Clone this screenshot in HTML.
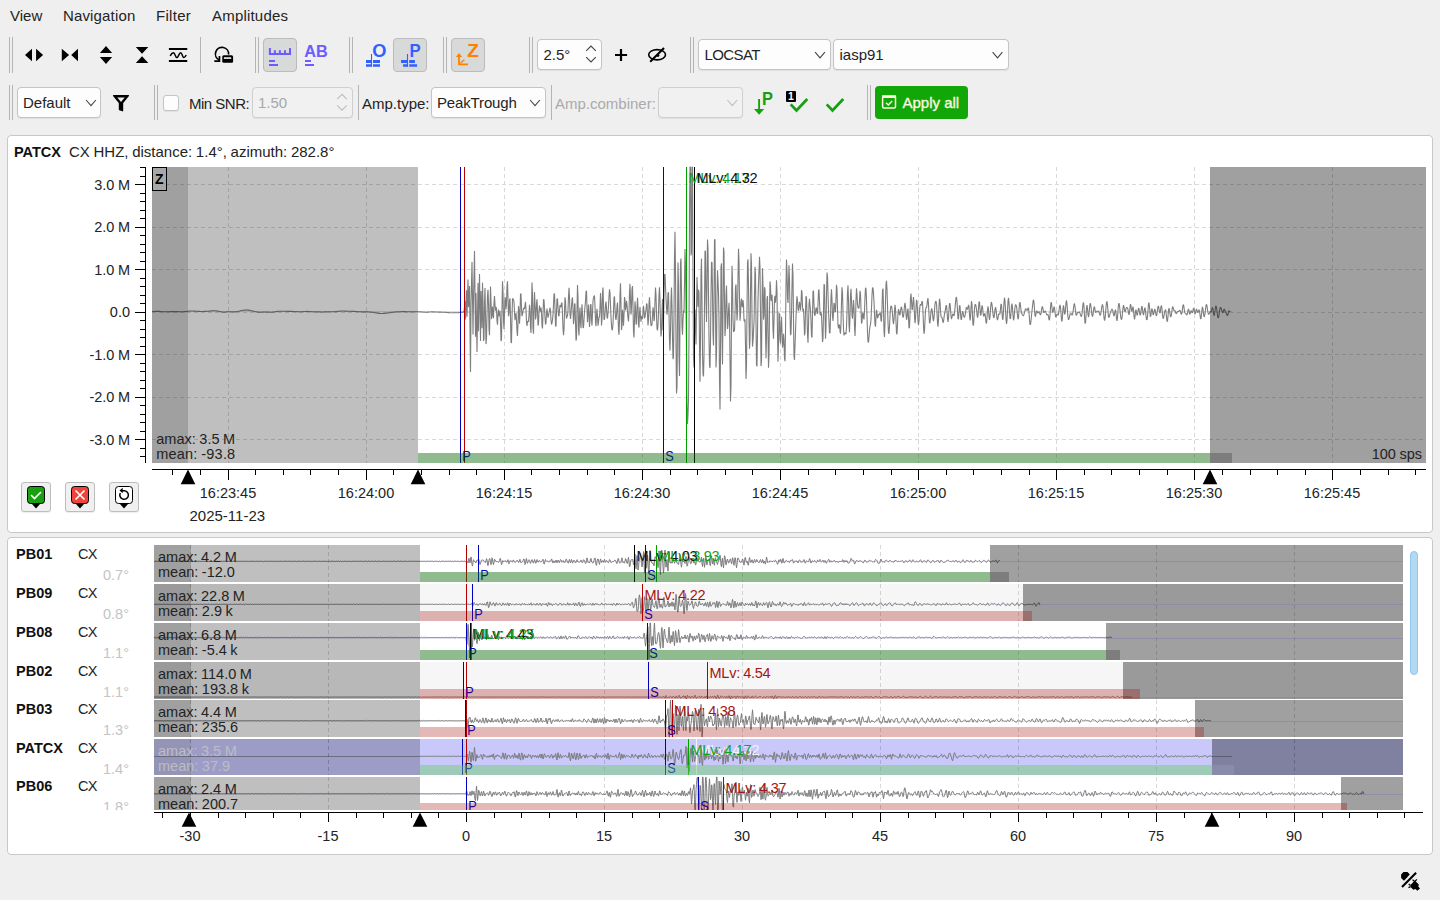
<!DOCTYPE html>
<html><head><meta charset="utf-8"><title>Amplitude picker</title>
<style>
html,body{margin:0;padding:0}
body{width:1440px;height:900px;overflow:hidden;background:#efefef;position:relative;font-family:"Liberation Sans",sans-serif;font-size:15px;color:#232323}
.a{position:absolute;white-space:nowrap}
.t{position:absolute;white-space:nowrap;line-height:18px;height:18px}
.box{position:absolute;box-sizing:border-box;border:1px solid #c4c4c4;border-radius:4px;background:#fdfdfd;box-shadow:0 1px 1px rgba(0,0,0,.07)}
.dis{background:#f1f1f1;border-color:#cfcfcf}
.chk{position:absolute;box-sizing:border-box;border:1px solid #bbb;border-radius:4px;background:#d8d9d9}
.panel{position:absolute;box-sizing:border-box;border:1px solid #c8c8c8;border-radius:4px;background:#fff}
.hd{position:absolute;width:1px;background:#b4b4b4}
svg{position:absolute;left:0;top:0}
svg text{font-family:"Liberation Sans",sans-serif;font-size:14.500px;word-spacing:-.5px}
</style></head><body>
<div class="t" style="left:10px;top:7px;">View</div>
<div class="t" style="left:63px;top:7px;letter-spacing:.15px">Navigation</div>
<div class="t" style="left:156px;top:7px;letter-spacing:.3px">Filter</div>
<div class="t" style="left:212px;top:7px;letter-spacing:.2px">Amplitudes</div>
<div class="hd" style="left:9px;top:37px;height:36px"></div><div class="hd" style="left:12px;top:37px;height:36px"></div>
<div class="hd" style="left:255px;top:37px;height:36px"></div><div class="hd" style="left:258px;top:37px;height:36px"></div>
<div class="hd" style="left:349px;top:37px;height:36px"></div><div class="hd" style="left:352px;top:37px;height:36px"></div>
<div class="hd" style="left:443px;top:37px;height:36px"></div><div class="hd" style="left:446px;top:37px;height:36px"></div>
<div class="hd" style="left:529px;top:37px;height:36px"></div><div class="hd" style="left:532px;top:37px;height:36px"></div>
<div class="hd" style="left:690px;top:37px;height:36px"></div><div class="hd" style="left:693px;top:37px;height:36px"></div>
<div class="hd" style="left:200px;top:37px;height:36px"></div>
<div class="hd" style="left:9px;top:85px;height:35px"></div><div class="hd" style="left:12px;top:85px;height:35px"></div>
<div class="hd" style="left:154px;top:85px;height:35px"></div><div class="hd" style="left:157px;top:85px;height:35px"></div>
<div class="hd" style="left:867px;top:85px;height:35px"></div><div class="hd" style="left:870px;top:85px;height:35px"></div>
<div class="hd" style="left:358px;top:85px;height:35px"></div>
<div class="hd" style="left:551px;top:85px;height:35px"></div>
<div class="chk" style="left:263px;top:38px;width:34px;height:34px"></div>
<div class="chk" style="left:393px;top:38px;width:34px;height:34px"></div>
<div class="chk" style="left:451px;top:38px;width:34px;height:34px"></div>
<div class="box" style="left:537px;top:39px;width:65px;height:31px"></div>
<div class="t" style="left:543.5px;top:45.5px;">2.5°</div>
<div class="box" style="left:698px;top:39px;width:133px;height:31px"></div>
<div class="t" style="left:704.5px;top:45.5px;letter-spacing:-.6px">LOCSAT</div>
<div class="box" style="left:833px;top:39px;width:176px;height:31px"></div>
<div class="t" style="left:839.5px;top:45.5px;">iasp91</div>
<div class="box" style="left:17px;top:87px;width:84px;height:31px"></div>
<div class="t" style="left:23px;top:94px;">Default</div>
<div class="box" style="left:163px;top:95px;width:16px;height:16px;border-radius:3px"></div>
<div class="t" style="left:189px;top:95px;letter-spacing:-.5px">Min SNR:</div>
<div class="box dis" style="left:252px;top:87px;width:101px;height:31px"></div>
<div class="t" style="left:258px;top:94px;color:#a8a8a8">1.50</div>
<div class="t" style="left:362px;top:95px;">Amp.type:</div>
<div class="box" style="left:431px;top:87px;width:115px;height:31px"></div>
<div class="t" style="left:437px;top:94px;letter-spacing:-.15px">PeakTrough</div>
<div class="t" style="left:555px;top:95px;color:#aaa">Amp.combiner:</div>
<div class="box dis" style="left:658px;top:87px;width:85px;height:31px"></div>
<div class="a" style="left:875px;top:86px;width:93px;height:33px;background:#11a706;border-radius:4px;box-sizing:border-box"></div>
<div class="t" style="left:902.5px;top:94px;color:#fdf6e0;-webkit-text-stroke:.35px #fdf6e0">Apply all</div>
<div class="panel" style="left:7px;top:135px;width:1426px;height:398px"></div>
<div class="panel" style="left:7px;top:537px;width:1426px;height:318px"></div>
<div class="box" style="left:21px;top:482px;width:30px;height:30px;background:#f0f0f0;border-color:#bdbdbd;border-radius:3px"></div>
<div class="box" style="left:65px;top:482px;width:30px;height:30px;background:#f0f0f0;border-color:#bdbdbd;border-radius:3px"></div>
<div class="box" style="left:109px;top:482px;width:30px;height:30px;background:#f0f0f0;border-color:#bdbdbd;border-radius:3px"></div>
<div class="a" style="left:1410px;top:551px;width:8px;height:124px;box-sizing:border-box;border:1px solid #8cc8f0;border-radius:4px;background:#b4d8f0"></div>
<svg width="1440" height="900" viewBox="0 0 1440 900">
<path d="M25 55.100l7-6.300v12.400zM43.100 55.100l-7-6.300v12.400z" fill="#000"/><path d="M61.800 48.800l7.300 6.300l-7.300 6.100zM78 48.800l-6.800 6.300l6.800 6.100z" fill="#000"/><path d="M106 45.900l6.100 7.100h-12.200zM106 64.100l6.100-7.100h-12.200z" fill="#000"/><path d="M135.800 47h12.500l-6.250 6.700zM135.800 63.100h12.500l-6.250-6.900z" fill="#000"/><path d="M168.900 49.050h18.350M168.900 61h18.350" stroke="#000" stroke-width="2" fill="none"/><path d="M170.200 55.800c1.100-2 2.200-3 3.300-3c1.700 0 1.700 4.700 3.400 4.700s2-4.700 3.700-4.700s1.700 4.700 3.400 4.700c1 0 1.600-1.200 2.200-2.500" stroke="#000" stroke-width="1.500" fill="none"/><path d="M219.300 60 a6.600 6.600 0 1 1 9.300-5.500" stroke="#000" stroke-width="1.700" fill="none"/><path d="M214.300 60.300h4.300v-4.300h1.700v6h-6z" fill="#000"/><rect x="222.250" y="55.200" width="10.850" height="7.600" rx="1.500" fill="#000"/><rect x="223.900" y="57.250" width="7.300" height="1.650" fill="#efefef"/><path d="M269.900 48v5.900h20.100v-5.900M274.900 50.200v4M279.900 50.200v4M285 50.200v4" stroke="#6a5cff" stroke-width="2" fill="none"/><path d="M269 60.900h6M269 65h9" stroke="#6a5cff" stroke-width="2"/><text x="304.300" y="57" style="font-weight:bold;font-size:16.300px" fill="#6a5cff">AB</text><path d="M305 60.900h6M305 65h9" stroke="#6a5cff" stroke-width="2"/><text transform="translate(372.200 57) scale(.96 1)" style="font-weight:bold;font-size:19px" fill="#3060ff">O</text><path d="M371.500 54v12.800" stroke="#3060ff" stroke-width="1.100"/><path d="M366 60h5.500v3h-5.500zM373 60h7v3h-7zM366 64.200h5.500v2.600h-5.500zM373 64.200h7v2.600h-7z" fill="#3060ff"/><text transform="translate(409.500 57) scale(.88 1)" style="font-weight:bold;font-size:19px" fill="#3060ff">P</text><path d="M407.500 54v12.800" stroke="#3060ff" stroke-width="1.100"/><path d="M401 60h6.500v3h-6.500zM409.200 60h5.700v3h-5.700zM403.100 64.200h4.400v2.600h-4.400zM409.200 64.200h7.900v2.600h-7.900z" fill="#3060ff"/><text x="467.300" y="57" style="font-weight:bold;font-size:19px" fill="#ff8000">Z</text><path d="M459 56.500v7.900h9" stroke="#ff8000" stroke-width="1.800" fill="none"/><path d="M460.500 63l3.900-3.200" stroke="#ff8000" stroke-width="1.300"/><path d="M459 53l3.100 4h-6.200z" fill="#ff8000"/><path d="M586.2 50.9L591 46.1L595.8 50.9" stroke="#444" stroke-width="1.1" fill="none"/><path d="M586.2 57.2L591 62.0L595.8 57.2" stroke="#444" stroke-width="1.1" fill="none"/><path d="M815.1 52.2L820 57.8L824.9 52.2" stroke="#444" stroke-width="1.1" fill="none"/><path d="M992.6 52.2L997.5 57.8L1002.4 52.2" stroke="#444" stroke-width="1.1" fill="none"/><path d="M86.1 100.0L91 105.6L95.9 100.0" stroke="#444" stroke-width="1.1" fill="none"/><path d="M530.1 100.0L535 105.6L539.9 100.0" stroke="#444" stroke-width="1.1" fill="none"/><path d="M337.2 99.10000000000001L342 94.3L346.8 99.10000000000001" stroke="#bdbdbd" stroke-width="1.1" fill="none"/><path d="M337.2 105.39999999999999L342 110.2L346.8 105.39999999999999" stroke="#bdbdbd" stroke-width="1.1" fill="none"/><path d="M727.4 100.0L732.3 105.6L737.1999999999999 100.0" stroke="#bdbdbd" stroke-width="1.1" fill="none"/><path d="M615 55h12.100M621 48.900v12.100" stroke="#000" stroke-width="2.200"/><ellipse cx="657.100" cy="54.750" rx="8.400" ry="5.100" stroke="#000" stroke-width="1.600" fill="none"/><circle cx="658" cy="55.600" r="1.400" fill="#000"/><path d="M650.200 61.800l13.800-13.900" stroke="#000" stroke-width="2.100"/><path d="M113.500 95.600h15l-5.900 7.200v8l-3.200-1.200v-6.800z" fill="#000" stroke="#000" stroke-width="1.200" stroke-linejoin="round"/><path d="M117.300 97.600h7.400l-3.700 4.400z" fill="#efefef"/><path d="M759.100 99v10.500" stroke="#14a010" stroke-width="1.900"/><path d="M754 109h10.200l-5.100 5.800z" fill="#14a010"/><text transform="translate(762 104.800) scale(.9 1)" style="font-weight:bold;font-size:18.200px" fill="#14a010">P</text><path d="M790.700 104.400l5.800 6.100l10.800-11.500" stroke="#14a010" stroke-width="2.700" fill="none"/><rect x="786" y="91.100" width="10" height="10.800" rx="1" fill="#000"/><text x="788.100" y="100.300" style="font-weight:bold;font-size:10.500px" fill="#fff">1</text><path d="M826.700 104.400l5.800 6.100l10.800-11.500" stroke="#14a010" stroke-width="2.700" fill="none"/><rect x="882.600" y="96.600" width="12.900" height="11.400" rx="1.200" fill="none" stroke="#fdf6e0" stroke-width="1.500"/><path d="M882 96.600h14.100" stroke="#fdf6e0" stroke-width="2.700"/><path d="M886 102.700l2.300 2.200l3.900-3.900" stroke="#fdf6e0" stroke-width="1.400" fill="none"/><path d="M1402 887l14.100-14.200" stroke="#000" stroke-width="2.100"/><path d="M1401.100 874.400l2.400-2.400h4l2.300 2.500l-5.800 6.200l-2.900-2.700z" fill="#000"/><path d="M1410.500 885l4.300-4.500l4 4l-.5 2.100l1.700 1.800l-2.700 2.300l-1.800-1.700l-2.200.8l-2.800-2.800z" fill="#000"/><path d="M1412.500 879.600l1.700 1.700M1416.800 879.400l-1.700 1.800M1408.700 884l1.800 1.400M1408.500 887.700l2-1" stroke="#000" stroke-width="1.300"/>
<g shape-rendering="crispEdges"><path d="M228.5 167V463" stroke="#d9d9d9" stroke-dasharray="4 3"/><path d="M366.5 167V463" stroke="#d9d9d9" stroke-dasharray="4 3"/><path d="M504.5 167V463" stroke="#d9d9d9" stroke-dasharray="4 3"/><path d="M642.5 167V463" stroke="#d9d9d9" stroke-dasharray="4 3"/><path d="M780.5 167V463" stroke="#d9d9d9" stroke-dasharray="4 3"/><path d="M918.5 167V463" stroke="#d9d9d9" stroke-dasharray="4 3"/><path d="M1056.5 167V463" stroke="#d9d9d9" stroke-dasharray="4 3"/><path d="M1194.5 167V463" stroke="#d9d9d9" stroke-dasharray="4 3"/><path d="M1332.5 167V463" stroke="#d9d9d9" stroke-dasharray="4 3"/><path d="M152 439.5H1426" stroke="#d9d9d9" stroke-dasharray="4 3"/><path d="M152 397.5H1426" stroke="#d9d9d9" stroke-dasharray="4 3"/><path d="M152 354.5H1426" stroke="#d9d9d9" stroke-dasharray="4 3"/><path d="M152 312.5H1426" stroke="#d9d9d9" stroke-dasharray="4 3"/><path d="M152 269.5H1426" stroke="#d9d9d9" stroke-dasharray="4 3"/><path d="M152 227.5H1426" stroke="#d9d9d9" stroke-dasharray="4 3"/><path d="M152 184.5H1426" stroke="#d9d9d9" stroke-dasharray="4 3"/><path d="M152 311.500H1232" stroke="#dedeea" /></g>
<path d="M152.0 311.5L152.5 311.5L153.0 311.5L153.5 311.5L154.0 311.5L154.5 311.4L155.0 311.4L155.5 311.4L156.0 311.4L156.5 311.4L157.0 311.4L157.5 311.4L158.0 311.4L158.5 311.4L159.0 311.4L159.5 311.4L160.0 311.5L160.5 311.5L161.0 311.6L161.5 311.6L162.0 311.6L162.5 311.7L163.0 311.7L163.5 311.7L164.0 311.7L164.5 311.8L165.0 311.8L165.5 311.8L166.0 311.8L166.5 311.8L167.0 311.7L167.5 311.7L168.0 311.7L168.5 311.7L169.0 311.7L169.5 311.6L170.0 311.6L170.5 311.6L171.0 311.6L171.5 311.6L172.0 311.6L172.5 311.6L173.0 311.6L173.5 311.6L174.0 311.6L174.5 311.6L175.0 311.6L175.5 311.6L176.0 311.6L176.5 311.6L177.0 311.6L177.5 311.6L178.0 311.6L178.5 311.7L179.0 311.7L179.5 311.7L180.0 311.7L180.5 311.7L181.0 311.7L181.5 311.7L182.0 311.7L182.5 311.7L183.0 311.7L183.5 311.7L184.0 311.7L184.5 311.6L185.0 311.6L185.5 311.6L186.0 311.5L186.5 311.4L187.0 311.4L187.5 311.3L188.0 311.2L188.5 311.2L189.0 311.1L189.5 311.1L190.0 311.0L190.5 311.0L191.0 311.0L191.5 311.0L192.0 311.0L192.5 311.0L193.0 311.0L193.5 311.0L194.0 311.1L194.5 311.1L195.0 311.1L195.5 311.2L196.0 311.2L196.5 311.3L197.0 311.3L197.5 311.3L198.0 311.4L198.5 311.4L199.0 311.4L199.5 311.4L200.0 311.5L200.5 311.5L201.0 311.5L201.5 311.5L202.0 311.5L202.5 311.5L203.0 311.5L203.5 311.5L204.0 311.4L204.5 311.4L205.0 311.4L205.5 311.4L206.0 311.4L206.5 311.3L207.0 311.3L207.5 311.3L208.0 311.2L208.5 311.2L209.0 311.1L209.5 311.1L210.0 311.0L210.5 311.0L211.0 310.9L211.5 310.9L212.0 310.8L212.5 310.8L213.0 310.7L213.5 310.7L214.0 310.7L214.5 310.7L215.0 310.7L215.5 310.8L216.0 310.8L216.5 310.9L217.0 311.0L217.5 311.1L218.0 311.2L218.5 311.3L219.0 311.4L219.5 311.5L220.0 311.6L220.5 311.7L221.0 311.8L221.5 311.9L222.0 312.0L222.5 312.0L223.0 312.1L223.5 312.1L224.0 312.1L224.5 312.1L225.0 312.1L225.5 312.0L226.0 312.0L226.5 311.9L227.0 311.9L227.5 311.9L228.0 311.8L228.5 311.8L229.0 311.8L229.5 311.8L230.0 311.8L230.5 311.8L231.0 311.8L231.5 311.8L232.0 311.9L232.5 311.9L233.0 311.9L233.5 311.9L234.0 311.9L234.5 311.9L235.0 311.9L235.5 311.8L236.0 311.8L236.5 311.7L237.0 311.6L237.5 311.5L238.0 311.4L238.5 311.3L239.0 311.2L239.5 311.1L240.0 310.9L240.5 310.8L241.0 310.7L241.5 310.6L242.0 310.5L242.5 310.4L243.0 310.3L243.5 310.3L244.0 310.2L244.5 310.1L245.0 310.1L245.5 310.1L246.0 310.0L246.5 310.0L247.0 310.0L247.5 310.1L248.0 310.1L248.5 310.1L249.0 310.2L249.5 310.3L250.0 310.4L250.5 310.5L251.0 310.6L251.5 310.7L252.0 310.8L252.5 311.0L253.0 311.1L253.5 311.2L254.0 311.4L254.5 311.5L255.0 311.6L255.5 311.7L256.0 311.8L256.5 311.9L257.0 312.0L257.5 312.1L258.0 312.1L258.5 312.1L259.0 312.2L259.5 312.2L260.0 312.2L260.5 312.2L261.0 312.2L261.5 312.1L262.0 312.1L262.5 312.1L263.0 312.1L263.5 312.1L264.0 312.0L264.5 312.0L265.0 312.0L265.5 312.0L266.0 312.0L266.5 312.1L267.0 312.1L267.5 312.1L268.0 312.1L268.5 312.1L269.0 312.2L269.5 312.2L270.0 312.2L270.5 312.2L271.0 312.2L271.5 312.2L272.0 312.2L272.5 312.1L273.0 312.1L273.5 312.0L274.0 312.0L274.5 311.9L275.0 311.8L275.5 311.7L276.0 311.6L276.5 311.6L277.0 311.5L277.5 311.4L278.0 311.4L278.5 311.3L279.0 311.2L279.5 311.2L280.0 311.2L280.5 311.2L281.0 311.2L281.5 311.2L282.0 311.2L282.5 311.2L283.0 311.2L283.5 311.2L284.0 311.2L284.5 311.3L285.0 311.3L285.5 311.3L286.0 311.3L286.5 311.3L287.0 311.4L287.5 311.4L288.0 311.4L288.5 311.4L289.0 311.4L289.5 311.4L290.0 311.4L290.5 311.4L291.0 311.4L291.5 311.4L292.0 311.4L292.5 311.4L293.0 311.5L293.5 311.5L294.0 311.5L294.5 311.5L295.0 311.5L295.5 311.6L296.0 311.6L296.5 311.6L297.0 311.6L297.5 311.7L298.0 311.7L298.5 311.7L299.0 311.7L299.5 311.7L300.0 311.7L300.5 311.7L301.0 311.7L301.5 311.7L302.0 311.7L302.5 311.7L303.0 311.6L303.5 311.6L304.0 311.6L304.5 311.5L305.0 311.5L305.5 311.5L306.0 311.5L306.5 311.4L307.0 311.4L307.5 311.4L308.0 311.4L308.5 311.5L309.0 311.5L309.5 311.5L310.0 311.6L310.5 311.6L311.0 311.6L311.5 311.7L312.0 311.7L312.5 311.7L313.0 311.8L313.5 311.8L314.0 311.8L314.5 311.8L315.0 311.8L315.5 311.8L316.0 311.9L316.5 311.9L317.0 311.9L317.5 311.9L318.0 311.9L318.5 311.9L319.0 311.9L319.5 311.9L320.0 311.9L320.5 311.9L321.0 312.0L321.5 312.0L322.0 312.0L322.5 312.0L323.0 312.0L323.5 312.0L324.0 311.9L324.5 311.9L325.0 311.9L325.5 311.9L326.0 311.9L326.5 311.9L327.0 311.9L327.5 311.8L328.0 311.8L328.5 311.8L329.0 311.8L329.5 311.8L330.0 311.8L330.5 311.8L331.0 311.8L331.5 311.8L332.0 311.8L332.5 311.8L333.0 311.8L333.5 311.8L334.0 311.8L334.5 311.7L335.0 311.7L335.5 311.6L336.0 311.6L336.5 311.5L337.0 311.5L337.5 311.4L338.0 311.4L338.5 311.3L339.0 311.2L339.5 311.2L340.0 311.1L340.5 311.1L341.0 311.0L341.5 311.0L342.0 311.0L342.5 311.0L343.0 311.0L343.5 311.0L344.0 311.0L344.5 311.0L345.0 311.1L345.5 311.1L346.0 311.1L346.5 311.2L347.0 311.2L347.5 311.2L348.0 311.2L348.5 311.3L349.0 311.3L349.5 311.3L350.0 311.3L350.5 311.3L351.0 311.3L351.5 311.4L352.0 311.4L352.5 311.4L353.0 311.4L353.5 311.4L354.0 311.4L354.5 311.4L355.0 311.4L355.5 311.5L356.0 311.5L356.5 311.5L357.0 311.6L357.5 311.6L358.0 311.6L358.5 311.7L359.0 311.7L359.5 311.8L360.0 311.8L360.5 311.8L361.0 311.9L361.5 311.9L362.0 311.9L362.5 311.9L363.0 311.9L363.5 311.9L364.0 311.9L364.5 311.9L365.0 311.9L365.5 311.9L366.0 311.9L366.5 311.9L367.0 311.9L367.5 311.9L368.0 311.9L368.5 312.0L369.0 312.0L369.5 312.0L370.0 312.0L370.5 312.1L371.0 312.1L371.5 312.2L372.0 312.2L372.5 312.3L373.0 312.3L373.5 312.4L374.0 312.5L374.5 312.6L375.0 312.7L375.5 312.8L376.0 312.9L376.5 313.0L377.0 313.0L377.5 313.1L378.0 313.2L378.5 313.3L379.0 313.4L379.5 313.4L380.0 313.5L380.5 313.5L381.0 313.5L381.5 313.5L382.0 313.5L382.5 313.5L383.0 313.5L383.5 313.5L384.0 313.4L384.5 313.4L385.0 313.3L385.5 313.3L386.0 313.2L386.5 313.2L387.0 313.1L387.5 313.0L388.0 312.9L388.5 312.9L389.0 312.8L389.5 312.7L390.0 312.6L390.5 312.6L391.0 312.5L391.5 312.4L392.0 312.4L392.5 312.3L393.0 312.2L393.5 312.2L394.0 312.1L394.5 312.1L395.0 312.0L395.5 312.0L396.0 311.9L396.5 311.9L397.0 311.9L397.5 311.8L398.0 311.8L398.5 311.8L399.0 311.7L399.5 311.7L400.0 311.7L400.5 311.7L401.0 311.7L401.5 311.6L402.0 311.6L402.5 311.6L403.0 311.6L403.5 311.6L404.0 311.6L404.5 311.6L405.0 311.6L405.5 311.6L406.0 311.7L406.5 311.7L407.0 311.7L407.5 311.7L408.0 311.8L408.5 311.8L409.0 311.8L409.5 311.8L410.0 311.8L410.5 311.9L411.0 311.9L411.5 311.9L412.0 311.8L412.5 311.8L413.0 311.8L413.5 311.8L414.0 311.8L414.5 311.8L415.0 311.7L415.5 311.7L416.0 311.7L416.5 311.7L417.0 311.7L417.5 311.7L418.0 311.7L418.5 311.7L419.0 311.8L419.5 311.8L420.0 311.8L420.5 311.8L421.0 311.9L421.5 311.9L422.0 312.0L422.5 312.0L423.0 312.1L423.5 312.1L424.0 312.1L424.5 312.1L425.0 312.2L425.5 312.2L426.0 312.2L426.5 312.2L427.0 312.2L427.5 312.1L428.0 312.1L428.5 312.1L429.0 312.0L429.5 312.0L430.0 312.0L430.5 312.0L431.0 311.9L431.5 311.9L432.0 311.9L432.5 311.9L433.0 311.9L433.5 311.9L434.0 311.9L434.5 312.0L435.0 312.0L435.5 312.0L436.0 312.0L436.5 312.0L437.0 312.0L437.5 312.1L438.0 312.1L438.5 312.1L439.0 312.1L439.5 312.1L440.0 312.1L440.5 312.1L441.0 312.1L441.5 312.2L442.0 312.2L442.5 312.2L443.0 312.2L443.5 312.3L444.0 312.3L444.5 312.3L445.0 312.4L445.5 312.4L446.0 312.4L446.5 312.5L447.0 312.5L447.5 312.5L448.0 312.6L448.5 312.6L449.0 312.6L449.5 312.7L450.0 312.7L450.5 312.7L451.0 312.8L451.5 312.8L452.0 312.8L452.5 312.8L453.0 312.8L453.5 312.8L454.0 312.8L454.5 312.8L455.0 312.8L455.5 312.8L456.0 312.8L456.5 312.8L457.0 312.8L457.5 312.7L458.0 312.7L458.5 312.6L459.0 312.6L459.5 312.5L460.0 312.5L460.5 312.4L461.0 312.4L461.5 312.3L462.0 312.3L462.5 312.3L463.0 312.3L463.5 311.7L464.0 311.8L464.5 306.7L465.0 301.1L465.5 319.4L466.0 304.2L466.5 290.3L467.0 316.7L467.5 298.1L468.0 279.4L468.5 307.1L469.0 296.8L469.5 286.1L470.0 328.9L470.5 372.0L471.0 303.9L471.5 283.4L472.0 262.0L472.5 297.8L473.0 334.5L473.5 299.5L474.0 276.2L474.5 251.0L475.0 293.2L475.5 336.7L476.0 292.9L476.5 322.7L477.0 352.0L477.5 317.3L478.0 282.9L478.5 331.2L479.0 302.1L479.5 273.9L480.0 307.4L480.5 341.1L481.0 290.9L481.5 310.3L482.0 328.3L482.5 282.7L483.0 302.5L483.5 340.8L484.0 339.4L484.5 301.9L485.0 288.1L485.5 316.7L486.0 344.1L486.5 338.0L487.0 314.8L487.5 296.3L488.0 289.8L488.5 302.9L489.0 329.2L489.5 335.2L490.0 307.6L490.5 286.5L491.0 300.9L491.5 319.1L492.0 313.0L492.5 306.5L493.0 316.3L493.5 318.2L494.0 303.1L494.5 296.1L495.0 305.0L495.5 310.7L496.0 306.8L496.5 308.8L497.0 320.9L497.5 324.6L498.0 314.2L498.5 309.6L499.0 316.0L499.5 315.6L500.0 310.8L500.5 321.2L501.0 341.1L501.5 339.3L502.0 307.5L502.5 281.3L503.0 292.0L503.5 320.5L504.0 329.1L504.5 313.1L505.0 297.1L505.5 299.4L506.0 309.5L506.5 304.3L507.0 286.0L507.5 281.2L508.0 299.0L508.5 316.2L509.0 313.3L509.5 300.2L510.0 298.5L510.5 317.8L511.0 342.6L511.5 342.9L512.0 317.5L512.5 298.7L513.0 298.6L513.5 300.2L514.0 301.8L514.5 312.3L515.0 320.3L515.5 316.3L516.0 312.8L516.5 319.7L517.0 331.6L517.5 336.0L518.0 322.7L518.5 306.1L519.0 310.6L519.5 323.8L520.0 314.9L520.5 294.3L521.0 293.4L521.5 308.5L522.0 316.2L522.5 314.3L523.0 311.1L523.5 308.4L524.0 308.0L524.5 309.0L525.0 305.4L525.5 301.8L526.0 309.5L526.5 322.6L527.0 326.0L527.5 321.6L528.0 321.0L528.5 321.9L529.0 314.7L529.5 304.7L530.0 308.9L530.5 327.4L531.0 333.0L531.5 308.4L532.0 282.6L532.5 294.7L533.0 328.5L533.5 333.7L534.0 307.3L534.5 292.0L535.0 304.2L535.5 319.4L536.0 316.7L536.5 303.5L537.0 299.3L537.5 311.5L538.0 325.5L538.5 323.9L539.0 311.2L539.5 305.6L540.0 310.2L540.5 311.5L541.0 307.5L541.5 312.3L542.0 325.6L542.5 328.4L543.0 313.9L543.5 299.6L544.0 299.7L544.5 308.4L545.0 317.6L545.5 324.5L546.0 322.9L546.5 313.1L547.0 308.5L547.5 313.8L548.0 317.6L548.5 315.4L549.0 312.9L549.5 310.3L550.0 307.6L550.5 310.8L551.0 319.6L551.5 324.5L552.0 323.0L552.5 319.8L553.0 314.6L553.5 304.7L554.0 294.1L554.5 293.6L555.0 308.3L555.5 325.7L556.0 326.4L556.5 311.4L557.0 298.8L557.5 299.0L558.0 307.6L558.5 315.5L559.0 316.3L559.5 310.2L560.0 305.0L560.5 306.3L561.0 307.2L561.5 302.7L562.0 303.0L562.5 314.5L563.0 328.3L563.5 335.3L564.0 329.9L564.5 311.8L565.0 297.2L565.5 301.1L566.0 313.8L566.5 318.6L567.0 316.7L567.5 315.6L568.0 310.5L568.5 296.7L569.0 287.9L569.5 297.2L570.0 313.5L570.5 318.9L571.0 313.7L571.5 306.7L572.0 299.6L572.5 297.4L573.0 309.5L573.5 324.1L574.0 319.6L574.5 304.2L575.0 303.6L575.5 321.7L576.0 340.6L576.5 338.3L577.0 309.5L577.5 284.9L578.0 298.0L578.5 330.0L579.0 335.5L579.5 314.8L580.0 307.5L580.5 322.5L581.0 328.3L581.5 313.5L582.0 304.4L582.5 314.9L583.0 327.6L583.5 327.6L584.0 319.5L584.5 311.6L585.0 306.8L585.5 301.4L586.0 291.7L586.5 290.7L587.0 308.2L587.5 322.3L588.0 313.9L588.5 304.5L589.0 314.6L589.5 326.9L590.0 320.1L590.5 304.5L591.0 304.5L591.5 319.9L592.0 325.6L592.5 313.4L593.0 301.0L593.5 297.9L594.0 296.1L594.5 295.5L595.0 305.7L595.5 322.0L596.0 326.1L596.5 315.6L597.0 308.7L597.5 316.4L598.0 325.6L598.5 322.5L599.0 317.1L599.5 317.2L600.0 307.7L600.5 293.1L601.0 302.7L601.5 325.5L602.0 319.6L602.5 292.9L603.0 287.5L603.5 305.5L604.0 319.2L604.5 319.6L605.0 313.3L605.5 305.2L606.0 301.6L606.5 308.1L607.0 317.2L607.5 318.5L608.0 313.3L608.5 306.1L609.0 296.4L609.5 289.3L610.0 292.8L610.5 304.5L611.0 316.8L611.5 325.9L612.0 330.2L612.5 329.5L613.0 323.9L613.5 311.4L614.0 297.7L614.5 296.5L615.0 307.6L615.5 317.6L616.0 319.9L616.5 315.4L617.0 306.1L617.5 302.6L618.0 313.8L618.5 330.2L619.0 334.8L619.5 320.1L620.0 294.1L620.5 283.3L621.0 304.6L621.5 330.1L622.0 325.6L622.5 309.8L623.0 315.2L623.5 325.8L624.0 314.2L624.5 297.1L625.0 300.2L625.5 310.3L626.0 307.3L626.5 300.9L627.0 304.5L627.5 312.0L628.0 318.0L628.5 321.5L629.0 312.7L629.5 292.0L630.0 283.9L630.5 299.6L631.0 314.6L631.5 306.9L632.0 288.8L632.5 286.1L633.0 306.5L633.5 332.0L634.0 337.5L634.5 318.9L635.0 301.4L635.5 307.5L636.0 324.0L636.5 324.3L637.0 308.2L637.5 297.9L638.0 306.9L638.5 324.5L639.0 327.6L639.5 313.4L640.0 307.0L640.5 317.0L641.0 321.6L641.5 316.2L642.0 316.4L642.5 319.2L643.0 312.4L643.5 305.9L644.0 311.1L644.5 318.2L645.0 317.1L645.5 313.4L646.0 310.2L646.5 304.4L647.0 303.6L647.5 314.9L648.0 325.5L648.5 319.6L649.0 303.6L649.5 297.3L650.0 307.0L650.5 319.9L651.0 325.2L651.5 325.8L652.0 324.0L652.5 315.5L653.0 307.3L653.5 311.6L654.0 321.2L654.5 317.5L655.0 299.8L655.5 287.5L656.0 295.0L656.5 314.6L657.0 328.7L657.5 330.4L658.0 324.6L658.5 312.3L659.0 294.8L659.5 287.2L660.0 301.1L660.5 324.0L661.0 336.5L661.5 330.4L662.0 311.0L662.5 299.1L663.0 330.3L663.5 321.3L664.0 295.8L664.5 274.6L665.0 274.0L665.5 286.4L666.0 297.6L666.5 307.4L667.0 314.7L667.5 308.4L668.0 293.2L668.5 292.2L669.0 313.7L669.5 340.9L670.0 350.6L670.5 331.7L671.0 299.8L671.5 287.4L672.0 306.2L672.5 337.0L673.0 359.2L673.5 356.9L674.0 315.8L674.5 255.3L675.0 231.7L675.5 271.8L676.0 342.5L676.5 393.4L677.0 387.3L677.5 321.7L678.0 262.5L678.5 284.6L679.0 356.5L679.5 376.0L680.0 320.5L680.5 263.4L681.0 258.6L681.5 293.0L682.0 326.8L682.5 334.7L683.0 320.2L683.5 310.4L684.0 312.7L684.5 284.8L685.0 249.1L685.5 265.1L686.0 306.6L686.5 352.5L687.0 406.4L687.5 423.9L688.0 414.8L688.5 400.2L689.0 332.0L689.5 211.5L690.0 167.0L690.5 167.0L691.0 255.4L691.5 252.1L692.0 167.0L692.5 167.0L693.0 276.5L693.5 357.0L694.0 367.4L694.5 335.3L695.0 309.5L695.5 328.3L696.0 344.5L696.5 310.8L697.0 276.9L697.5 291.5L698.0 306.7L698.5 289.7L699.0 293.0L699.5 346.6L700.0 381.8L700.5 340.9L701.0 273.0L701.5 258.5L702.0 302.1L702.5 350.9L703.0 374.0L703.5 376.4L704.0 356.3L704.5 304.4L705.0 250.7L705.5 251.6L706.0 300.5L706.5 322.1L707.0 282.4L707.5 239.5L708.0 249.3L708.5 294.9L709.0 337.6L709.5 364.8L710.0 368.1L710.5 339.8L711.0 294.7L711.5 262.3L712.0 262.2L712.5 293.1L713.0 334.1L713.5 345.6L714.0 300.0L714.5 239.8L715.0 239.6L715.5 307.0L716.0 367.4L716.5 354.3L717.0 297.3L717.5 270.2L718.0 280.7L718.5 293.5L719.0 320.4L719.5 378.8L720.0 409.4L720.5 352.3L721.0 267.1L721.5 263.4L722.0 333.8L722.5 364.5L723.0 309.5L723.5 247.5L724.0 251.9L724.5 301.7L725.0 336.1L725.5 326.9L726.0 295.6L726.5 285.6L727.0 308.0L727.5 328.9L728.0 325.3L728.5 310.6L729.0 302.8L729.5 315.9L730.0 359.0L730.5 401.5L731.0 386.2L731.5 315.2L732.0 265.8L732.5 282.3L733.0 320.1L733.5 331.9L734.0 330.7L734.5 331.0L735.0 314.6L735.5 287.5L736.0 284.4L736.5 305.0L737.0 320.4L737.5 312.4L738.0 277.8L738.5 248.7L739.0 261.1L739.5 299.0L740.0 320.7L740.5 315.1L741.0 301.5L741.5 298.5L742.0 305.7L742.5 307.0L743.0 300.1L743.5 305.0L744.0 320.3L744.5 321.5L745.0 319.3L745.5 345.7L746.0 379.1L746.5 365.6L747.0 308.5L747.5 263.1L748.0 259.2L748.5 285.1L749.0 321.8L749.5 348.7L750.0 339.9L750.5 293.8L751.0 253.2L751.5 264.8L752.0 315.4L752.5 346.6L753.0 341.1L753.5 331.4L754.0 322.7L754.5 296.0L755.0 266.8L755.5 274.3L756.0 321.4L756.5 364.9L757.0 366.2L757.5 332.5L758.0 299.5L758.5 283.8L759.0 271.1L759.5 256.7L760.0 267.0L760.5 316.5L761.0 366.1L761.5 360.9L762.0 306.0L762.5 268.2L763.0 286.2L763.5 319.6L764.0 315.4L764.5 287.2L765.0 289.7L765.5 330.9L766.0 358.3L766.5 336.7L767.0 298.5L767.5 296.1L768.0 334.3L768.5 367.7L769.0 355.7L769.5 311.0L770.0 281.4L770.5 286.4L771.0 300.6L771.5 300.2L772.0 294.8L772.5 305.6L773.0 329.5L773.5 338.8L774.0 320.9L774.5 298.7L775.0 295.9L775.5 302.7L776.0 295.5L776.5 280.2L777.0 291.0L777.5 333.5L778.0 361.7L778.5 343.4L779.0 312.6L779.5 315.2L780.0 339.2L780.5 343.4L781.0 325.2L781.5 316.8L782.0 331.9L782.5 347.8L783.0 344.1L783.5 333.7L784.0 339.9L784.5 358.4L785.0 361.2L785.5 331.4L786.0 285.4L786.5 259.4L787.0 271.0L787.5 297.7L788.0 302.9L788.5 281.5L789.0 265.2L789.5 280.2L790.0 313.7L790.5 335.2L791.0 333.6L791.5 315.2L792.0 285.9L792.5 263.4L793.0 275.7L793.5 320.1L794.0 356.4L794.5 359.9L795.0 345.5L795.5 331.5L796.0 317.8L796.5 303.1L797.0 296.2L797.5 300.9L798.0 309.0L798.5 310.9L799.0 306.0L799.5 301.9L800.0 305.5L800.5 310.4L801.0 303.5L801.5 290.3L802.0 291.7L802.5 306.3L803.0 311.5L803.5 308.8L804.0 319.1L804.5 335.4L805.0 332.4L805.5 311.9L806.0 296.3L806.5 297.2L807.0 313.2L807.5 334.8L808.0 342.7L808.5 326.5L809.0 304.4L809.5 298.9L810.0 305.4L810.5 311.0L811.0 320.7L811.5 336.4L812.0 337.6L812.5 314.6L813.0 291.3L813.5 290.7L814.0 304.9L814.5 314.9L815.0 315.8L815.5 312.0L816.0 307.9L816.5 308.0L817.0 312.9L817.5 314.0L818.0 304.1L818.5 290.8L819.0 289.5L819.5 301.7L820.0 313.7L820.5 315.4L821.0 312.0L821.5 314.8L822.0 328.1L822.5 342.1L823.0 338.7L823.5 311.9L824.0 284.2L824.5 285.3L825.0 314.9L825.5 338.7L826.0 328.6L826.5 295.4L827.0 272.6L827.5 276.3L828.0 294.1L828.5 310.1L829.0 322.6L829.5 332.9L830.0 333.0L830.5 317.6L831.0 297.0L831.5 289.4L832.0 300.0L832.5 315.9L833.0 321.0L833.5 312.8L834.0 303.1L834.5 304.0L835.0 312.0L835.5 311.8L836.0 297.8L836.5 284.8L837.0 289.3L837.5 308.5L838.0 325.0L838.5 328.4L839.0 324.7L839.5 324.9L840.0 330.8L840.5 333.6L841.0 323.0L841.5 301.8L842.0 287.3L842.5 292.7L843.0 312.2L843.5 329.3L844.0 335.4L844.5 333.9L845.0 332.7L845.5 334.1L846.0 333.8L846.5 327.0L847.0 311.5L847.5 292.5L848.0 285.4L848.5 300.6L849.0 324.6L849.5 332.2L850.0 316.5L850.5 295.4L851.0 288.8L851.5 299.9L852.0 315.2L852.5 318.7L853.0 308.6L853.5 300.0L854.0 307.7L854.5 326.6L855.0 336.0L855.5 322.9L856.0 299.4L856.5 288.2L857.0 294.5L857.5 304.1L858.0 307.4L858.5 308.3L859.0 307.9L859.5 300.6L860.0 290.9L860.5 293.6L861.0 310.1L861.5 323.5L862.0 322.0L862.5 314.0L863.0 312.5L863.5 317.7L864.0 319.4L864.5 311.0L865.0 297.1L865.5 287.7L866.0 288.8L866.5 299.9L867.0 316.5L867.5 332.4L868.0 341.7L868.5 342.5L869.0 337.0L869.5 330.1L870.0 326.3L870.5 324.6L871.0 319.2L871.5 308.0L872.0 295.4L872.5 287.8L873.0 287.8L873.5 293.4L874.0 302.0L874.5 313.7L875.0 324.9L875.5 326.6L876.0 317.3L876.5 309.8L877.0 312.7L877.5 318.2L878.0 317.3L878.5 314.3L879.0 314.5L879.5 314.6L880.0 312.3L880.5 313.9L881.0 320.6L881.5 321.6L882.0 308.1L882.5 290.2L883.0 288.6L883.5 308.5L884.0 331.6L884.5 337.1L885.0 322.4L885.5 300.5L886.0 284.4L886.5 280.7L887.0 289.4L887.5 305.7L888.0 322.3L888.5 332.8L889.0 333.8L889.5 326.4L890.0 316.1L890.5 308.5L891.0 305.8L891.5 306.3L892.0 308.8L892.5 313.9L893.0 320.7L893.5 324.1L894.0 319.9L894.5 310.8L895.0 304.8L895.5 308.8L896.0 321.4L896.5 333.1L897.0 334.2L897.5 324.7L898.0 313.6L898.5 309.1L899.0 311.4L899.5 314.8L900.0 314.9L900.5 311.4L901.0 307.7L901.5 306.9L902.0 309.8L902.5 314.5L903.0 317.6L903.5 316.6L904.0 311.7L904.5 305.8L905.0 302.9L905.5 306.0L906.0 313.9L906.5 319.8L907.0 317.6L907.5 310.2L908.0 308.6L908.5 317.6L909.0 328.2L909.5 327.4L910.0 313.4L910.5 298.0L911.0 293.6L911.5 301.0L912.0 309.6L912.5 309.5L913.0 301.7L913.5 297.1L914.0 303.3L914.5 316.0L915.0 323.3L915.5 318.9L916.0 307.7L916.5 299.8L917.0 301.4L917.5 310.9L918.0 321.3L918.5 325.3L919.0 320.7L919.5 311.7L920.0 305.2L920.5 304.2L921.0 305.5L921.5 304.1L922.0 301.0L922.5 302.4L923.0 312.3L923.5 326.0L924.0 333.8L924.5 330.6L925.0 319.9L925.5 310.6L926.0 307.5L926.5 307.6L927.0 305.2L927.5 300.1L928.0 298.2L928.5 304.3L929.0 315.2L929.5 323.0L930.0 323.0L930.5 317.5L931.0 311.7L931.5 308.7L932.0 309.2L932.5 313.1L933.0 318.6L933.5 321.2L934.0 317.7L934.5 310.4L935.0 304.4L935.5 301.6L936.0 301.2L936.5 304.1L937.0 312.4L937.5 322.7L938.0 326.6L938.5 319.1L939.0 306.2L939.5 298.7L940.0 301.7L940.5 310.2L941.0 316.2L941.5 317.2L942.0 317.4L942.5 319.8L943.0 322.6L943.5 321.8L944.0 317.7L944.5 313.9L945.0 311.8L945.5 309.1L946.0 305.8L946.5 305.4L947.0 310.7L947.5 318.5L948.0 322.0L948.5 318.1L949.0 310.0L949.5 303.6L950.0 303.4L950.5 309.0L951.0 315.9L951.5 319.1L952.0 317.4L952.5 314.5L953.0 313.9L953.5 315.4L954.0 315.8L954.5 313.2L955.0 308.3L955.5 302.6L956.0 298.1L956.5 297.1L957.0 301.9L957.5 310.9L958.0 318.7L958.5 319.1L959.0 312.3L959.5 305.5L960.0 306.0L960.5 313.1L961.0 319.5L961.5 319.4L962.0 314.7L962.5 311.4L963.0 312.2L963.5 315.2L964.0 317.2L964.5 317.3L965.0 315.8L965.5 312.8L966.0 309.1L966.5 307.1L967.0 308.3L967.5 309.6L968.0 307.7L968.5 304.9L969.0 306.9L969.5 314.6L970.0 320.5L970.5 317.6L971.0 307.8L971.5 301.0L972.0 304.3L972.5 315.6L973.0 325.1L973.5 325.2L974.0 317.4L974.5 308.8L975.0 304.6L975.5 304.4L976.0 306.0L976.5 309.4L977.0 314.3L977.5 317.7L978.0 315.7L978.5 308.4L979.0 301.8L979.5 302.0L980.0 308.7L980.5 315.1L981.0 315.0L981.5 309.6L982.0 305.4L982.5 306.7L983.0 311.8L983.5 316.0L984.0 316.2L984.5 314.0L985.0 313.5L985.5 317.3L986.0 322.6L986.5 323.5L987.0 318.0L987.5 310.1L988.0 306.3L988.5 309.5L989.0 316.2L989.5 319.8L990.0 317.0L990.5 309.9L991.0 303.6L991.5 302.0L992.0 304.6L992.5 309.1L993.0 313.9L993.5 317.3L994.0 317.7L994.5 314.4L995.0 309.6L995.5 307.2L996.0 309.1L996.5 313.9L997.0 318.5L997.5 320.1L998.0 318.1L998.5 314.8L999.0 313.7L999.5 314.6L1000.0 313.7L1000.5 308.8L1001.0 303.9L1001.5 304.9L1002.0 312.3L1002.5 319.4L1003.0 319.2L1003.5 311.5L1004.0 302.1L1004.5 297.7L1005.0 301.0L1005.5 310.0L1006.0 319.5L1006.5 323.9L1007.0 320.4L1007.5 310.8L1008.0 301.2L1008.5 297.8L1009.0 302.6L1009.5 311.7L1010.0 318.6L1010.5 318.8L1011.0 312.9L1011.5 305.9L1012.0 303.6L1012.5 308.2L1013.0 315.8L1013.5 320.3L1014.0 318.4L1014.5 312.4L1015.0 307.0L1015.5 304.7L1016.0 304.9L1016.5 306.5L1017.0 310.1L1017.5 315.5L1018.0 319.3L1018.5 317.5L1019.0 310.4L1019.5 303.6L1020.0 302.2L1020.5 305.8L1021.0 310.2L1021.5 312.9L1022.0 314.1L1022.5 315.0L1023.0 315.7L1023.5 315.6L1024.0 314.4L1024.5 312.4L1025.0 310.3L1025.5 308.9L1026.0 308.7L1026.5 309.7L1027.0 310.6L1027.5 309.9L1028.0 308.1L1028.5 308.1L1029.0 312.3L1029.5 319.2L1030.0 324.4L1030.5 324.6L1031.0 320.7L1031.5 315.5L1032.0 310.9L1032.5 306.2L1033.0 301.7L1033.5 299.5L1034.0 302.5L1034.5 309.5L1035.0 315.7L1035.5 316.6L1036.0 313.5L1036.5 310.9L1037.0 311.1L1037.5 312.7L1038.0 313.1L1038.5 312.1L1039.0 311.5L1039.5 312.4L1040.0 314.2L1040.5 315.1L1041.0 313.6L1041.5 310.0L1042.0 306.9L1042.5 306.6L1043.0 309.1L1043.5 311.9L1044.0 312.7L1044.5 311.9L1045.0 311.0L1045.5 311.3L1046.0 312.6L1046.5 314.2L1047.0 315.0L1047.5 314.6L1048.0 314.4L1048.5 316.3L1049.0 319.6L1049.5 320.1L1050.0 315.2L1050.5 307.4L1051.0 302.2L1051.5 303.0L1052.0 308.0L1052.5 312.2L1053.0 312.4L1053.5 309.3L1054.0 306.7L1054.5 307.8L1055.0 312.2L1055.5 316.4L1056.0 317.2L1056.5 315.4L1057.0 313.9L1057.5 314.3L1058.0 315.2L1058.5 314.3L1059.0 310.9L1059.5 306.8L1060.0 304.8L1060.5 307.0L1061.0 313.4L1061.5 320.0L1062.0 321.5L1062.5 316.1L1063.0 308.4L1063.5 305.3L1064.0 308.7L1064.5 313.7L1065.0 314.3L1065.5 309.1L1066.0 302.7L1066.5 300.4L1067.0 304.3L1067.5 311.4L1068.0 317.4L1068.5 319.8L1069.0 319.0L1069.5 316.6L1070.0 314.4L1070.5 313.4L1071.0 313.6L1071.5 314.5L1072.0 315.2L1072.5 314.6L1073.0 312.1L1073.5 308.2L1074.0 304.6L1074.5 303.6L1075.0 306.5L1075.5 311.3L1076.0 314.8L1076.5 315.2L1077.0 313.8L1077.5 312.7L1078.0 312.5L1078.5 312.5L1079.0 312.2L1079.5 312.1L1080.0 313.1L1080.5 314.9L1081.0 316.4L1081.5 316.3L1082.0 313.8L1082.5 309.0L1083.0 304.0L1083.5 302.4L1084.0 306.9L1084.5 315.9L1085.0 323.2L1085.5 323.3L1086.0 316.3L1086.5 308.2L1087.0 305.1L1087.5 308.5L1088.0 314.4L1088.5 317.1L1089.0 314.3L1089.5 308.4L1090.0 303.8L1090.5 303.5L1091.0 306.9L1091.5 311.5L1092.0 315.2L1092.5 316.6L1093.0 314.8L1093.5 310.6L1094.0 307.0L1094.5 306.8L1095.0 309.7L1095.5 312.3L1096.0 312.6L1096.5 311.7L1097.0 311.2L1097.5 311.2L1098.0 311.1L1098.5 310.9L1099.0 311.9L1099.5 313.9L1100.0 315.4L1100.5 314.8L1101.0 312.3L1101.5 308.9L1102.0 305.8L1102.5 304.4L1103.0 306.5L1103.5 311.8L1104.0 317.6L1104.5 320.6L1105.0 319.1L1105.5 313.9L1106.0 307.3L1106.5 302.3L1107.0 301.4L1107.5 305.1L1108.0 311.4L1108.5 316.4L1109.0 317.7L1109.5 316.1L1110.0 313.9L1110.5 312.2L1111.0 310.9L1111.5 309.6L1112.0 309.0L1112.5 309.7L1113.0 311.9L1113.5 314.7L1114.0 316.1L1114.5 314.5L1115.0 311.1L1115.5 309.6L1116.0 312.8L1116.5 318.5L1117.0 321.0L1117.5 317.5L1118.0 310.3L1118.5 304.5L1119.0 303.1L1119.5 305.8L1120.0 310.5L1120.5 315.2L1121.0 318.6L1121.5 319.7L1122.0 317.8L1122.5 313.1L1123.0 307.8L1123.5 305.1L1124.0 306.8L1124.5 310.3L1125.0 312.0L1125.5 310.6L1126.0 308.5L1126.5 307.6L1127.0 307.6L1127.5 308.0L1128.0 309.6L1128.5 312.8L1129.0 314.8L1129.5 312.6L1130.0 307.4L1130.5 304.1L1131.0 305.9L1131.5 310.3L1132.0 311.6L1132.5 308.9L1133.0 306.7L1133.5 309.7L1134.0 316.1L1134.5 319.5L1135.0 316.7L1135.5 311.5L1136.0 309.7L1136.5 312.5L1137.0 315.5L1137.5 314.8L1138.0 311.0L1138.5 308.1L1139.0 308.8L1139.5 312.2L1140.0 315.1L1140.5 314.9L1141.0 311.4L1141.5 307.3L1142.0 306.2L1142.5 309.2L1143.0 313.7L1143.5 315.2L1144.0 312.6L1144.5 308.8L1145.0 307.7L1145.5 310.8L1146.0 315.9L1146.5 319.6L1147.0 319.8L1147.5 316.4L1148.0 310.2L1148.5 304.2L1149.0 302.5L1149.5 306.7L1150.0 313.6L1150.5 317.0L1151.0 314.6L1151.5 309.9L1152.0 308.5L1152.5 311.2L1153.0 314.5L1153.5 314.8L1154.0 312.1L1154.5 309.4L1155.0 309.3L1155.5 311.8L1156.0 314.8L1156.5 315.9L1157.0 313.8L1157.5 309.7L1158.0 306.4L1158.5 306.1L1159.0 308.8L1159.5 312.3L1160.0 313.1L1160.5 310.3L1161.0 306.3L1161.5 305.5L1162.0 309.3L1162.5 314.9L1163.0 318.4L1163.5 318.2L1164.0 315.7L1164.5 312.9L1165.0 310.5L1165.5 309.5L1166.0 311.7L1166.5 316.8L1167.0 321.4L1167.5 321.3L1168.0 316.2L1168.5 310.3L1169.0 308.2L1169.5 310.4L1170.0 314.1L1170.5 316.6L1171.0 316.7L1171.5 314.1L1172.0 309.9L1172.5 306.9L1173.0 307.0L1173.5 309.2L1174.0 310.6L1174.5 310.5L1175.0 310.7L1175.5 312.2L1176.0 313.6L1176.5 313.5L1177.0 312.3L1177.5 311.6L1178.0 311.7L1178.5 311.6L1179.0 310.9L1179.5 310.2L1180.0 310.4L1180.5 311.7L1181.0 313.6L1181.5 314.4L1182.0 312.7L1182.5 308.7L1183.0 305.1L1183.5 304.7L1184.0 307.7L1184.5 311.3L1185.0 313.1L1185.5 313.4L1186.0 313.8L1186.5 314.8L1187.0 314.9L1187.5 313.1L1188.0 310.3L1188.5 309.0L1189.0 310.5L1189.5 313.3L1190.0 314.4L1190.5 312.7L1191.0 310.7L1191.5 310.9L1192.0 312.6L1192.5 312.8L1193.0 310.4L1193.5 308.1L1194.0 308.7L1194.5 311.9L1195.0 314.0L1195.5 313.0L1196.0 310.3L1196.5 309.0L1197.0 310.2L1197.5 312.2L1198.0 312.7L1198.5 311.2L1199.0 309.8L1199.5 311.0L1200.0 314.8L1200.5 318.6L1201.0 318.7L1201.5 314.5L1202.0 309.1L1202.5 306.9L1203.0 309.4L1203.5 313.8L1204.0 316.7L1204.5 316.5L1205.0 313.6L1205.5 309.4L1206.0 305.6L1206.5 304.3L1207.0 306.0L1207.5 309.6L1208.0 312.8L1208.5 314.3L1209.0 314.0L1209.5 312.7L1210.0 311.6L1210.5 311.6L1211.0 311.9L1211.5 310.9L1212.0 308.6L1212.5 307.3L1213.0 309.0L1213.5 313.0L1214.0 315.7L1214.5 314.8L1215.0 311.0L1215.5 307.2L1216.0 305.8L1216.5 307.4L1217.0 311.2L1217.5 315.3L1218.0 317.8L1218.5 317.6L1219.0 314.8L1219.5 311.0L1220.0 308.2L1220.5 307.3L1221.0 307.9L1221.5 309.5L1222.0 311.3L1222.5 312.7L1223.0 312.7L1223.5 311.0L1224.0 309.3L1224.5 309.2L1225.0 310.8L1225.5 312.3L1226.0 312.9L1226.5 313.5L1227.0 314.9L1227.5 315.8L1228.0 314.5L1228.5 311.9L1229.0 310.6L1229.5 311.4L1230.0 312.3" stroke="#7e7e7e" stroke-width="1.1" fill="none" stroke-linejoin="bevel"/>
<g shape-rendering="crispEdges"><rect x="152" y="167" width="36" height="296" fill="#000" fill-opacity=".373"/><rect x="188" y="167" width="230" height="296" fill="#000" fill-opacity=".25"/><rect x="1210" y="167" width="216" height="296" fill="#000" fill-opacity=".373"/><path d="M460.5 167V463" stroke="#0000c0" stroke-width="1"/><path d="M464.5 167V463" stroke="#b40000" stroke-width="1"/><path d="M663.5 167V463" stroke="#0000c0" stroke-width="1"/><path d="M686.5 167V463" stroke="#00a000" stroke-width="1"/><path d="M694.5 167V463" stroke="#000" stroke-width="1"/></g><text transform="translate(462.2 460.8) scale(.84 1)" style="font-size:15.200px" fill="#0000c0">P</text><text transform="translate(665.2 460.8) scale(.84 1)" style="font-size:15.200px" fill="#0000c0">S</text><g shape-rendering="crispEdges"><rect x="418" y="453" width="792" height="10" fill="rgb(0,100,0)" fill-opacity=".44"/><rect x="1210" y="453" width="22" height="10" fill="#000" fill-opacity=".22"/><rect x="152.500" y="167.500" width="14" height="23" fill="#a8a8a8" stroke="#000"/><path d="M145.500 167V463" stroke="#000" stroke-width="1"/><path d="M140 456.5H145" stroke="#000"/><path d="M140 448.5H145" stroke="#000"/><path d="M135 439.5H145" stroke="#000"/><path d="M140 431.5H145" stroke="#000"/><path d="M140 422.5H145" stroke="#000"/><path d="M140 414.5H145" stroke="#000"/><path d="M140 405.5H145" stroke="#000"/><path d="M135 397.5H145" stroke="#000"/><path d="M140 388.5H145" stroke="#000"/><path d="M140 380.5H145" stroke="#000"/><path d="M140 371.5H145" stroke="#000"/><path d="M140 363.5H145" stroke="#000"/><path d="M135 354.5H145" stroke="#000"/><path d="M140 346.5H145" stroke="#000"/><path d="M140 337.5H145" stroke="#000"/><path d="M140 329.5H145" stroke="#000"/><path d="M140 320.5H145" stroke="#000"/><path d="M135 312.5H145" stroke="#000"/><path d="M140 303.5H145" stroke="#000"/><path d="M140 295.5H145" stroke="#000"/><path d="M140 286.5H145" stroke="#000"/><path d="M140 278.5H145" stroke="#000"/><path d="M135 269.5H145" stroke="#000"/><path d="M140 261.5H145" stroke="#000"/><path d="M140 252.5H145" stroke="#000"/><path d="M140 244.5H145" stroke="#000"/><path d="M140 235.5H145" stroke="#000"/><path d="M135 227.5H145" stroke="#000"/><path d="M140 218.5H145" stroke="#000"/><path d="M140 210.5H145" stroke="#000"/><path d="M140 201.5H145" stroke="#000"/><path d="M140 193.5H145" stroke="#000"/><path d="M135 184.5H145" stroke="#000"/><path d="M140 176.5H145" stroke="#000"/><path d="M140 167.5H145" stroke="#000"/><path d="M152 469.500H1426" stroke="#000" stroke-width="1"/><path d="M172.5 470V475" stroke="#000"/><path d="M200.5 470V475" stroke="#000"/><path d="M228.5 470V480" stroke="#000"/><path d="M255.5 470V475" stroke="#000"/><path d="M283.5 470V475" stroke="#000"/><path d="M310.5 470V475" stroke="#000"/><path d="M338.5 470V475" stroke="#000"/><path d="M366.5 470V480" stroke="#000"/><path d="M393.5 470V475" stroke="#000"/><path d="M421.5 470V475" stroke="#000"/><path d="M449.5 470V475" stroke="#000"/><path d="M476.5 470V475" stroke="#000"/><path d="M504.5 470V480" stroke="#000"/><path d="M531.5 470V475" stroke="#000"/><path d="M559.5 470V475" stroke="#000"/><path d="M587.5 470V475" stroke="#000"/><path d="M614.5 470V475" stroke="#000"/><path d="M642.5 470V480" stroke="#000"/><path d="M670.5 470V475" stroke="#000"/><path d="M697.5 470V475" stroke="#000"/><path d="M725.5 470V475" stroke="#000"/><path d="M752.5 470V475" stroke="#000"/><path d="M780.5 470V480" stroke="#000"/><path d="M808.5 470V475" stroke="#000"/><path d="M835.5 470V475" stroke="#000"/><path d="M863.5 470V475" stroke="#000"/><path d="M891.5 470V475" stroke="#000"/><path d="M918.5 470V480" stroke="#000"/><path d="M946.5 470V475" stroke="#000"/><path d="M973.5 470V475" stroke="#000"/><path d="M1001.5 470V475" stroke="#000"/><path d="M1029.5 470V475" stroke="#000"/><path d="M1056.5 470V480" stroke="#000"/><path d="M1084.5 470V475" stroke="#000"/><path d="M1111.5 470V475" stroke="#000"/><path d="M1139.5 470V475" stroke="#000"/><path d="M1167.5 470V475" stroke="#000"/><path d="M1194.5 470V480" stroke="#000"/><path d="M1222.5 470V475" stroke="#000"/><path d="M1250.5 470V475" stroke="#000"/><path d="M1277.5 470V475" stroke="#000"/><path d="M1305.5 470V475" stroke="#000"/><path d="M1332.5 470V480" stroke="#000"/><path d="M1360.5 470V475" stroke="#000"/><path d="M1388.5 470V475" stroke="#000"/><path d="M1415.5 470V475" stroke="#000"/></g>
<text x="155" y="183.500" style="font-weight:bold;font-size:14px" fill="#000">Z</text><path d="M188 469.600l7.300 14.600h-14.600z" fill="#000"/><path d="M418 469.600l7.300 14.600h-14.600z" fill="#000"/><path d="M1210 469.600l7.300 14.600h-14.600z" fill="#000"/><text x="130" y="444.8" text-anchor="end" fill="#232323" >-3.0 M</text><text x="130" y="402.3" text-anchor="end" fill="#232323" >-2.0 M</text><text x="130" y="359.8" text-anchor="end" fill="#232323" >-1.0 M</text><text x="130" y="317.3" text-anchor="end" fill="#232323" >0.0</text><text x="130" y="274.8" text-anchor="end" fill="#232323" >1.0 M</text><text x="130" y="232.3" text-anchor="end" fill="#232323" >2.0 M</text><text x="130" y="189.8" text-anchor="end" fill="#232323" >3.0 M</text><text x="228" y="497.6" text-anchor="middle" fill="#232323" >16:23:45</text><text x="366" y="497.6" text-anchor="middle" fill="#232323" >16:24:00</text><text x="504" y="497.6" text-anchor="middle" fill="#232323" >16:24:15</text><text x="642" y="497.6" text-anchor="middle" fill="#232323" >16:24:30</text><text x="780" y="497.6" text-anchor="middle" fill="#232323" >16:24:45</text><text x="918" y="497.6" text-anchor="middle" fill="#232323" >16:25:00</text><text x="1056" y="497.6" text-anchor="middle" fill="#232323" >16:25:15</text><text x="1194" y="497.6" text-anchor="middle" fill="#232323" >16:25:30</text><text x="1332" y="497.6" text-anchor="middle" fill="#232323" >16:25:45</text><text x="227.3" y="520.6" text-anchor="middle" fill="#232323" style="font-size:15px">2025-11-23</text><text x="14" y="156.8" text-anchor="start" fill="#111" style="font-weight:bold;font-size:14.500px">PATCX</text><text x="69" y="156.8" text-anchor="start" fill="#232323" style="font-size:15px">CX</text><text x="93.5" y="156.8" text-anchor="start" fill="#232323" style="font-size:15px;word-spacing:-.5px">HHZ, distance: 1.4°, azimuth: 282.8°</text><text x="156.3" y="443.8" text-anchor="start" fill="#232323" >amax: 3.5 M</text><text x="156.3" y="458.9" text-anchor="start" fill="#232323" style="letter-spacing:.2px">mean: -93.8</text><text x="1422" y="459.1" text-anchor="end" fill="#232323" >100 sps</text><text x="688.5" y="182.8" text-anchor="start" fill="#14a014" style="letter-spacing:-.25px">MLv: 4.17</text><text x="696.5" y="182.8" text-anchor="start" fill="#111" style="letter-spacing:-.25px">MLv: 4.32</text><rect x="27.500" y="486.500" width="17" height="17" rx="3" fill="#18a010" stroke="#000"/><path d="M32 508.500l4-4.500h-8z" transform="translate(4 0)" fill="#000"/><path d="M31 495l3.500 3.500l6.500-6.500" stroke="#fff" stroke-width="1.700" fill="none"/><rect x="71.500" y="486.500" width="17" height="17" rx="3" fill="#f04438" stroke="#000"/><path d="M80 508.500l4-4.500h-8z" fill="#000"/><path d="M75.500 490.500l9 9M84.500 490.500l-9 9" stroke="#fff" stroke-width="1.700" fill="none"/><rect x="115.500" y="486.500" width="17" height="17" rx="3" fill="#fff" stroke="#000"/><path d="M124 508.500l4-4.500h-8z" fill="#000"/><path d="M120.300 493a4.300 4.300 0 1 0 3.700-2.300h-3" stroke="#000" stroke-width="1.500" fill="none"/><path d="M119.500 490.500l3.200-2.700v5.400z" fill="#000"/>
<defs><clipPath id="rc"><rect x="154" y="545" width="1249" height="265"/></clipPath></defs>
<g clip-path="url(#rc)"><g shape-rendering="crispEdges"><rect x="154" y="545" width="1249" height="37" fill="#fff"/><path d="M190.5 545V582" stroke="#000" stroke-opacity=".15" stroke-dasharray="4 3"/><path d="M328.5 545V582" stroke="#000" stroke-opacity=".15" stroke-dasharray="4 3"/><path d="M466.5 545V582" stroke="#000" stroke-opacity=".15" stroke-dasharray="4 3"/><path d="M604.5 545V582" stroke="#000" stroke-opacity=".15" stroke-dasharray="4 3"/><path d="M742.5 545V582" stroke="#000" stroke-opacity=".15" stroke-dasharray="4 3"/><path d="M880.5 545V582" stroke="#000" stroke-opacity=".15" stroke-dasharray="4 3"/><path d="M1018.5 545V582" stroke="#000" stroke-opacity=".15" stroke-dasharray="4 3"/><path d="M1156.5 545V582" stroke="#000" stroke-opacity=".15" stroke-dasharray="4 3"/><path d="M1294.5 545V582" stroke="#000" stroke-opacity=".15" stroke-dasharray="4 3"/><path d="M154 561.5H1403" stroke="#aaaacc" stroke-opacity=".3"/></g><path d="M154.0 561.3L154.5 561.5L155.0 561.5L155.5 561.2L156.0 561.0L156.5 561.2L157.0 561.4L157.5 561.5L158.0 561.4L158.5 561.2L159.0 561.1L159.5 561.2L160.0 561.3L160.5 561.4L161.0 561.4L161.5 561.2L162.0 561.0L162.5 561.2L163.0 561.5L163.5 561.5L164.0 561.4L164.5 561.2L165.0 561.2L165.5 561.3L166.0 561.4L166.5 561.4L167.0 561.2L167.5 561.0L168.0 561.1L168.5 561.4L169.0 561.6L169.5 561.5L170.0 561.4L170.5 561.2L171.0 561.1L171.5 561.1L172.0 561.3L172.5 561.5L173.0 561.4L173.5 561.2L174.0 561.2L174.5 561.4L175.0 561.4L175.5 561.3L176.0 561.2L176.5 561.3L177.0 561.4L177.5 561.3L178.0 561.2L178.5 561.2L179.0 561.3L179.5 561.3L180.0 561.4L180.5 561.4L181.0 561.4L181.5 561.3L182.0 561.2L182.5 561.2L183.0 561.4L183.5 561.6L184.0 561.3L184.5 561.1L185.0 561.2L185.5 561.4L186.0 561.3L186.5 561.2L187.0 561.3L187.5 561.4L188.0 561.2L188.5 561.2L189.0 561.4L189.5 561.4L190.0 561.3L190.5 561.1L191.0 561.2L191.5 561.4L192.0 561.4L192.5 561.3L193.0 561.3L193.5 561.5L194.0 561.5L194.5 561.1L195.0 560.9L195.5 561.2L196.0 561.6L196.5 561.4L197.0 561.2L197.5 561.2L198.0 561.4L198.5 561.3L199.0 561.1L199.5 561.2L200.0 561.3L200.5 561.4L201.0 561.4L201.5 561.4L202.0 561.3L202.5 561.2L203.0 561.2L203.5 561.3L204.0 561.3L204.5 561.4L205.0 561.4L205.5 561.2L206.0 561.1L206.5 561.3L207.0 561.5L207.5 561.4L208.0 561.3L208.5 561.3L209.0 561.3L209.5 561.4L210.0 561.4L210.5 561.3L211.0 561.1L211.5 561.2L212.0 561.4L212.5 561.5L213.0 561.4L213.5 561.2L214.0 561.1L214.5 561.2L215.0 561.4L215.5 561.4L216.0 561.5L216.5 561.3L217.0 561.1L217.5 561.2L218.0 561.4L218.5 561.5L219.0 561.4L219.5 561.3L220.0 561.2L220.5 561.3L221.0 561.2L221.5 561.1L222.0 561.3L222.5 561.6L223.0 561.5L223.5 561.2L224.0 561.1L224.5 561.2L225.0 561.3L225.5 561.3L226.0 561.3L226.5 561.3L227.0 561.4L227.5 561.4L228.0 561.3L228.5 561.3L229.0 561.3L229.5 561.4L230.0 561.3L230.5 561.2L231.0 561.1L231.5 561.2L232.0 561.4L232.5 561.5L233.0 561.3L233.5 561.1L234.0 561.1L234.5 561.4L235.0 561.6L235.5 561.4L236.0 561.2L236.5 561.2L237.0 561.3L237.5 561.4L238.0 561.3L238.5 561.2L239.0 561.3L239.5 561.3L240.0 561.3L240.5 561.3L241.0 561.3L241.5 561.3L242.0 561.4L242.5 561.5L243.0 561.3L243.5 561.0L244.0 561.1L244.5 561.5L245.0 561.6L245.5 561.4L246.0 561.2L246.5 561.1L247.0 561.2L247.5 561.3L248.0 561.4L248.5 561.5L249.0 561.4L249.5 561.2L250.0 561.1L250.5 561.3L251.0 561.3L251.5 561.3L252.0 561.4L252.5 561.4L253.0 561.1L253.5 561.0L254.0 561.3L254.5 561.5L255.0 561.5L255.5 561.3L256.0 561.2L256.5 561.2L257.0 561.3L257.5 561.4L258.0 561.4L258.5 561.3L259.0 561.2L259.5 561.3L260.0 561.3L260.5 561.2L261.0 561.2L261.5 561.2L262.0 561.3L262.5 561.5L263.0 561.5L263.5 561.4L264.0 561.2L264.5 561.2L265.0 561.3L265.5 561.4L266.0 561.3L266.5 561.1L267.0 561.1L267.5 561.4L268.0 561.6L268.5 561.4L269.0 561.1L269.5 561.2L270.0 561.4L270.5 561.4L271.0 561.2L271.5 561.2L272.0 561.3L272.5 561.4L273.0 561.3L273.5 561.1L274.0 561.2L274.5 561.4L275.0 561.4L275.5 561.4L276.0 561.4L276.5 561.2L277.0 561.1L277.5 561.3L278.0 561.5L278.5 561.4L279.0 561.2L279.5 561.3L280.0 561.4L280.5 561.2L281.0 561.1L281.5 561.2L282.0 561.4L282.5 561.5L283.0 561.5L283.5 561.2L284.0 561.1L284.5 561.3L285.0 561.4L285.5 561.2L286.0 561.1L286.5 561.3L287.0 561.4L287.5 561.4L288.0 561.3L288.5 561.2L289.0 561.2L289.5 561.3L290.0 561.4L290.5 561.3L291.0 561.3L291.5 561.3L292.0 561.3L292.5 561.2L293.0 561.2L293.5 561.4L294.0 561.5L294.5 561.3L295.0 561.1L295.5 561.1L296.0 561.3L296.5 561.4L297.0 561.4L297.5 561.4L298.0 561.3L298.5 561.3L299.0 561.2L299.5 561.1L300.0 561.2L300.5 561.4L301.0 561.3L301.5 561.3L302.0 561.5L302.5 561.5L303.0 561.2L303.5 561.0L304.0 561.1L304.5 561.4L305.0 561.4L305.5 561.3L306.0 561.2L306.5 561.4L307.0 561.6L307.5 561.3L308.0 560.9L308.5 561.0L309.0 561.4L309.5 561.5L310.0 561.4L310.5 561.2L311.0 561.2L311.5 561.4L312.0 561.4L312.5 561.3L313.0 561.3L313.5 561.3L314.0 561.3L314.5 561.2L315.0 561.2L315.5 561.2L316.0 561.2L316.5 561.4L317.0 561.4L317.5 561.3L318.0 561.3L318.5 561.4L319.0 561.2L319.5 561.1L320.0 561.3L320.5 561.5L321.0 561.4L321.5 561.3L322.0 561.3L322.5 561.2L323.0 561.2L323.5 561.3L324.0 561.4L324.5 561.3L325.0 561.3L325.5 561.4L326.0 561.4L326.5 561.2L327.0 561.1L327.5 561.4L328.0 561.6L328.5 561.4L329.0 561.1L329.5 561.1L330.0 561.4L330.5 561.6L331.0 561.4L331.5 561.1L332.0 561.1L332.5 561.2L333.0 561.2L333.5 561.4L334.0 561.5L334.5 561.3L335.0 561.2L335.5 561.4L336.0 561.4L336.5 561.2L337.0 561.2L337.5 561.3L338.0 561.2L338.5 561.1L339.0 561.3L339.5 561.5L340.0 561.5L340.5 561.2L341.0 561.1L341.5 561.5L342.0 561.5L342.5 561.1L343.0 561.2L343.5 561.6L344.0 561.5L344.5 561.1L345.0 561.2L345.5 561.5L346.0 561.4L346.5 561.1L347.0 561.1L347.5 561.4L348.0 561.5L348.5 561.5L349.0 561.3L349.5 561.1L350.0 561.1L350.5 561.3L351.0 561.5L351.5 561.5L352.0 561.3L352.5 561.2L353.0 561.1L353.5 561.2L354.0 561.2L354.5 561.4L355.0 561.5L355.5 561.4L356.0 561.2L356.5 561.2L357.0 561.3L357.5 561.4L358.0 561.4L358.5 561.2L359.0 561.2L359.5 561.4L360.0 561.4L360.5 561.2L361.0 561.2L361.5 561.3L362.0 561.4L362.5 561.3L363.0 561.3L363.5 561.4L364.0 561.5L364.5 561.4L365.0 561.2L365.5 561.1L366.0 561.1L366.5 561.2L367.0 561.4L367.5 561.6L368.0 561.4L368.5 561.1L369.0 561.1L369.5 561.2L370.0 561.2L370.5 561.4L371.0 561.6L371.5 561.4L372.0 561.1L372.5 561.0L373.0 561.3L373.5 561.6L374.0 561.5L374.5 561.3L375.0 561.2L375.5 561.1L376.0 561.1L376.5 561.4L377.0 561.6L377.5 561.5L378.0 561.1L378.5 561.1L379.0 561.3L379.5 561.2L380.0 561.2L380.5 561.4L381.0 561.5L381.5 561.4L382.0 561.3L382.5 561.3L383.0 561.3L383.5 561.2L384.0 561.1L384.5 561.3L385.0 561.4L385.5 561.4L386.0 561.3L386.5 561.3L387.0 561.3L387.5 561.3L388.0 561.2L388.5 561.2L389.0 561.4L389.5 561.4L390.0 561.3L390.5 561.2L391.0 561.3L391.5 561.4L392.0 561.4L392.5 561.4L393.0 561.2L393.5 561.1L394.0 561.1L394.5 561.3L395.0 561.4L395.5 561.4L396.0 561.5L396.5 561.5L397.0 561.2L397.5 561.0L398.0 561.1L398.5 561.3L399.0 561.4L399.5 561.4L400.0 561.3L400.5 561.2L401.0 561.2L401.5 561.2L402.0 561.3L402.5 561.6L403.0 561.6L403.5 561.3L404.0 561.1L404.5 561.1L405.0 561.3L405.5 561.4L406.0 561.2L406.5 561.2L407.0 561.4L407.5 561.5L408.0 561.3L408.5 561.2L409.0 561.3L409.5 561.4L410.0 561.3L410.5 561.2L411.0 561.3L411.5 561.2L412.0 561.2L412.5 561.3L413.0 561.4L413.5 561.3L414.0 561.2L414.5 561.4L415.0 561.4L415.5 561.2L416.0 561.2L416.5 561.4L417.0 561.4L417.5 561.2L418.0 561.2L418.5 561.4L419.0 561.5L419.5 561.3L420.0 561.2L420.5 561.2L421.0 561.3L421.5 561.3L422.0 561.2L422.5 561.3L423.0 561.4L423.5 561.3L424.0 561.2L424.5 561.1L425.0 561.3L425.5 561.6L426.0 561.6L426.5 561.3L427.0 561.1L427.5 561.2L428.0 561.3L428.5 561.3L429.0 561.3L429.5 561.3L430.0 561.3L430.5 561.2L431.0 561.2L431.5 561.3L432.0 561.3L432.5 561.2L433.0 561.4L433.5 561.5L434.0 561.3L434.5 561.2L435.0 561.3L435.5 561.3L436.0 561.2L436.5 561.3L437.0 561.3L437.5 561.3L438.0 561.5L438.5 561.5L439.0 561.2L439.5 561.0L440.0 561.3L440.5 561.6L441.0 561.5L441.5 561.3L442.0 561.2L442.5 561.2L443.0 561.2L443.5 561.1L444.0 561.3L444.5 561.5L445.0 561.4L445.5 561.2L446.0 561.1L446.5 561.3L447.0 561.5L447.5 561.4L448.0 561.3L448.5 561.2L449.0 561.3L449.5 561.3L450.0 561.2L450.5 561.2L451.0 561.3L451.5 561.3L452.0 561.2L452.5 561.2L453.0 561.5L453.5 561.6L454.0 561.3L454.5 561.1L455.0 561.1L455.5 561.2L456.0 561.4L456.5 561.5L457.0 561.4L457.5 561.1L458.0 561.1L458.5 561.4L459.0 561.5L459.5 561.5L460.0 561.4L460.5 561.2L461.0 561.1L461.5 561.2L462.0 561.3L462.5 561.3L463.0 561.4L463.5 561.4L464.0 561.2L464.5 561.1L465.0 561.3L465.5 561.6L466.0 561.4L466.5 561.1L467.0 561.2L467.5 562.4L468.0 563.0L468.5 560.1L469.0 558.2L469.5 561.3L470.0 562.9L470.5 560.0L471.0 556.9L471.5 559.1L472.0 564.6L472.5 566.1L473.0 562.2L473.5 559.7L474.0 560.9L474.5 561.6L475.0 561.4L475.5 562.6L476.0 562.9L476.5 561.0L477.0 560.1L477.5 560.4L478.0 559.6L478.5 558.9L479.0 560.4L479.5 563.2L480.0 564.5L480.5 563.5L481.0 561.5L481.5 560.2L482.0 559.9L482.5 560.0L483.0 560.0L483.5 560.2L484.0 561.0L484.5 561.8L485.0 562.4L485.5 562.5L486.0 560.9L486.5 558.7L487.0 559.8L487.5 564.0L488.0 565.6L488.5 563.1L489.0 560.2L489.5 558.5L490.0 559.1L490.5 562.7L491.0 564.7L491.5 561.6L492.0 557.7L492.5 558.6L493.0 562.9L493.5 564.6L494.0 562.0L494.5 559.3L495.0 559.6L495.5 561.0L496.0 561.6L496.5 561.6L497.0 561.6L497.5 561.6L498.0 562.0L498.5 562.3L499.0 561.9L499.5 560.4L500.0 558.4L500.5 558.6L501.0 561.9L501.5 564.7L502.0 563.5L502.5 560.8L503.0 560.6L503.5 561.8L504.0 561.6L504.5 560.9L505.0 560.9L505.5 560.9L506.0 561.3L506.5 562.3L507.0 562.0L507.5 560.0L508.0 559.6L508.5 562.3L509.0 563.9L509.5 562.2L510.0 560.7L510.5 560.7L511.0 560.8L511.5 561.0L512.0 562.0L512.5 561.9L513.0 560.4L513.5 559.9L514.0 561.2L514.5 562.2L515.0 562.3L515.5 562.3L516.0 561.7L516.5 560.7L517.0 560.4L517.5 560.5L518.0 561.3L518.5 562.6L519.0 562.2L519.5 559.8L520.0 559.3L520.5 561.6L521.0 562.9L521.5 562.4L522.0 562.0L522.5 561.8L523.0 560.7L523.5 559.2L524.0 558.9L524.5 561.3L525.0 564.5L525.5 563.7L526.0 559.6L526.5 558.5L527.0 561.6L527.5 563.3L528.0 561.8L528.5 560.2L529.0 559.7L529.5 560.4L530.0 562.4L530.5 563.4L531.0 562.0L531.5 560.1L532.0 559.6L532.5 560.8L533.0 562.6L533.5 563.0L534.0 561.0L534.5 559.4L535.0 560.8L535.5 563.1L536.0 563.1L536.5 561.0L537.0 559.6L537.5 560.7L538.0 562.3L538.5 561.9L539.0 560.6L539.5 560.6L540.0 561.5L540.5 561.9L541.0 561.6L541.5 561.5L542.0 561.2L542.5 559.8L543.0 559.2L543.5 561.4L544.0 564.2L544.5 563.8L545.0 560.7L545.5 559.5L546.0 560.9L546.5 561.4L547.0 560.9L547.5 561.0L548.0 561.4L548.5 561.9L549.0 562.3L549.5 561.5L550.0 560.7L550.5 561.3L551.0 560.7L551.5 558.9L552.0 559.8L552.5 562.6L553.0 563.0L553.5 561.0L554.0 560.8L554.5 562.5L555.0 562.9L555.5 561.2L556.0 560.0L556.5 561.2L557.0 562.8L557.5 561.9L558.0 560.0L558.5 560.6L559.0 562.6L559.5 562.5L560.0 560.8L560.5 559.6L561.0 559.9L561.5 561.1L562.0 562.3L562.5 561.8L563.0 560.5L563.5 560.8L564.0 562.3L564.5 563.0L565.0 562.4L565.5 560.9L566.0 559.3L566.5 559.3L567.0 560.9L567.5 562.3L568.0 563.2L568.5 563.0L569.0 560.7L569.5 559.3L570.0 561.2L570.5 562.8L571.0 561.1L571.5 559.5L572.0 560.8L572.5 562.9L573.0 562.5L573.5 560.6L574.0 560.1L574.5 560.7L575.0 561.8L575.5 563.0L576.0 562.4L576.5 560.3L577.0 559.7L577.5 561.2L578.0 562.1L578.5 561.9L579.0 562.0L579.5 562.2L580.0 561.9L580.5 561.1L581.0 560.0L581.5 560.3L582.0 562.3L582.5 562.9L583.0 561.2L583.5 559.8L584.0 559.9L584.5 560.8L585.0 562.3L585.5 563.6L586.0 563.0L586.5 560.1L587.0 557.9L587.5 559.3L588.0 562.4L588.5 562.9L589.0 562.3L589.5 562.9L590.0 561.9L590.5 558.9L591.0 558.4L591.5 561.0L592.0 562.5L592.5 562.8L593.0 563.2L593.5 562.7L594.0 560.6L594.5 558.4L595.0 557.9L595.5 560.3L596.0 564.7L596.5 565.4L597.0 561.8L597.5 559.1L598.0 558.9L598.5 560.0L599.0 562.8L599.5 564.4L600.0 561.7L600.5 558.9L601.0 560.4L601.5 562.4L602.0 561.4L602.5 560.7L603.0 562.2L603.5 562.3L604.0 560.2L604.5 559.4L605.0 561.1L605.5 562.4L606.0 561.5L606.5 560.4L607.0 560.9L607.5 561.8L608.0 562.6L608.5 562.7L609.0 561.4L609.5 559.6L610.0 559.9L610.5 561.8L611.0 562.6L611.5 562.2L612.0 561.9L612.5 561.6L613.0 561.4L613.5 561.5L614.0 561.0L614.5 560.3L615.0 560.1L615.5 560.3L616.0 561.4L616.5 563.3L617.0 563.7L617.5 561.4L618.0 558.6L618.5 558.6L619.0 561.3L619.5 562.9L620.0 562.6L620.5 562.9L621.0 562.4L621.5 559.2L622.0 557.8L622.5 560.5L623.0 562.7L623.5 562.3L624.0 562.5L624.5 563.2L625.0 561.2L625.5 558.6L626.0 559.0L626.5 561.4L627.0 563.4L627.5 563.3L628.0 560.1L628.5 557.4L629.0 561.4L629.5 566.8L630.0 565.9L630.5 562.2L631.0 559.9L631.5 559.6L632.0 559.8L632.5 559.3L633.0 561.0L633.5 564.8L634.0 563.3L634.5 555.9L635.0 554.1L635.5 562.8L636.0 568.8L636.5 562.7L637.0 555.5L637.5 560.8L638.0 570.0L638.5 567.7L639.0 561.0L639.5 559.8L640.0 556.7L640.5 552.9L641.0 556.7L641.5 563.7L642.0 567.0L642.5 565.3L643.0 557.6L643.5 551.6L644.0 560.8L644.5 573.1L645.0 564.0L645.5 547.5L646.0 553.4L646.5 568.2L647.0 564.6L647.5 555.0L648.0 561.0L648.5 572.6L649.0 572.3L649.5 560.6L650.0 550.5L650.5 553.2L651.0 561.0L651.5 562.6L652.0 562.5L652.5 563.4L653.0 562.7L653.5 563.9L654.0 565.9L654.5 562.1L655.0 556.9L655.5 556.8L656.0 558.8L656.5 559.0L657.0 558.8L657.5 562.7L658.0 567.7L658.5 562.6L659.0 550.8L659.5 553.4L660.0 570.2L660.5 574.7L661.0 561.0L661.5 550.0L662.0 550.8L662.5 557.3L663.0 566.4L663.5 573.0L664.0 567.3L664.5 553.8L665.0 550.1L665.5 559.9L666.0 567.2L666.5 563.0L667.0 559.5L667.5 566.9L668.0 571.1L668.5 560.6L669.0 551.9L669.5 556.8L670.0 563.0L670.5 563.1L671.0 561.7L671.5 561.9L672.0 563.3L672.5 562.6L673.0 559.5L673.5 558.9L674.0 561.7L674.5 563.3L675.0 562.1L675.5 559.7L676.0 558.6L676.5 560.9L677.0 563.3L677.5 563.3L678.0 564.1L678.5 564.7L679.0 561.7L679.5 556.7L680.0 554.6L680.5 558.1L681.0 564.7L681.5 567.2L682.0 563.1L682.5 559.3L683.0 560.4L683.5 561.9L684.0 561.0L684.5 562.0L685.0 563.5L685.5 559.7L686.0 556.4L686.5 561.0L687.0 566.2L687.5 565.7L688.0 562.1L688.5 558.4L689.0 556.9L689.5 558.7L690.0 561.8L690.5 563.7L691.0 563.7L691.5 562.2L692.0 559.7L692.5 558.0L693.0 559.6L693.5 562.7L694.0 563.2L694.5 561.5L695.0 561.7L695.5 564.9L696.0 564.5L696.5 559.2L697.0 557.8L697.5 560.9L698.0 561.1L698.5 560.5L699.0 562.0L699.5 561.9L700.0 561.5L700.5 561.9L701.0 558.8L701.5 557.2L702.0 563.1L702.5 566.6L703.0 561.6L703.5 558.1L704.0 562.6L704.5 567.3L705.0 563.8L705.5 556.2L706.0 556.4L706.5 563.2L707.0 565.0L707.5 561.7L708.0 560.1L708.5 559.7L709.0 558.9L709.5 561.0L710.0 565.4L710.5 565.4L711.0 559.4L711.5 555.8L712.0 560.1L712.5 563.9L713.0 560.6L713.5 559.1L714.0 564.3L714.5 565.3L715.0 559.6L715.5 557.7L716.0 560.3L716.5 561.4L717.0 563.0L717.5 564.5L718.0 562.3L718.5 560.5L719.0 560.6L719.5 558.2L720.0 555.2L720.5 558.2L721.0 565.1L721.5 566.7L722.0 560.8L722.5 558.2L723.0 564.2L723.5 567.8L724.0 562.1L724.5 555.7L725.0 556.8L725.5 562.1L726.0 564.9L726.5 563.1L727.0 559.9L727.5 559.0L728.0 561.0L728.5 563.0L729.0 562.7L729.5 560.8L730.0 559.3L730.5 559.0L731.0 561.5L731.5 563.9L732.0 561.6L732.5 557.7L733.0 559.0L733.5 564.2L734.0 565.3L734.5 561.2L735.0 557.6L735.5 558.8L736.0 564.3L736.5 567.8L737.0 564.5L737.5 559.0L738.0 557.9L738.5 559.1L739.0 559.8L739.5 560.9L740.0 562.4L740.5 562.4L741.0 562.0L741.5 562.1L742.0 560.9L742.5 558.9L743.0 559.8L743.5 563.7L744.0 565.2L744.5 561.8L745.0 557.5L745.5 557.7L746.0 561.1L746.5 562.5L747.0 561.2L747.5 561.7L748.0 565.1L748.5 565.0L749.0 560.1L749.5 557.5L750.0 559.6L750.5 562.2L751.0 562.6L751.5 561.0L752.0 559.8L752.5 561.2L753.0 563.2L753.5 562.9L754.0 560.7L754.5 559.4L755.0 560.7L755.5 562.5L756.0 561.8L756.5 559.7L757.0 559.6L757.5 561.3L758.0 562.2L758.5 562.6L759.0 562.9L759.5 562.2L760.0 560.3L760.5 559.5L761.0 561.0L761.5 562.9L762.0 562.0L762.5 559.5L763.0 560.0L763.5 563.1L764.0 563.2L764.5 561.1L765.0 562.5L765.5 564.1L766.0 560.6L766.5 557.1L767.0 559.0L767.5 562.4L768.0 562.5L768.5 561.8L769.0 562.3L769.5 561.8L770.0 560.7L770.5 561.2L771.0 561.8L771.5 561.2L772.0 561.0L772.5 561.6L773.0 561.3L773.5 560.7L774.0 561.4L774.5 561.6L775.0 560.5L775.5 560.2L776.0 561.1L776.5 561.8L777.0 562.9L777.5 564.3L778.0 563.5L778.5 560.7L779.0 559.8L779.5 561.6L780.0 561.5L780.5 559.2L781.0 559.8L781.5 563.0L782.0 563.1L782.5 559.8L783.0 558.4L783.5 560.7L784.0 562.9L784.5 562.9L785.0 562.1L785.5 561.1L786.0 560.4L786.5 560.3L787.0 561.1L787.5 561.6L788.0 561.2L788.5 561.3L789.0 562.3L789.5 562.4L790.0 561.0L790.5 560.3L791.0 560.7L791.5 560.5L792.0 559.7L792.5 559.7L793.0 561.2L793.5 563.0L794.0 562.9L794.5 561.5L795.0 560.7L795.5 561.0L796.0 561.5L796.5 561.1L797.0 560.9L797.5 562.2L798.0 563.0L798.5 561.9L799.0 560.6L799.5 559.9L800.0 560.2L800.5 561.5L801.0 562.5L801.5 562.1L802.0 561.6L802.5 562.1L803.0 561.7L803.5 560.1L804.0 559.6L804.5 561.0L805.0 562.9L805.5 563.1L806.0 561.6L806.5 560.7L807.0 561.0L807.5 561.5L808.0 561.7L808.5 561.8L809.0 560.5L809.5 558.6L810.0 559.3L810.5 561.9L811.0 563.1L811.5 562.2L812.0 560.9L812.5 560.7L813.0 561.5L813.5 562.1L814.0 561.4L814.5 560.5L815.0 560.7L815.5 561.5L816.0 562.4L816.5 562.6L817.0 561.6L817.5 560.2L818.0 560.3L818.5 561.5L819.0 561.7L819.5 560.3L820.0 559.4L820.5 560.4L821.0 561.8L821.5 562.1L822.0 561.6L822.5 560.6L823.0 560.1L823.5 561.2L824.0 562.4L824.5 561.5L825.0 560.4L825.5 561.3L826.0 563.1L826.5 563.2L827.0 562.0L827.5 561.2L828.0 560.4L828.5 559.4L829.0 559.5L829.5 561.0L830.0 562.3L830.5 561.7L831.0 560.7L831.5 561.3L832.0 562.1L832.5 561.5L833.0 560.9L833.5 561.0L834.0 560.7L834.5 560.4L835.0 561.2L835.5 562.1L836.0 562.2L836.5 561.7L837.0 561.1L837.5 561.6L838.0 562.5L838.5 562.3L839.0 561.3L839.5 561.4L840.0 561.9L840.5 561.4L841.0 561.2L841.5 562.0L842.0 561.5L842.5 559.8L843.0 559.8L843.5 561.7L844.0 562.4L844.5 561.1L845.0 560.4L845.5 561.5L846.0 562.0L846.5 560.9L847.0 560.6L847.5 562.0L848.0 563.1L848.5 563.1L849.0 563.0L849.5 562.7L850.0 561.6L850.5 559.7L851.0 558.4L851.5 558.7L852.0 560.3L852.5 561.0L853.0 560.3L853.5 560.3L854.0 562.1L854.5 563.9L855.0 563.7L855.5 562.2L856.0 560.8L856.5 560.4L857.0 560.9L857.5 561.0L858.0 560.8L858.5 561.5L859.0 561.8L859.5 560.9L860.0 560.4L860.5 561.0L861.0 561.4L861.5 561.3L862.0 561.5L862.5 562.3L863.0 563.0L863.5 562.8L864.0 561.6L864.5 560.3L865.0 560.0L865.5 560.7L866.0 561.8L866.5 562.1L867.0 561.7L867.5 561.9L868.0 562.0L868.5 561.3L869.0 560.4L869.5 560.3L870.0 560.8L870.5 561.0L871.0 560.8L871.5 560.9L872.0 561.5L872.5 561.8L873.0 561.6L873.5 561.8L874.0 562.3L874.5 561.9L875.0 560.4L875.5 559.5L876.0 559.7L876.5 560.0L877.0 560.6L877.5 561.8L878.0 563.0L878.5 563.7L879.0 563.7L879.5 563.1L880.0 561.8L880.5 559.9L881.0 559.1L881.5 560.2L882.0 561.6L882.5 561.9L883.0 561.6L883.5 561.8L884.0 562.3L884.5 562.2L885.0 561.2L885.5 560.4L886.0 560.1L886.5 560.3L887.0 560.7L887.5 561.4L888.0 561.9L888.5 561.9L889.0 561.3L889.5 560.6L890.0 560.2L890.5 560.6L891.0 561.2L891.5 561.7L892.0 561.8L892.5 561.7L893.0 561.8L893.5 562.1L894.0 562.1L894.5 561.1L895.0 560.3L895.5 560.5L896.0 560.6L896.5 560.7L897.0 561.2L897.5 561.6L898.0 561.4L898.5 561.2L899.0 561.4L899.5 561.5L900.0 561.3L900.5 561.3L901.0 561.4L901.5 561.1L902.0 560.6L902.5 560.6L903.0 561.4L903.5 562.5L904.0 562.8L904.5 562.4L905.0 561.6L905.5 560.8L906.0 560.4L906.5 561.0L907.0 561.9L907.5 562.1L908.0 561.9L908.5 561.6L909.0 560.8L909.5 560.0L910.0 560.2L910.5 561.0L911.0 561.9L911.5 562.3L912.0 561.5L912.5 560.2L913.0 559.7L913.5 560.4L914.0 561.3L914.5 561.9L915.0 562.3L915.5 562.1L916.0 561.4L916.5 561.0L917.0 561.1L917.5 561.6L918.0 561.9L918.5 562.0L919.0 561.8L919.5 561.2L920.0 560.2L920.5 559.7L921.0 560.5L921.5 561.9L922.0 562.5L922.5 562.2L923.0 561.4L923.5 560.8L924.0 560.8L924.5 560.9L925.0 560.8L925.5 561.3L926.0 562.3L926.5 562.3L927.0 561.3L927.5 560.1L928.0 559.8L928.5 560.2L929.0 560.8L929.5 561.4L930.0 562.1L930.5 562.7L931.0 562.8L931.5 562.2L932.0 561.2L932.5 560.5L933.0 560.4L933.5 560.7L934.0 561.4L934.5 562.2L935.0 562.3L935.5 561.6L936.0 561.1L936.5 561.0L937.0 560.9L937.5 560.4L938.0 560.1L938.5 560.7L939.0 562.0L939.5 562.8L940.0 562.1L940.5 560.7L941.0 560.1L941.5 560.4L942.0 561.0L942.5 561.6L943.0 562.3L943.5 562.5L944.0 562.3L944.5 562.4L945.0 562.3L945.5 561.7L946.0 561.1L946.5 560.8L947.0 560.6L947.5 560.3L948.0 560.2L948.5 560.4L949.0 560.8L949.5 561.3L950.0 561.5L950.5 561.4L951.0 561.5L951.5 561.8L952.0 561.7L952.5 561.0L953.0 560.5L953.5 561.0L954.0 561.9L954.5 561.9L955.0 561.2L955.5 560.4L956.0 560.1L956.5 560.7L957.0 561.8L957.5 562.2L958.0 561.8L958.5 561.2L959.0 560.9L959.5 561.3L960.0 562.2L960.5 562.8L961.0 562.6L961.5 562.0L962.0 561.3L962.5 560.2L963.0 559.7L963.5 560.4L964.0 561.6L964.5 562.4L965.0 562.5L965.5 562.2L966.0 561.3L966.5 560.3L967.0 560.2L967.5 560.8L968.0 560.9L968.5 560.9L969.0 561.6L969.5 562.2L970.0 561.7L970.5 560.6L971.0 560.4L971.5 561.3L972.0 562.1L972.5 562.3L973.0 562.1L973.5 562.1L974.0 562.2L974.5 561.8L975.0 560.8L975.5 560.2L976.0 560.4L976.5 561.1L977.0 561.6L977.5 561.7L978.0 561.5L978.5 561.0L979.0 560.5L979.5 560.4L980.0 561.2L980.5 562.1L981.0 562.6L981.5 562.4L982.0 562.0L982.5 561.4L983.0 560.7L983.5 560.4L984.0 560.5L984.5 560.7L985.0 560.9L985.5 561.3L986.0 562.0L986.5 562.3L987.0 561.9L987.5 561.0L988.0 560.3L988.5 560.1L989.0 560.3L989.5 560.8L990.0 561.7L990.5 562.4L991.0 562.2L991.5 561.4L992.0 560.9L992.5 561.0L993.0 561.1L993.5 561.1L994.0 561.3L994.5 561.4L995.0 560.9L995.5 560.1L996.0 560.1L996.5 561.2L997.0 562.6L997.5 562.8L998.0 561.7L998.5 560.8L999.0 560.6L999.5 560.6L1000.0 560.6" stroke="#7a7a7a" stroke-width="1" fill="none" stroke-linejoin="round"/><g shape-rendering="crispEdges"><rect x="154" y="545" width="37" height="37" fill="#000" fill-opacity=".373"/><rect x="191" y="545" width="229" height="37" fill="#000" fill-opacity=".25"/><rect x="990" y="545" width="413" height="37" fill="#000" fill-opacity=".373"/><path d="M1000 561.5H1403" stroke="#8c8cb4" stroke-opacity=".55"/><path d="M466.5 545V582" stroke="#b40000" stroke-width="1"/><path d="M478.5 545V582" stroke="#0000c0" stroke-width="1"/><path d="M634.5 545V582" stroke="#000" stroke-width="1"/><path d="M645.5 545V582" stroke="#0000c0" stroke-width="1"/><path d="M656.5 545V582" stroke="#00a000" stroke-width="1"/></g><text transform="translate(480.2 579.8) scale(.84 1)" style="font-size:15.200px" fill="#0000c0">P</text><text transform="translate(647.2 579.8) scale(.84 1)" style="font-size:15.200px" fill="#0000c0">S</text><g shape-rendering="crispEdges"><rect x="420" y="572" width="570" height="10" fill="rgb(0,100,0)" fill-opacity="0.44"/><rect x="990" y="572" width="19" height="10" fill="#000" fill-opacity=".22"/></g><text x="158" y="562.1" text-anchor="start" fill="#232323" >amax: 4.2 M</text><text x="158" y="577.4" text-anchor="start" fill="#232323" >mean: -12.0</text><text x="636.5" y="560.8" text-anchor="start" fill="#111" style="letter-spacing:-.25px">MLv: 4.03</text><text x="658.5" y="560.8" text-anchor="start" fill="#14a014" style="letter-spacing:-.25px">MLv: 3.93</text><g shape-rendering="crispEdges"><rect x="154" y="584" width="1249" height="37" fill="#f6f6f6"/><path d="M190.5 584V621" stroke="#000" stroke-opacity=".15" stroke-dasharray="4 3"/><path d="M328.5 584V621" stroke="#000" stroke-opacity=".15" stroke-dasharray="4 3"/><path d="M466.5 584V621" stroke="#000" stroke-opacity=".15" stroke-dasharray="4 3"/><path d="M604.5 584V621" stroke="#000" stroke-opacity=".15" stroke-dasharray="4 3"/><path d="M742.5 584V621" stroke="#000" stroke-opacity=".15" stroke-dasharray="4 3"/><path d="M880.5 584V621" stroke="#000" stroke-opacity=".15" stroke-dasharray="4 3"/><path d="M1018.5 584V621" stroke="#000" stroke-opacity=".15" stroke-dasharray="4 3"/><path d="M1156.5 584V621" stroke="#000" stroke-opacity=".15" stroke-dasharray="4 3"/><path d="M1294.5 584V621" stroke="#000" stroke-opacity=".15" stroke-dasharray="4 3"/><path d="M154 604.5H1403" stroke="#aaaacc" stroke-opacity=".3"/></g><path d="M154.0 604.1L154.5 604.3L155.0 604.5L155.5 604.4L156.0 604.2L156.5 604.1L157.0 604.1L157.5 604.2L158.0 604.4L158.5 604.5L159.0 604.4L159.5 604.1L160.0 604.0L160.5 604.3L161.0 604.5L161.5 604.4L162.0 604.3L162.5 604.4L163.0 604.4L163.5 604.2L164.0 604.0L164.5 604.1L165.0 604.4L165.5 604.4L166.0 604.3L166.5 604.3L167.0 604.2L167.5 604.2L168.0 604.4L168.5 604.5L169.0 604.3L169.5 604.2L170.0 604.3L170.5 604.4L171.0 604.4L171.5 604.4L172.0 604.3L172.5 604.1L173.0 604.1L173.5 604.4L174.0 604.5L174.5 604.3L175.0 604.2L175.5 604.3L176.0 604.4L176.5 604.2L177.0 604.1L177.5 604.2L178.0 604.4L178.5 604.4L179.0 604.3L179.5 604.2L180.0 604.3L180.5 604.4L181.0 604.3L181.5 604.2L182.0 604.2L182.5 604.4L183.0 604.4L183.5 604.4L184.0 604.3L184.5 604.3L185.0 604.2L185.5 604.3L186.0 604.5L186.5 604.5L187.0 604.3L187.5 604.2L188.0 604.3L188.5 604.2L189.0 604.2L189.5 604.2L190.0 604.3L190.5 604.3L191.0 604.3L191.5 604.4L192.0 604.5L192.5 604.3L193.0 604.1L193.5 604.2L194.0 604.4L194.5 604.4L195.0 604.4L195.5 604.4L196.0 604.2L196.5 604.1L197.0 604.1L197.5 604.2L198.0 604.3L198.5 604.4L199.0 604.4L199.5 604.3L200.0 604.2L200.5 604.2L201.0 604.2L201.5 604.2L202.0 604.4L202.5 604.6L203.0 604.6L203.5 604.2L204.0 604.0L204.5 604.1L205.0 604.4L205.5 604.5L206.0 604.3L206.5 604.2L207.0 604.3L207.5 604.4L208.0 604.2L208.5 604.0L209.0 604.3L209.5 604.7L210.0 604.7L210.5 604.1L211.0 603.9L211.5 604.3L212.0 604.5L212.5 604.4L213.0 604.2L213.5 604.2L214.0 604.3L214.5 604.4L215.0 604.4L215.5 604.3L216.0 604.2L216.5 604.2L217.0 604.2L217.5 604.2L218.0 604.5L218.5 604.5L219.0 604.3L219.5 604.2L220.0 604.2L220.5 604.3L221.0 604.4L221.5 604.4L222.0 604.3L222.5 604.3L223.0 604.3L223.5 604.1L224.0 604.1L224.5 604.3L225.0 604.4L225.5 604.3L226.0 604.3L226.5 604.3L227.0 604.4L227.5 604.4L228.0 604.2L228.5 604.3L229.0 604.5L229.5 604.5L230.0 604.2L230.5 604.0L231.0 604.1L231.5 604.4L232.0 604.4L232.5 604.3L233.0 604.3L233.5 604.4L234.0 604.4L234.5 604.3L235.0 604.3L235.5 604.4L236.0 604.3L236.5 604.0L237.0 604.1L237.5 604.4L238.0 604.6L238.5 604.5L239.0 604.3L239.5 604.2L240.0 604.1L240.5 604.1L241.0 604.2L241.5 604.4L242.0 604.5L242.5 604.5L243.0 604.2L243.5 604.1L244.0 604.4L244.5 604.7L245.0 604.4L245.5 604.0L246.0 604.0L246.5 604.3L247.0 604.4L247.5 604.3L248.0 604.2L248.5 604.4L249.0 604.4L249.5 604.3L250.0 604.1L250.5 604.1L251.0 604.4L251.5 604.5L252.0 604.4L252.5 604.1L253.0 604.2L253.5 604.5L254.0 604.5L254.5 604.3L255.0 604.1L255.5 604.2L256.0 604.3L256.5 604.3L257.0 604.4L257.5 604.4L258.0 604.2L258.5 604.1L259.0 604.3L259.5 604.5L260.0 604.3L260.5 604.1L261.0 604.2L261.5 604.4L262.0 604.4L262.5 604.4L263.0 604.4L263.5 604.3L264.0 604.3L264.5 604.4L265.0 604.2L265.5 604.0L266.0 604.1L266.5 604.4L267.0 604.6L267.5 604.4L268.0 604.2L268.5 604.1L269.0 604.2L269.5 604.4L270.0 604.5L270.5 604.4L271.0 604.2L271.5 604.2L272.0 604.4L272.5 604.4L273.0 604.2L273.5 604.1L274.0 604.2L274.5 604.4L275.0 604.5L275.5 604.5L276.0 604.4L276.5 604.3L277.0 604.2L277.5 604.2L278.0 604.3L278.5 604.3L279.0 604.3L279.5 604.3L280.0 604.3L280.5 604.3L281.0 604.3L281.5 604.4L282.0 604.5L282.5 604.3L283.0 604.1L283.5 604.2L284.0 604.4L284.5 604.4L285.0 604.3L285.5 604.2L286.0 604.2L286.5 604.3L287.0 604.4L287.5 604.4L288.0 604.4L288.5 604.3L289.0 604.3L289.5 604.2L290.0 604.3L290.5 604.3L291.0 604.1L291.5 604.1L292.0 604.4L292.5 604.5L293.0 604.3L293.5 604.2L294.0 604.3L294.5 604.3L295.0 604.2L295.5 604.3L296.0 604.3L296.5 604.3L297.0 604.2L297.5 604.2L298.0 604.2L298.5 604.3L299.0 604.4L299.5 604.4L300.0 604.2L300.5 604.1L301.0 604.3L301.5 604.5L302.0 604.3L302.5 604.1L303.0 604.2L303.5 604.4L304.0 604.4L304.5 604.3L305.0 604.2L305.5 604.2L306.0 604.3L306.5 604.4L307.0 604.4L307.5 604.3L308.0 604.3L308.5 604.3L309.0 604.3L309.5 604.3L310.0 604.2L310.5 604.3L311.0 604.4L311.5 604.3L312.0 604.1L312.5 604.3L313.0 604.6L313.5 604.5L314.0 604.2L314.5 604.2L315.0 604.3L315.5 604.2L316.0 604.3L316.5 604.4L317.0 604.4L317.5 604.2L318.0 604.2L318.5 604.4L319.0 604.4L319.5 604.2L320.0 604.2L320.5 604.3L321.0 604.3L321.5 604.4L322.0 604.3L322.5 604.2L323.0 604.2L323.5 604.3L324.0 604.3L324.5 604.4L325.0 604.3L325.5 604.3L326.0 604.3L326.5 604.2L327.0 604.3L327.5 604.3L328.0 604.4L328.5 604.4L329.0 604.4L329.5 604.3L330.0 604.1L330.5 604.2L331.0 604.4L331.5 604.4L332.0 604.3L332.5 604.3L333.0 604.3L333.5 604.4L334.0 604.3L334.5 604.2L335.0 604.2L335.5 604.4L336.0 604.4L336.5 604.2L337.0 604.2L337.5 604.3L338.0 604.3L338.5 604.3L339.0 604.3L339.5 604.2L340.0 604.2L340.5 604.4L341.0 604.6L341.5 604.6L342.0 604.2L342.5 604.0L343.0 604.2L343.5 604.3L344.0 604.4L344.5 604.4L345.0 604.3L345.5 604.2L346.0 604.2L346.5 604.3L347.0 604.3L347.5 604.4L348.0 604.5L348.5 604.4L349.0 604.2L349.5 604.1L350.0 604.3L350.5 604.4L351.0 604.3L351.5 604.2L352.0 604.3L352.5 604.4L353.0 604.3L353.5 604.1L354.0 604.1L354.5 604.3L355.0 604.6L355.5 604.6L356.0 604.2L356.5 604.0L357.0 604.1L357.5 604.4L358.0 604.5L358.5 604.6L359.0 604.3L359.5 604.1L360.0 604.1L360.5 604.2L361.0 604.4L361.5 604.3L362.0 604.3L362.5 604.3L363.0 604.4L363.5 604.4L364.0 604.2L364.5 604.1L365.0 604.2L365.5 604.5L366.0 604.6L366.5 604.3L367.0 604.1L367.5 604.2L368.0 604.3L368.5 604.3L369.0 604.2L369.5 604.3L370.0 604.4L370.5 604.4L371.0 604.3L371.5 604.3L372.0 604.4L372.5 604.4L373.0 604.2L373.5 604.2L374.0 604.4L374.5 604.3L375.0 604.2L375.5 604.3L376.0 604.4L376.5 604.4L377.0 604.3L377.5 604.2L378.0 604.2L378.5 604.3L379.0 604.3L379.5 604.4L380.0 604.4L380.5 604.4L381.0 604.3L381.5 604.3L382.0 604.3L382.5 604.2L383.0 604.2L383.5 604.2L384.0 604.3L384.5 604.3L385.0 604.2L385.5 604.3L386.0 604.5L386.5 604.4L387.0 604.2L387.5 604.3L388.0 604.5L388.5 604.4L389.0 604.4L389.5 604.4L390.0 604.3L390.5 604.0L391.0 604.1L391.5 604.4L392.0 604.6L392.5 604.4L393.0 604.1L393.5 604.1L394.0 604.3L394.5 604.3L395.0 604.3L395.5 604.3L396.0 604.3L396.5 604.4L397.0 604.4L397.5 604.3L398.0 604.2L398.5 604.3L399.0 604.5L399.5 604.3L400.0 604.1L400.5 604.1L401.0 604.4L401.5 604.5L402.0 604.3L402.5 604.2L403.0 604.3L403.5 604.3L404.0 604.2L404.5 604.2L405.0 604.4L405.5 604.4L406.0 604.3L406.5 604.3L407.0 604.3L407.5 604.2L408.0 604.0L408.5 604.2L409.0 604.4L409.5 604.4L410.0 604.3L410.5 604.3L411.0 604.3L411.5 604.2L412.0 604.3L412.5 604.5L413.0 604.5L413.5 604.2L414.0 604.0L414.5 604.2L415.0 604.5L415.5 604.4L416.0 604.2L416.5 604.3L417.0 604.4L417.5 604.2L418.0 604.0L418.5 604.2L419.0 604.5L419.5 604.5L420.0 604.4L420.5 604.3L421.0 604.1L421.5 604.1L422.0 604.2L422.5 604.4L423.0 604.4L423.5 604.3L424.0 604.3L424.5 604.3L425.0 604.3L425.5 604.3L426.0 604.3L426.5 604.3L427.0 604.2L427.5 604.3L428.0 604.3L428.5 604.3L429.0 604.2L429.5 604.1L430.0 604.3L430.5 604.5L431.0 604.5L431.5 604.2L432.0 604.1L432.5 604.1L433.0 604.3L433.5 604.5L434.0 604.4L434.5 604.3L435.0 604.4L435.5 604.5L436.0 604.3L436.5 604.1L437.0 604.1L437.5 604.3L438.0 604.5L438.5 604.5L439.0 604.3L439.5 604.1L440.0 604.2L440.5 604.3L441.0 604.4L441.5 604.4L442.0 604.3L442.5 604.3L443.0 604.4L443.5 604.4L444.0 604.1L444.5 604.0L445.0 604.2L445.5 604.4L446.0 604.4L446.5 604.5L447.0 604.5L447.5 604.4L448.0 604.1L448.5 604.0L449.0 604.1L449.5 604.6L450.0 604.8L450.5 604.4L451.0 604.0L451.5 604.0L452.0 604.3L452.5 604.4L453.0 604.3L453.5 604.4L454.0 604.4L454.5 604.2L455.0 604.1L455.5 604.2L456.0 604.3L456.5 604.4L457.0 604.4L457.5 604.3L458.0 604.2L458.5 604.2L459.0 604.3L459.5 604.4L460.0 604.4L460.5 604.4L461.0 604.4L461.5 604.4L462.0 604.2L462.5 604.0L463.0 604.1L463.5 604.4L464.0 604.6L464.5 604.5L465.0 604.2L465.5 604.1L466.0 604.3L466.5 604.5L467.0 604.4L467.5 604.2L468.0 604.2L468.5 604.1L469.0 604.3L469.5 604.5L470.0 604.4L470.5 604.3L471.0 604.0L471.5 603.4L472.0 603.7L472.5 606.1L473.0 605.9L473.5 603.2L474.0 602.4L474.5 603.5L475.0 604.3L475.5 604.8L476.0 604.8L476.5 604.0L477.0 603.7L477.5 604.7L478.0 605.5L478.5 604.8L479.0 603.9L479.5 604.0L480.0 604.1L480.5 603.8L481.0 603.9L481.5 604.7L482.0 604.7L482.5 603.7L483.0 603.8L483.5 604.9L484.0 604.9L484.5 603.8L485.0 603.8L485.5 604.9L486.0 605.5L486.5 604.2L487.0 602.0L487.5 601.9L488.0 604.7L488.5 607.7L489.0 607.1L489.5 603.7L490.0 601.8L490.5 603.1L491.0 604.7L491.5 605.2L492.0 605.3L492.5 604.4L493.0 603.0L493.5 602.7L494.0 603.9L494.5 605.5L495.0 606.1L495.5 604.8L496.0 602.9L496.5 602.8L497.0 604.2L497.5 605.0L498.0 605.0L498.5 604.8L499.0 604.1L499.5 603.2L500.0 603.2L500.5 604.4L501.0 605.4L501.5 605.5L502.0 605.4L502.5 604.2L503.0 602.8L503.5 603.3L504.0 604.9L504.5 605.1L505.0 604.0L505.5 603.7L506.0 604.8L506.5 605.3L507.0 604.3L507.5 602.9L508.0 603.2L508.5 605.1L509.0 605.9L509.5 604.4L510.0 603.1L510.5 603.5L511.0 604.5L511.5 604.8L512.0 604.7L512.5 604.1L513.0 603.7L513.5 604.1L514.0 604.6L514.5 604.9L515.0 605.0L515.5 604.4L516.0 603.5L516.5 603.8L517.0 604.7L517.5 604.6L518.0 604.1L518.5 604.4L519.0 604.4L519.5 603.8L520.0 604.1L520.5 605.2L521.0 605.1L521.5 604.1L522.0 603.5L522.5 603.6L523.0 604.3L523.5 604.9L524.0 604.2L524.5 603.4L525.0 604.0L525.5 604.9L526.0 604.8L526.5 604.3L527.0 604.3L527.5 604.7L528.0 604.6L528.5 603.9L529.0 603.9L529.5 604.9L530.0 604.9L530.5 603.3L531.0 602.8L531.5 604.4L532.0 605.4L532.5 604.8L533.0 604.0L533.5 603.9L534.0 604.2L534.5 604.2L535.0 604.2L535.5 605.0L536.0 605.4L536.5 604.2L537.0 603.1L537.5 603.7L538.0 604.9L538.5 605.2L539.0 604.5L539.5 603.5L540.0 603.0L540.5 603.8L541.0 605.3L541.5 605.8L542.0 604.5L542.5 603.5L543.0 603.9L543.5 604.2L544.0 603.8L544.5 604.2L545.0 605.0L545.5 604.5L546.0 603.3L546.5 603.6L547.0 605.5L547.5 606.3L548.0 604.7L548.5 602.7L549.0 602.6L549.5 604.3L550.0 605.1L550.5 604.3L551.0 603.5L551.5 604.2L552.0 605.4L552.5 605.5L553.0 604.6L553.5 604.0L554.0 604.2L554.5 604.5L555.0 604.1L555.5 603.5L556.0 603.4L556.5 603.8L557.0 604.5L557.5 605.2L558.0 605.6L558.5 604.9L559.0 603.9L559.5 603.7L560.0 603.9L560.5 603.4L561.0 603.4L561.5 604.7L562.0 605.4L562.5 604.7L563.0 604.0L563.5 603.9L564.0 603.6L564.5 604.1L565.0 605.0L565.5 604.8L566.0 604.6L566.5 605.2L567.0 604.5L567.5 602.8L568.0 603.1L568.5 604.8L569.0 605.3L569.5 604.3L570.0 603.5L570.5 604.2L571.0 605.1L571.5 604.7L572.0 604.2L572.5 604.7L573.0 604.1L573.5 602.9L574.0 604.0L574.5 605.8L575.0 605.0L575.5 603.3L576.0 603.2L576.5 604.7L577.0 605.8L577.5 605.5L578.0 604.2L578.5 602.8L579.0 602.1L579.5 603.8L580.0 606.2L580.5 606.5L581.0 604.8L581.5 603.2L582.0 602.7L582.5 603.8L583.0 605.5L583.5 605.1L584.0 603.6L584.5 603.9L585.0 605.2L585.5 604.9L586.0 604.2L586.5 604.5L587.0 604.4L587.5 604.0L588.0 604.2L588.5 604.6L589.0 604.5L589.5 604.1L590.0 603.8L590.5 603.7L591.0 603.9L591.5 604.9L592.0 605.4L592.5 604.2L593.0 603.1L593.5 603.9L594.0 605.3L594.5 605.0L595.0 603.7L595.5 603.6L596.0 604.4L596.5 604.1L597.0 603.5L597.5 604.2L598.0 604.9L598.5 604.6L599.0 604.5L599.5 605.0L600.0 604.9L600.5 604.7L601.0 604.3L601.5 603.1L602.0 603.0L602.5 604.4L603.0 605.0L603.5 604.7L604.0 604.9L604.5 604.8L605.0 603.7L605.5 603.1L606.0 603.8L606.5 604.7L607.0 604.8L607.5 604.3L608.0 604.1L608.5 604.2L609.0 604.3L609.5 604.4L610.0 604.8L610.5 604.5L611.0 603.7L611.5 604.1L612.0 605.2L612.5 605.2L613.0 604.0L613.5 603.4L614.0 603.7L614.5 604.1L615.0 604.5L615.5 605.4L616.0 605.5L616.5 604.0L617.0 603.0L617.5 604.1L618.0 605.0L618.5 604.5L619.0 603.7L619.5 603.6L620.0 604.2L620.5 604.9L621.0 605.0L621.5 604.6L622.0 604.0L622.5 603.8L623.0 604.3L623.5 604.8L624.0 604.5L624.5 604.2L625.0 604.2L625.5 604.1L626.0 604.1L626.5 604.3L627.0 604.5L627.5 604.4L628.0 604.0L628.5 603.5L629.0 603.6L629.5 604.7L630.0 605.5L630.5 605.3L631.0 604.2L631.5 603.3L632.0 602.2L632.5 602.5L633.0 605.7L633.5 607.8L634.0 606.7L634.5 605.7L635.0 603.7L635.5 598.8L636.0 598.3L636.5 605.0L637.0 611.4L637.5 611.2L638.0 610.4L638.5 605.4L639.0 596.7L639.5 594.8L640.0 598.2L640.5 606.0L641.0 613.6L641.5 608.2L642.0 597.7L642.5 600.6L643.0 610.7L643.5 610.7L644.0 601.7L644.5 596.7L645.0 601.1L645.5 609.6L646.0 610.9L646.5 602.5L647.0 598.4L647.5 605.2L648.0 610.6L648.5 606.8L649.0 599.7L649.5 597.6L650.0 603.0L650.5 609.3L651.0 608.6L651.5 602.4L652.0 598.8L652.5 601.5L653.0 605.4L653.5 606.6L654.0 606.9L654.5 607.5L655.0 605.6L655.5 601.7L656.0 600.7L656.5 604.8L657.0 608.9L657.5 608.6L658.0 604.0L658.5 598.9L659.0 598.2L659.5 603.2L660.0 607.4L660.5 606.2L661.0 604.2L661.5 605.5L662.0 607.7L662.5 608.1L663.0 605.2L663.5 599.4L664.0 597.2L664.5 602.1L665.0 607.0L665.5 606.9L666.0 605.5L666.5 605.6L667.0 605.4L667.5 602.9L668.0 600.9L668.5 603.5L669.0 607.0L669.5 605.5L670.0 603.0L670.5 604.6L671.0 606.2L671.5 603.8L672.0 601.8L672.5 604.4L673.0 606.4L673.5 603.5L674.0 602.6L674.5 607.8L675.0 609.9L675.5 602.1L676.0 594.3L676.5 597.1L677.0 605.6L677.5 611.9L678.0 612.2L678.5 604.6L679.0 597.3L679.5 599.6L680.0 605.3L680.5 606.5L681.0 606.2L681.5 605.5L682.0 602.5L682.5 600.1L683.0 602.0L683.5 608.0L684.0 613.8L684.5 611.2L685.0 600.3L685.5 593.6L686.0 598.9L686.5 608.5L687.0 610.5L687.5 605.2L688.0 601.2L688.5 602.2L689.0 604.5L689.5 605.4L690.0 605.1L690.5 604.7L691.0 603.8L691.5 601.9L692.0 600.8L692.5 602.9L693.0 607.0L693.5 608.5L694.0 606.4L694.5 604.5L695.0 603.3L695.5 601.9L696.0 603.2L696.5 605.7L697.0 606.2L697.5 606.2L698.0 606.3L698.5 604.3L699.0 601.4L699.5 601.3L700.0 603.9L700.5 605.1L701.0 604.3L701.5 604.1L702.0 603.9L702.5 603.3L703.0 604.2L703.5 605.6L704.0 606.0L704.5 605.0L705.0 603.0L705.5 602.5L706.0 605.1L706.5 606.4L707.0 604.2L707.5 602.2L708.0 603.8L708.5 607.1L709.0 606.7L709.5 602.6L710.0 601.6L710.5 604.7L711.0 606.4L711.5 605.6L712.0 604.8L712.5 603.7L713.0 602.5L713.5 603.3L714.0 603.9L714.5 602.6L715.0 603.7L715.5 607.5L716.0 606.7L716.5 601.2L717.0 601.2L717.5 606.7L718.0 607.6L718.5 604.0L719.0 601.8L719.5 601.9L720.0 604.1L720.5 606.4L721.0 606.0L721.5 604.7L722.0 604.3L722.5 603.8L723.0 603.6L723.5 603.9L724.0 604.0L724.5 604.3L725.0 605.0L725.5 605.0L726.0 605.0L726.5 605.4L727.0 603.8L727.5 601.5L728.0 602.6L728.5 605.5L729.0 605.5L729.5 603.0L730.0 602.8L730.5 605.8L731.0 607.9L731.5 606.3L732.0 602.3L732.5 599.4L733.0 601.8L733.5 607.1L734.0 607.8L734.5 603.3L735.0 601.1L735.5 603.9L736.0 607.2L736.5 606.2L737.0 603.1L737.5 602.5L738.0 604.2L738.5 605.9L739.0 605.8L739.5 603.5L740.0 602.6L740.5 604.7L741.0 605.9L741.5 604.0L742.0 602.0L742.5 602.6L743.0 604.2L743.5 604.6L744.0 605.1L744.5 605.9L745.0 604.8L745.5 603.2L746.0 604.0L746.5 604.9L747.0 604.2L747.5 603.5L748.0 604.1L748.5 605.2L749.0 605.0L749.5 603.7L750.0 603.8L750.5 605.5L751.0 605.2L751.5 602.7L752.0 602.5L752.5 604.9L753.0 605.9L753.5 604.7L754.0 604.8L754.5 606.0L755.0 604.5L755.5 601.1L756.0 601.2L756.5 605.4L757.0 607.8L757.5 605.7L758.0 602.7L758.5 602.6L759.0 604.8L759.5 605.2L760.0 603.4L760.5 603.1L761.0 604.5L761.5 605.1L762.0 605.4L762.5 605.7L763.0 604.4L763.5 602.6L764.0 603.4L764.5 605.2L765.0 604.9L765.5 603.6L766.0 602.9L766.5 602.3L767.0 603.2L767.5 606.3L768.0 607.8L768.5 605.8L769.0 602.7L769.5 601.8L770.0 603.7L770.5 606.1L771.0 607.0L771.5 605.9L772.0 603.1L772.5 601.5L773.0 602.5L773.5 604.3L774.0 605.2L774.5 604.8L775.0 603.8L775.5 604.4L776.0 605.9L776.5 605.7L777.0 604.5L777.5 603.7L778.0 603.9L778.5 605.1L779.0 605.2L779.5 603.2L780.0 601.8L780.5 603.1L781.0 605.4L781.5 606.6L782.0 606.3L782.5 605.5L783.0 604.1L783.5 602.3L784.0 602.3L784.5 603.8L785.0 604.0L785.5 603.0L786.0 602.8L786.5 603.8L787.0 604.8L787.5 605.4L788.0 605.3L788.5 604.6L789.0 604.2L789.5 604.5L790.0 604.0L790.5 603.1L791.0 604.1L791.5 606.3L792.0 606.3L792.5 604.7L793.0 603.7L793.5 603.4L794.0 603.3L794.5 603.9L795.0 604.5L795.5 604.6L796.0 604.5L796.5 604.4L797.0 604.4L797.5 605.1L798.0 605.6L798.5 604.7L799.0 603.9L799.5 604.4L800.0 604.7L800.5 603.8L801.0 603.2L801.5 603.5L802.0 603.9L802.5 604.7L803.0 605.9L803.5 605.2L804.0 602.9L804.5 602.4L805.0 604.1L805.5 605.5L806.0 605.7L806.5 605.2L807.0 604.4L807.5 603.8L808.0 603.2L808.5 602.8L809.0 603.8L809.5 605.1L810.0 604.8L810.5 603.9L811.0 604.0L811.5 604.6L812.0 604.7L812.5 604.2L813.0 603.6L813.5 603.7L814.0 604.4L814.5 604.9L815.0 604.6L815.5 604.0L816.0 604.1L816.5 604.8L817.0 604.6L817.5 604.1L818.0 604.5L818.5 605.1L819.0 605.1L819.5 604.8L820.0 604.2L820.5 604.0L821.0 604.4L821.5 604.3L822.0 603.4L822.5 603.0L823.0 604.0L823.5 605.4L824.0 605.5L824.5 604.6L825.0 603.8L825.5 603.9L826.0 604.2L826.5 604.3L827.0 604.2L827.5 604.2L828.0 604.1L828.5 603.6L829.0 603.3L829.5 603.4L830.0 603.9L830.5 604.7L831.0 605.8L831.5 606.5L832.0 606.0L832.5 604.8L833.0 603.8L833.5 603.2L834.0 602.9L834.5 602.7L835.0 603.0L835.5 604.3L836.0 605.5L836.5 605.7L837.0 605.4L837.5 605.4L838.0 605.4L838.5 605.3L839.0 604.9L839.5 604.0L840.0 603.0L840.5 602.7L841.0 602.9L841.5 603.7L842.0 604.6L842.5 604.3L843.0 603.6L843.5 604.4L844.0 605.1L844.5 604.2L845.0 603.6L845.5 604.5L846.0 604.8L846.5 603.9L847.0 603.6L847.5 604.4L848.0 604.7L848.5 604.2L849.0 604.6L849.5 605.7L850.0 605.8L850.5 605.0L851.0 604.2L851.5 603.6L852.0 602.9L852.5 602.7L853.0 603.5L853.5 604.9L854.0 605.6L854.5 605.1L855.0 604.1L855.5 603.5L856.0 602.9L856.5 602.7L857.0 603.3L857.5 604.3L858.0 605.2L858.5 605.7L859.0 605.5L859.5 604.8L860.0 604.2L860.5 604.3L861.0 604.4L861.5 604.1L862.0 603.6L862.5 603.3L863.0 603.2L863.5 603.9L864.0 605.3L864.5 606.1L865.0 605.3L865.5 604.1L866.0 603.6L866.5 603.7L867.0 603.9L867.5 604.2L868.0 604.5L868.5 605.1L869.0 604.9L869.5 603.6L870.0 602.9L870.5 603.8L871.0 604.8L871.5 605.3L872.0 605.4L872.5 604.7L873.0 603.7L873.5 602.9L874.0 602.9L874.5 603.3L875.0 603.7L875.5 604.2L876.0 605.0L876.5 605.7L877.0 605.7L877.5 605.4L878.0 605.1L878.5 604.4L879.0 603.8L879.5 603.9L880.0 603.7L880.5 602.9L881.0 602.5L881.5 603.2L882.0 604.4L882.5 605.2L883.0 605.6L883.5 605.6L884.0 605.3L884.5 604.6L885.0 603.7L885.5 603.6L886.0 604.5L886.5 605.5L887.0 605.5L887.5 604.5L888.0 603.7L888.5 603.6L889.0 603.2L889.5 602.7L890.0 602.9L890.5 604.0L891.0 604.9L891.5 605.5L892.0 605.8L892.5 605.8L893.0 605.4L893.5 604.7L894.0 604.0L894.5 603.2L895.0 602.7L895.5 603.0L896.0 603.9L896.5 604.5L897.0 604.5L897.5 604.0L898.0 603.8L898.5 604.2L899.0 604.7L899.5 604.6L900.0 604.3L900.5 604.2L901.0 604.3L901.5 604.2L902.0 604.2L902.5 604.2L903.0 604.5L903.5 605.2L904.0 605.8L904.5 605.7L905.0 605.1L905.5 604.5L906.0 604.4L906.5 604.2L907.0 603.7L907.5 603.0L908.0 602.6L908.5 603.0L909.0 604.2L909.5 605.0L910.0 604.8L910.5 604.5L911.0 604.8L911.5 605.0L912.0 604.8L912.5 604.7L913.0 605.3L913.5 605.9L914.0 605.2L914.5 603.3L915.0 602.0L915.5 601.8L916.0 602.5L916.5 603.5L917.0 604.6L917.5 605.3L918.0 605.6L918.5 605.3L919.0 604.4L919.5 603.5L920.0 603.2L920.5 603.7L921.0 604.5L921.5 605.4L922.0 605.7L922.5 605.3L923.0 604.5L923.5 603.8L924.0 603.5L924.5 603.7L925.0 604.2L925.5 604.3L926.0 604.2L926.5 604.1L927.0 604.0L927.5 603.9L928.0 604.1L928.5 604.2L929.0 604.1L929.5 604.1L930.0 604.6L930.5 605.1L931.0 605.3L931.5 604.9L932.0 604.4L932.5 604.2L933.0 604.0L933.5 603.8L934.0 603.6L934.5 603.9L935.0 604.6L935.5 605.4L936.0 605.8L936.5 605.2L937.0 603.9L937.5 603.2L938.0 603.6L938.5 604.2L939.0 604.5L939.5 604.1L940.0 603.7L940.5 604.3L941.0 605.2L941.5 605.0L942.0 604.1L942.5 603.8L943.0 604.1L943.5 604.2L944.0 604.3L944.5 604.7L945.0 605.0L945.5 604.4L946.0 603.1L946.5 602.8L947.0 603.8L947.5 604.8L948.0 605.0L948.5 604.8L949.0 604.3L949.5 603.8L950.0 603.9L950.5 604.5L951.0 605.0L951.5 604.9L952.0 604.6L952.5 604.4L953.0 604.4L953.5 604.3L954.0 604.0L954.5 604.0L955.0 604.1L955.5 604.1L956.0 604.1L956.5 604.6L957.0 604.9L957.5 604.4L958.0 603.7L958.5 603.6L959.0 603.6L959.5 603.2L960.0 603.4L960.5 604.5L961.0 605.5L961.5 605.5L962.0 604.6L962.5 603.9L963.0 603.9L963.5 604.4L964.0 604.6L964.5 604.2L965.0 604.0L965.5 604.2L966.0 604.4L966.5 604.6L967.0 604.6L967.5 603.9L968.0 603.3L968.5 603.7L969.0 604.7L969.5 605.3L970.0 605.3L970.5 604.8L971.0 604.5L971.5 604.5L972.0 604.2L972.5 603.4L973.0 602.7L973.5 603.0L974.0 603.8L974.5 604.3L975.0 604.4L975.5 604.5L976.0 604.4L976.5 604.6L977.0 605.0L977.5 605.3L978.0 605.1L978.5 604.6L979.0 604.0L979.5 603.7L980.0 603.4L980.5 603.4L981.0 603.8L981.5 604.6L982.0 605.0L982.5 604.7L983.0 604.0L983.5 603.8L984.0 604.3L984.5 604.8L985.0 605.1L985.5 605.0L986.0 605.0L986.5 604.8L987.0 604.0L987.5 603.0L988.0 603.2L988.5 604.5L989.0 605.4L989.5 605.4L990.0 604.9L990.5 604.4L991.0 603.8L991.5 603.3L992.0 603.5L992.5 603.9L993.0 604.2L993.5 604.0L994.0 603.6L994.5 603.4L995.0 603.7L995.5 604.2L996.0 604.6L996.5 605.0L997.0 605.4L997.5 605.0L998.0 604.0L998.5 603.6L999.0 604.2L999.5 605.0L1000.0 605.5L1000.5 605.5L1001.0 605.0L1001.5 604.4L1002.0 603.7L1002.5 602.9L1003.0 602.8L1003.5 603.1L1004.0 603.4L1004.5 603.8L1005.0 604.5L1005.5 605.4L1006.0 605.9L1006.5 605.5L1007.0 604.5L1007.5 603.7L1008.0 603.7L1008.5 604.2L1009.0 605.0L1009.5 605.7L1010.0 605.5L1010.5 604.6L1011.0 603.8L1011.5 603.2L1012.0 602.9L1012.5 603.0L1013.0 603.4L1013.5 604.0L1014.0 604.9L1014.5 605.4L1015.0 605.4L1015.5 605.2L1016.0 604.5L1016.5 603.4L1017.0 602.6L1017.5 602.7L1018.0 603.9L1018.5 605.2L1019.0 605.9L1019.5 605.6L1020.0 604.8L1020.5 603.9L1021.0 603.4L1021.5 603.5L1022.0 603.6L1022.5 603.5L1023.0 603.8L1023.5 604.5L1024.0 604.9L1024.5 605.0L1025.0 605.0L1025.5 604.8L1026.0 604.5L1026.5 604.4L1027.0 604.4L1027.5 604.5L1028.0 604.6L1028.5 604.5L1029.0 604.2L1029.5 604.0L1030.0 604.2L1030.5 604.5L1031.0 604.5L1031.5 604.5L1032.0 604.6L1032.5 604.8L1033.0 604.4L1033.5 603.7L1034.0 603.0L1034.5 603.0L1035.0 604.1L1035.5 605.7L1036.0 606.3L1036.5 605.3L1037.0 604.4L1037.5 604.3L1038.0 603.8L1038.5 602.8L1039.0 602.6L1039.5 603.9L1040.0 605.1" stroke="#7a7a7a" stroke-width="1" fill="none" stroke-linejoin="round"/><g shape-rendering="crispEdges"><rect x="154" y="584" width="37" height="37" fill="#000" fill-opacity=".373"/><rect x="191" y="584" width="229" height="37" fill="#000" fill-opacity=".25"/><rect x="1023" y="584" width="380" height="37" fill="#000" fill-opacity=".373"/><path d="M1040 604.5H1403" stroke="#8c8cb4" stroke-opacity=".55"/><path d="M466.5 584V621" stroke="#b40000" stroke-width="1"/><path d="M472.5 584V621" stroke="#0000c0" stroke-width="1"/><path d="M642.5 584V621" stroke="#0000c0" stroke-width="1"/><path d="M642.5 584V621" stroke="#b40000" stroke-width="1"/></g><text transform="translate(474.2 618.8) scale(.84 1)" style="font-size:15.200px" fill="#0000c0">P</text><text transform="translate(644.2 618.8) scale(.84 1)" style="font-size:15.200px" fill="#0000c0">S</text><g shape-rendering="crispEdges"><rect x="420" y="611" width="612" height="10" fill="rgb(160,0,0)" fill-opacity="0.28"/></g><text x="158" y="601.1" text-anchor="start" fill="#232323" >amax: 22.8 M</text><text x="158" y="616.4" text-anchor="start" fill="#232323" >mean: 2.9 k</text><text x="644.5" y="599.8" text-anchor="start" fill="#a41414" style="letter-spacing:-.25px">MLv: 4.22</text><g shape-rendering="crispEdges"><rect x="154" y="623" width="1249" height="37" fill="#fff"/><path d="M190.5 623V660" stroke="#000" stroke-opacity=".15" stroke-dasharray="4 3"/><path d="M328.5 623V660" stroke="#000" stroke-opacity=".15" stroke-dasharray="4 3"/><path d="M466.5 623V660" stroke="#000" stroke-opacity=".15" stroke-dasharray="4 3"/><path d="M604.5 623V660" stroke="#000" stroke-opacity=".15" stroke-dasharray="4 3"/><path d="M742.5 623V660" stroke="#000" stroke-opacity=".15" stroke-dasharray="4 3"/><path d="M880.5 623V660" stroke="#000" stroke-opacity=".15" stroke-dasharray="4 3"/><path d="M1018.5 623V660" stroke="#000" stroke-opacity=".15" stroke-dasharray="4 3"/><path d="M1156.5 623V660" stroke="#000" stroke-opacity=".15" stroke-dasharray="4 3"/><path d="M1294.5 623V660" stroke="#000" stroke-opacity=".15" stroke-dasharray="4 3"/><path d="M154 638.5H1403" stroke="#aaaacc" stroke-opacity=".3"/></g><path d="M154.0 637.5L154.5 637.5L155.0 637.4L155.5 637.3L156.0 637.6L156.5 637.8L157.0 637.6L157.5 637.4L158.0 637.3L158.5 637.4L159.0 637.4L159.5 637.4L160.0 637.5L160.5 637.7L161.0 637.6L161.5 637.5L162.0 637.5L162.5 637.5L163.0 637.5L163.5 637.5L164.0 637.4L164.5 637.4L165.0 637.5L165.5 637.7L166.0 637.7L166.5 637.4L167.0 637.3L167.5 637.5L168.0 637.6L168.5 637.5L169.0 637.4L169.5 637.5L170.0 637.6L170.5 637.6L171.0 637.5L171.5 637.4L172.0 637.4L172.5 637.5L173.0 637.6L173.5 637.6L174.0 637.4L174.5 637.3L175.0 637.6L175.5 637.7L176.0 637.6L176.5 637.5L177.0 637.5L177.5 637.4L178.0 637.3L178.5 637.4L179.0 637.6L179.5 637.7L180.0 637.6L180.5 637.4L181.0 637.3L181.5 637.4L182.0 637.6L182.5 637.8L183.0 637.6L183.5 637.4L184.0 637.4L184.5 637.5L185.0 637.5L185.5 637.6L186.0 637.5L186.5 637.3L187.0 637.3L187.5 637.5L188.0 637.6L188.5 637.6L189.0 637.6L189.5 637.5L190.0 637.5L190.5 637.5L191.0 637.4L191.5 637.5L192.0 637.6L192.5 637.6L193.0 637.5L193.5 637.4L194.0 637.5L194.5 637.6L195.0 637.4L195.5 637.3L196.0 637.5L196.5 637.7L197.0 637.6L197.5 637.5L198.0 637.4L198.5 637.3L199.0 637.4L199.5 637.6L200.0 637.6L200.5 637.4L201.0 637.5L201.5 637.7L202.0 637.6L202.5 637.3L203.0 637.3L203.5 637.5L204.0 637.7L204.5 637.7L205.0 637.6L205.5 637.4L206.0 637.3L206.5 637.3L207.0 637.3L207.5 637.5L208.0 637.7L208.5 637.6L209.0 637.5L209.5 637.4L210.0 637.5L210.5 637.6L211.0 637.6L211.5 637.6L212.0 637.6L212.5 637.5L213.0 637.4L213.5 637.4L214.0 637.4L214.5 637.5L215.0 637.5L215.5 637.5L216.0 637.5L216.5 637.5L217.0 637.4L217.5 637.4L218.0 637.7L218.5 637.8L219.0 637.6L219.5 637.4L220.0 637.5L220.5 637.5L221.0 637.3L221.5 637.3L222.0 637.6L222.5 637.6L223.0 637.3L223.5 637.3L224.0 637.6L224.5 637.8L225.0 637.6L225.5 637.4L226.0 637.3L226.5 637.4L227.0 637.6L227.5 637.6L228.0 637.6L228.5 637.6L229.0 637.6L229.5 637.5L230.0 637.2L230.5 637.2L231.0 637.6L231.5 637.8L232.0 637.5L232.5 637.3L233.0 637.5L233.5 637.6L234.0 637.5L234.5 637.4L235.0 637.4L235.5 637.4L236.0 637.6L236.5 637.7L237.0 637.6L237.5 637.5L238.0 637.4L238.5 637.4L239.0 637.6L239.5 637.6L240.0 637.5L240.5 637.3L241.0 637.3L241.5 637.5L242.0 637.8L242.5 637.6L243.0 637.3L243.5 637.3L244.0 637.6L244.5 637.7L245.0 637.5L245.5 637.3L246.0 637.4L246.5 637.7L247.0 637.6L247.5 637.2L248.0 637.4L248.5 637.7L249.0 637.7L249.5 637.5L250.0 637.5L250.5 637.6L251.0 637.4L251.5 637.3L252.0 637.4L252.5 637.7L253.0 637.7L253.5 637.6L254.0 637.5L254.5 637.5L255.0 637.4L255.5 637.4L256.0 637.6L256.5 637.7L257.0 637.5L257.5 637.2L258.0 637.4L258.5 637.8L259.0 637.7L259.5 637.4L260.0 637.3L260.5 637.4L261.0 637.4L261.5 637.5L262.0 637.6L262.5 637.6L263.0 637.5L263.5 637.5L264.0 637.5L264.5 637.4L265.0 637.4L265.5 637.5L266.0 637.6L266.5 637.6L267.0 637.5L267.5 637.4L268.0 637.4L268.5 637.4L269.0 637.5L269.5 637.7L270.0 637.7L270.5 637.5L271.0 637.4L271.5 637.4L272.0 637.4L272.5 637.5L273.0 637.6L273.5 637.6L274.0 637.4L274.5 637.4L275.0 637.5L275.5 637.6L276.0 637.6L276.5 637.6L277.0 637.4L277.5 637.3L278.0 637.3L278.5 637.5L279.0 637.7L279.5 637.7L280.0 637.6L280.5 637.5L281.0 637.4L281.5 637.4L282.0 637.5L282.5 637.5L283.0 637.6L283.5 637.6L284.0 637.5L284.5 637.4L285.0 637.5L285.5 637.6L286.0 637.5L286.5 637.4L287.0 637.4L287.5 637.5L288.0 637.6L288.5 637.5L289.0 637.3L289.5 637.5L290.0 637.7L290.5 637.7L291.0 637.5L291.5 637.4L292.0 637.3L292.5 637.4L293.0 637.5L293.5 637.6L294.0 637.7L294.5 637.7L295.0 637.4L295.5 637.2L296.0 637.3L296.5 637.6L297.0 637.8L297.5 637.7L298.0 637.4L298.5 637.2L299.0 637.3L299.5 637.5L300.0 637.6L300.5 637.5L301.0 637.6L301.5 637.7L302.0 637.6L302.5 637.3L303.0 637.4L303.5 637.5L304.0 637.5L304.5 637.4L305.0 637.5L305.5 637.7L306.0 637.6L306.5 637.3L307.0 637.2L307.5 637.5L308.0 637.7L308.5 637.6L309.0 637.5L309.5 637.4L310.0 637.4L310.5 637.5L311.0 637.6L311.5 637.6L312.0 637.5L312.5 637.4L313.0 637.4L313.5 637.5L314.0 637.6L314.5 637.5L315.0 637.5L315.5 637.5L316.0 637.5L316.5 637.5L317.0 637.6L317.5 637.5L318.0 637.4L318.5 637.6L319.0 637.7L319.5 637.5L320.0 637.3L320.5 637.4L321.0 637.7L321.5 637.7L322.0 637.4L322.5 637.3L323.0 637.4L323.5 637.5L324.0 637.6L324.5 637.6L325.0 637.6L325.5 637.5L326.0 637.4L326.5 637.4L327.0 637.4L327.5 637.4L328.0 637.5L328.5 637.5L329.0 637.6L329.5 637.6L330.0 637.5L330.5 637.3L331.0 637.4L331.5 637.7L332.0 637.6L332.5 637.4L333.0 637.3L333.5 637.4L334.0 637.6L334.5 637.6L335.0 637.5L335.5 637.5L336.0 637.6L336.5 637.6L337.0 637.5L337.5 637.4L338.0 637.4L338.5 637.5L339.0 637.5L339.5 637.5L340.0 637.4L340.5 637.5L341.0 637.5L341.5 637.6L342.0 637.6L342.5 637.4L343.0 637.3L343.5 637.5L344.0 637.6L344.5 637.5L345.0 637.4L345.5 637.3L346.0 637.5L346.5 637.6L347.0 637.6L347.5 637.4L348.0 637.5L348.5 637.6L349.0 637.6L349.5 637.6L350.0 637.5L350.5 637.4L351.0 637.3L351.5 637.5L352.0 637.7L352.5 637.7L353.0 637.4L353.5 637.3L354.0 637.4L354.5 637.5L355.0 637.5L355.5 637.6L356.0 637.6L356.5 637.4L357.0 637.3L357.5 637.4L358.0 637.6L358.5 637.6L359.0 637.5L359.5 637.2L360.0 637.2L360.5 637.6L361.0 637.8L361.5 637.7L362.0 637.5L362.5 637.5L363.0 637.5L363.5 637.4L364.0 637.4L364.5 637.5L365.0 637.6L365.5 637.5L366.0 637.5L366.5 637.5L367.0 637.6L367.5 637.6L368.0 637.5L368.5 637.4L369.0 637.4L369.5 637.5L370.0 637.6L370.5 637.6L371.0 637.5L371.5 637.4L372.0 637.3L372.5 637.4L373.0 637.6L373.5 637.6L374.0 637.5L374.5 637.4L375.0 637.5L375.5 637.5L376.0 637.6L376.5 637.6L377.0 637.6L377.5 637.4L378.0 637.4L378.5 637.5L379.0 637.8L379.5 637.8L380.0 637.3L380.5 637.0L381.0 637.3L381.5 637.7L382.0 637.7L382.5 637.5L383.0 637.4L383.5 637.6L384.0 637.6L384.5 637.4L385.0 637.4L385.5 637.5L386.0 637.6L386.5 637.5L387.0 637.5L387.5 637.5L388.0 637.6L388.5 637.4L389.0 637.2L389.5 637.4L390.0 637.8L390.5 637.8L391.0 637.4L391.5 637.2L392.0 637.5L392.5 637.7L393.0 637.6L393.5 637.3L394.0 637.4L394.5 637.6L395.0 637.7L395.5 637.4L396.0 637.3L396.5 637.4L397.0 637.7L397.5 637.6L398.0 637.5L398.5 637.5L399.0 637.5L399.5 637.5L400.0 637.5L400.5 637.4L401.0 637.3L401.5 637.6L402.0 637.7L402.5 637.5L403.0 637.4L403.5 637.5L404.0 637.5L404.5 637.5L405.0 637.5L405.5 637.5L406.0 637.5L406.5 637.5L407.0 637.6L407.5 637.5L408.0 637.3L408.5 637.2L409.0 637.6L409.5 637.8L410.0 637.7L410.5 637.5L411.0 637.5L411.5 637.3L412.0 637.3L412.5 637.5L413.0 637.7L413.5 637.6L414.0 637.6L414.5 637.5L415.0 637.4L415.5 637.4L416.0 637.5L416.5 637.6L417.0 637.5L417.5 637.4L418.0 637.6L418.5 637.7L419.0 637.6L419.5 637.5L420.0 637.5L420.5 637.5L421.0 637.3L421.5 637.2L422.0 637.4L422.5 637.8L423.0 637.7L423.5 637.4L424.0 637.3L424.5 637.3L425.0 637.5L425.5 637.8L426.0 637.8L426.5 637.4L427.0 637.2L427.5 637.4L428.0 637.6L428.5 637.5L429.0 637.4L429.5 637.5L430.0 637.6L430.5 637.6L431.0 637.5L431.5 637.5L432.0 637.4L432.5 637.4L433.0 637.5L433.5 637.6L434.0 637.5L434.5 637.5L435.0 637.5L435.5 637.5L436.0 637.5L436.5 637.5L437.0 637.5L437.5 637.5L438.0 637.4L438.5 637.5L439.0 637.6L439.5 637.5L440.0 637.4L440.5 637.6L441.0 637.6L441.5 637.5L442.0 637.5L442.5 637.4L443.0 637.4L443.5 637.6L444.0 637.8L444.5 637.6L445.0 637.4L445.5 637.4L446.0 637.4L446.5 637.4L447.0 637.4L447.5 637.5L448.0 637.7L448.5 637.6L449.0 637.3L449.5 637.4L450.0 637.7L450.5 637.6L451.0 637.3L451.5 637.4L452.0 637.7L452.5 637.6L453.0 637.3L453.5 637.3L454.0 637.5L454.5 637.6L455.0 637.7L455.5 637.8L456.0 637.5L456.5 637.0L457.0 637.1L457.5 637.6L458.0 637.8L458.5 637.6L459.0 637.4L459.5 637.5L460.0 637.6L460.5 637.5L461.0 637.4L461.5 637.5L462.0 637.5L462.5 637.5L463.0 637.5L463.5 637.6L464.0 637.5L464.5 637.5L465.0 637.5L465.5 637.3L466.0 638.1L466.5 641.8L467.0 644.3L467.5 634.9L468.0 624.4L468.5 630.0L469.0 644.9L469.5 647.7L470.0 638.3L470.5 630.7L471.0 629.6L471.5 636.5L472.0 647.0L472.5 646.3L473.0 634.4L473.5 628.9L474.0 634.8L474.5 640.3L475.0 639.1L475.5 635.6L476.0 635.7L476.5 640.4L477.0 643.7L477.5 639.7L478.0 632.6L478.5 632.6L479.0 638.9L479.5 640.6L480.0 636.2L480.5 633.6L481.0 636.1L481.5 639.5L482.0 639.9L482.5 637.7L483.0 636.0L483.5 636.6L484.0 637.6L484.5 637.4L485.0 637.1L485.5 637.8L486.0 638.8L486.5 639.7L487.0 638.8L487.5 635.8L488.0 634.6L488.5 636.9L489.0 638.5L489.5 637.8L490.0 637.9L490.5 638.9L491.0 637.7L491.5 635.2L492.0 635.8L492.5 638.3L493.0 638.8L493.5 638.5L494.0 638.4L494.5 637.6L495.0 637.0L495.5 637.2L496.0 637.3L496.5 637.4L497.0 636.9L497.5 635.8L498.0 637.1L498.5 639.7L499.0 638.9L499.5 636.6L500.0 636.8L500.5 637.4L501.0 636.8L501.5 637.2L502.0 638.3L502.5 637.8L503.0 637.1L503.5 637.7L504.0 637.8L504.5 637.1L505.0 637.6L505.5 638.7L506.0 637.8L506.5 635.9L507.0 636.2L507.5 637.9L508.0 638.4L508.5 638.3L509.0 638.1L509.5 636.9L510.0 635.9L510.5 637.1L511.0 638.8L511.5 638.5L512.0 636.9L512.5 636.6L513.0 637.4L513.5 637.5L514.0 637.3L514.5 638.0L515.0 638.3L515.5 636.9L516.0 636.5L516.5 638.2L517.0 638.8L517.5 636.7L518.0 635.7L518.5 637.7L519.0 639.1L519.5 637.7L520.0 636.7L520.5 637.6L521.0 637.5L521.5 636.5L522.0 637.9L522.5 639.6L523.0 637.6L523.5 635.7L524.0 637.8L524.5 639.9L525.0 638.3L525.5 636.0L526.0 635.6L526.5 636.3L527.0 637.7L527.5 638.6L528.0 637.7L528.5 636.9L529.0 637.8L529.5 638.5L530.0 637.3L530.5 636.3L531.0 637.5L531.5 639.2L532.0 638.3L532.5 636.3L533.0 636.2L533.5 637.6L534.0 638.2L534.5 638.2L535.0 637.8L535.5 637.0L536.0 636.7L536.5 637.1L537.0 637.6L537.5 637.9L538.0 637.6L538.5 637.3L539.0 637.7L539.5 637.9L540.0 637.4L540.5 637.0L541.0 636.7L541.5 637.3L542.0 638.3L542.5 638.0L543.0 636.9L543.5 637.0L544.0 637.8L544.5 637.9L545.0 637.8L545.5 637.9L546.0 637.7L546.5 637.3L547.0 636.9L547.5 637.1L548.0 637.3L548.5 637.3L549.0 637.5L549.5 637.7L550.0 637.5L550.5 636.8L551.0 636.9L551.5 637.9L552.0 638.4L552.5 638.0L553.0 637.4L553.5 637.2L554.0 637.5L554.5 637.2L555.0 636.4L555.5 636.5L556.0 637.8L556.5 638.8L557.0 638.7L557.5 638.0L558.0 637.2L558.5 636.6L559.0 637.0L559.5 638.7L560.0 638.9L560.5 636.8L561.0 635.9L561.5 637.5L562.0 638.7L562.5 637.7L563.0 636.5L563.5 636.9L564.0 638.0L564.5 638.2L565.0 637.2L565.5 635.8L566.0 636.2L566.5 638.3L567.0 639.4L567.5 638.8L568.0 638.1L568.5 637.6L569.0 636.8L569.5 636.0L570.0 636.5L570.5 637.8L571.0 638.2L571.5 637.5L572.0 637.3L572.5 637.5L573.0 637.5L573.5 637.5L574.0 637.5L574.5 637.6L575.0 637.8L575.5 637.5L576.0 637.5L576.5 638.3L577.0 638.6L577.5 637.2L578.0 635.8L578.5 635.8L579.0 636.8L579.5 637.8L580.0 638.4L580.5 638.4L581.0 638.1L581.5 638.0L582.0 637.7L582.5 637.0L583.0 636.8L583.5 637.6L584.0 638.2L584.5 637.8L585.0 637.2L585.5 636.7L586.0 636.6L586.5 637.7L587.0 638.5L587.5 638.2L588.0 637.5L588.5 637.2L589.0 637.0L589.5 636.9L590.0 637.4L590.5 637.8L591.0 637.3L591.5 637.3L592.0 638.5L592.5 638.9L593.0 637.3L593.5 636.0L594.0 636.5L594.5 637.6L595.0 638.3L595.5 638.5L596.0 637.9L596.5 636.7L597.0 636.5L597.5 637.5L598.0 637.9L598.5 637.2L599.0 637.2L599.5 638.1L600.0 637.9L600.5 637.0L601.0 637.2L601.5 638.1L602.0 638.0L602.5 637.3L603.0 637.4L603.5 638.1L604.0 637.9L604.5 636.8L605.0 636.6L605.5 637.6L606.0 638.3L606.5 638.0L607.0 637.0L607.5 636.4L608.0 637.2L608.5 638.6L609.0 638.2L609.5 636.5L610.0 636.5L610.5 637.7L611.0 638.3L611.5 638.3L612.0 638.2L612.5 637.1L613.0 635.9L613.5 636.2L614.0 637.7L614.5 638.5L615.0 638.1L615.5 638.0L616.0 638.3L616.5 637.8L617.0 636.8L617.5 636.6L618.0 637.1L618.5 637.2L619.0 637.3L619.5 638.0L620.0 638.0L620.5 637.3L621.0 637.3L621.5 637.8L622.0 637.5L622.5 637.2L623.0 638.1L623.5 638.3L624.0 637.0L624.5 636.5L625.0 637.5L625.5 638.0L626.0 637.5L626.5 637.6L627.0 637.5L627.5 636.4L628.0 636.8L628.5 638.8L629.0 639.4L629.5 637.9L630.0 636.7L630.5 636.7L631.0 637.4L631.5 637.7L632.0 637.4L632.5 637.6L633.0 637.8L633.5 637.4L634.0 637.0L634.5 637.1L635.0 637.4L635.5 637.9L636.0 638.2L636.5 638.1L637.0 637.5L637.5 637.2L638.0 637.5L638.5 637.6L639.0 636.9L639.5 636.4L640.0 637.1L640.5 637.8L641.0 637.8L641.5 637.8L642.0 638.2L642.5 638.2L643.0 638.2L643.5 636.8L644.0 633.0L644.5 633.6L645.0 641.4L645.5 646.2L646.0 642.0L646.5 636.6L647.0 633.8L647.5 628.2L648.0 626.8L648.5 643.6L649.0 659.5L649.5 643.3L650.0 623.0L650.5 623.0L651.0 640.2L651.5 645.8L652.0 637.2L652.5 636.5L653.0 645.3L653.5 642.8L654.0 627.6L654.5 623.0L655.0 633.9L655.5 643.1L656.0 644.1L656.5 643.5L657.0 642.1L657.5 638.3L658.0 634.1L658.5 632.4L659.0 633.7L659.5 638.2L660.0 645.4L660.5 648.3L661.0 639.9L661.5 628.2L662.0 627.5L662.5 639.0L663.0 647.9L663.5 642.3L664.0 631.1L664.5 629.2L665.0 634.3L665.5 637.4L666.0 638.3L666.5 640.0L667.0 641.7L667.5 642.9L668.0 641.1L668.5 633.5L669.0 627.3L669.5 632.7L670.0 643.1L670.5 643.3L671.0 635.6L671.5 635.8L672.0 642.0L672.5 639.5L673.0 631.4L673.5 631.8L674.0 640.9L674.5 645.6L675.0 638.9L675.5 630.6L676.0 632.8L676.5 639.9L677.0 642.7L677.5 641.9L678.0 636.5L678.5 629.5L679.0 632.1L679.5 640.7L680.0 642.6L680.5 639.7L681.0 638.0L681.5 636.5L682.0 636.7L682.5 638.5L683.0 637.9L683.5 637.3L684.0 638.4L684.5 636.9L685.0 634.9L685.5 636.9L686.0 638.9L686.5 638.2L687.0 636.7L687.5 635.4L688.0 636.4L688.5 640.9L689.0 642.3L689.5 637.1L690.0 633.4L690.5 635.1L691.0 637.9L691.5 637.7L692.0 635.9L692.5 637.4L693.0 641.2L693.5 640.7L694.0 636.7L694.5 636.0L695.0 638.8L695.5 639.9L696.0 637.6L696.5 635.7L697.0 636.8L697.5 638.3L698.0 636.7L698.5 633.3L699.0 633.6L699.5 638.6L700.0 642.3L700.5 641.3L701.0 637.6L701.5 634.5L702.0 634.6L702.5 637.6L703.0 639.5L703.5 637.3L704.0 635.4L704.5 638.6L705.0 641.7L705.5 639.5L706.0 636.9L706.5 636.4L707.0 634.7L707.5 634.4L708.0 638.4L708.5 640.7L709.0 637.0L709.5 633.5L710.0 636.4L710.5 641.2L711.0 641.4L711.5 638.1L712.0 635.7L712.5 636.4L713.0 638.9L713.5 639.3L714.0 636.4L714.5 634.1L715.0 634.7L715.5 637.3L716.0 640.3L716.5 640.6L717.0 637.5L717.5 635.8L718.0 636.8L718.5 637.1L719.0 636.9L719.5 637.3L720.0 637.9L720.5 638.4L721.0 637.8L721.5 635.7L722.0 635.9L722.5 639.6L723.0 641.3L723.5 638.4L724.0 635.9L724.5 636.5L725.0 637.5L725.5 637.6L726.0 637.5L726.5 637.2L727.0 637.3L727.5 638.8L728.0 638.9L728.5 636.0L729.0 634.8L729.5 638.2L730.0 640.7L730.5 638.6L731.0 635.6L731.5 635.4L732.0 636.8L732.5 637.2L733.0 637.5L733.5 638.2L734.0 637.8L734.5 638.0L735.0 639.7L735.5 639.7L736.0 637.3L736.5 634.8L737.0 634.6L737.5 637.1L738.0 638.9L738.5 637.7L739.0 636.9L739.5 638.6L740.0 638.8L740.5 636.0L741.0 634.7L741.5 636.9L742.0 639.6L742.5 639.6L743.0 637.9L743.5 637.0L744.0 637.3L744.5 637.6L745.0 638.2L745.5 638.3L746.0 636.7L746.5 635.5L747.0 636.6L747.5 638.2L748.0 638.0L748.5 637.3L749.0 637.4L749.5 637.9L750.0 638.3L750.5 638.0L751.0 637.0L751.5 636.5L752.0 637.7L752.5 638.5L753.0 637.1L753.5 635.9L754.0 637.6L754.5 640.1L755.0 639.5L755.5 636.2L756.0 634.7L756.5 636.3L757.0 638.2L757.5 638.8L758.0 638.3L758.5 637.5L759.0 637.0L759.5 637.2L760.0 637.6L760.5 638.1L761.0 638.5L761.5 638.2L762.0 636.7L762.5 635.6L763.0 636.4L763.5 638.0L764.0 638.5L764.5 637.8L765.0 636.9L765.5 637.1L766.0 637.7L766.5 637.5L767.0 637.4L767.5 637.9L768.0 638.3L768.5 638.2L769.0 637.8L769.5 637.1L770.0 636.8L770.5 636.9L771.0 636.7L771.5 636.5L772.0 636.9L772.5 637.7L773.0 638.6L773.5 638.6L774.0 638.0L774.5 638.1L775.0 637.9L775.5 636.9L776.0 636.7L776.5 637.7L777.0 638.0L777.5 637.6L778.0 637.2L778.5 637.5L779.0 638.2L779.5 637.8L780.0 636.7L780.5 637.0L781.0 638.4L781.5 638.6L782.0 637.5L782.5 636.7L783.0 637.0L783.5 637.2L784.0 636.8L784.5 637.2L785.0 638.3L785.5 638.3L786.0 637.5L786.5 636.8L787.0 636.7L787.5 637.7L788.0 638.6L788.5 638.0L789.0 637.0L789.5 637.5L790.0 638.5L790.5 638.0L791.0 636.7L791.5 636.3L792.0 637.1L792.5 637.7L793.0 637.4L793.5 637.5L794.0 638.2L794.5 638.4L795.0 637.7L795.5 637.1L796.0 637.3L796.5 637.5L797.0 637.2L797.5 636.9L798.0 637.2L798.5 637.4L799.0 637.4L799.5 637.6L800.0 638.0L800.5 638.1L801.0 638.2L801.5 638.5L802.0 638.5L802.5 637.7L803.0 636.9L803.5 636.7L804.0 636.6L804.5 636.5L805.0 636.9L805.5 637.9L806.0 638.4L806.5 637.9L807.0 637.4L807.5 637.7L808.0 637.9L808.5 637.4L809.0 636.9L809.5 637.2L810.0 637.9L810.5 638.0L811.0 637.5L811.5 637.1L812.0 636.9L812.5 637.3L813.0 637.8L813.5 637.8L814.0 637.1L814.5 636.8L815.0 637.0L815.5 637.5L816.0 637.9L816.5 638.1L817.0 638.1L817.5 637.9L818.0 637.3L818.5 636.8L819.0 637.0L819.5 637.7L820.0 638.2L820.5 637.9L821.0 637.1L821.5 637.0L822.0 637.3L822.5 637.4L823.0 637.6L823.5 638.4L824.0 638.3L824.5 636.9L825.0 636.6L825.5 638.0L826.0 638.6L826.5 637.6L827.0 636.6L827.5 636.8L828.0 637.5L828.5 637.4L829.0 637.0L829.5 637.2L830.0 637.8L830.5 637.8L831.0 637.6L831.5 637.3L832.0 637.1L832.5 637.4L833.0 638.2L833.5 638.6L834.0 638.2L834.5 637.5L835.0 637.2L835.5 637.1L836.0 637.1L836.5 637.2L837.0 637.3L837.5 637.2L838.0 637.4L838.5 637.8L839.0 638.0L839.5 637.6L840.0 636.9L840.5 636.7L841.0 637.2L841.5 637.6L842.0 637.5L842.5 637.6L843.0 638.1L843.5 638.2L844.0 637.6L844.5 637.3L845.0 637.8L845.5 638.1L846.0 637.5L846.5 636.9L847.0 636.6L847.5 636.6L848.0 637.1L848.5 637.7L849.0 637.7L849.5 637.3L850.0 637.4L850.5 637.9L851.0 638.0L851.5 637.8L852.0 637.6L852.5 637.6L853.0 637.8L853.5 638.1L854.0 638.1L854.5 637.5L855.0 636.8L855.5 636.4L856.0 636.6L856.5 637.3L857.0 637.9L857.5 638.1L858.0 638.0L858.5 637.8L859.0 637.6L859.5 637.3L860.0 637.0L860.5 636.6L861.0 636.6L861.5 637.1L862.0 637.8L862.5 638.3L863.0 638.6L863.5 638.5L864.0 638.0L864.5 637.7L865.0 637.5L865.5 637.1L866.0 636.7L866.5 636.5L867.0 636.7L867.5 637.3L868.0 638.0L868.5 638.2L869.0 637.9L869.5 637.7L870.0 637.7L870.5 637.8L871.0 637.7L871.5 637.6L872.0 637.2L872.5 637.0L873.0 637.0L873.5 637.1L874.0 637.2L874.5 637.3L875.0 637.5L875.5 637.8L876.0 638.2L876.5 638.2L877.0 637.9L877.5 637.3L878.0 636.8L878.5 636.6L879.0 636.6L879.5 636.7L880.0 637.1L880.5 637.8L881.0 638.3L881.5 638.3L882.0 638.0L882.5 637.7L883.0 637.5L883.5 637.6L884.0 637.9L884.5 637.9L885.0 637.7L885.5 637.4L886.0 637.0L886.5 637.0L887.0 637.4L887.5 637.7L888.0 637.7L888.5 637.6L889.0 637.6L889.5 637.5L890.0 637.3L890.5 637.0L891.0 636.9L891.5 637.2L892.0 637.5L892.5 637.7L893.0 637.7L893.5 637.7L894.0 637.7L894.5 637.7L895.0 637.5L895.5 637.3L896.0 637.4L896.5 637.6L897.0 637.8L897.5 637.9L898.0 637.8L898.5 637.4L899.0 637.4L899.5 637.7L900.0 637.7L900.5 637.5L901.0 637.4L901.5 637.4L902.0 637.4L902.5 637.4L903.0 637.4L903.5 637.4L904.0 637.4L904.5 637.5L905.0 637.5L905.5 637.3L906.0 637.3L906.5 637.5L907.0 637.7L907.5 637.6L908.0 637.6L908.5 637.7L909.0 637.5L909.5 637.1L910.0 637.1L910.5 637.4L911.0 637.5L911.5 637.7L912.0 637.9L912.5 637.8L913.0 637.2L913.5 636.9L914.0 637.2L914.5 637.5L915.0 637.8L915.5 638.3L916.0 638.4L916.5 638.0L917.0 637.6L917.5 637.3L918.0 637.2L918.5 637.1L919.0 636.9L919.5 636.9L920.0 637.3L920.5 637.9L921.0 638.0L921.5 637.6L922.0 637.3L922.5 637.4L923.0 637.6L923.5 637.8L924.0 637.9L924.5 637.7L925.0 637.4L925.5 637.3L926.0 637.2L926.5 637.1L927.0 637.3L927.5 637.6L928.0 637.7L928.5 637.5L929.0 637.4L929.5 637.4L930.0 637.3L930.5 637.4L931.0 637.8L931.5 638.2L932.0 638.3L932.5 638.0L933.0 637.2L933.5 636.3L934.0 636.2L934.5 636.9L935.0 637.4L935.5 637.7L936.0 638.0L936.5 638.0L937.0 637.7L937.5 637.5L938.0 637.5L938.5 637.6L939.0 637.6L939.5 637.5L940.0 637.5L940.5 637.6L941.0 637.7L941.5 637.7L942.0 637.4L942.5 637.0L943.0 637.0L943.5 637.2L944.0 637.3L944.5 637.5L945.0 637.9L945.5 638.2L946.0 637.9L946.5 637.4L947.0 637.1L947.5 636.9L948.0 636.8L948.5 637.2L949.0 637.7L949.5 638.1L950.0 637.8L950.5 637.4L951.0 637.2L951.5 637.4L952.0 637.7L952.5 637.8L953.0 637.6L953.5 637.5L954.0 637.5L954.5 637.6L955.0 637.6L955.5 637.6L956.0 637.6L956.5 637.6L957.0 637.7L957.5 637.5L958.0 637.0L958.5 636.8L959.0 637.3L959.5 637.7L960.0 637.5L960.5 637.3L961.0 637.6L961.5 638.0L962.0 637.9L962.5 637.5L963.0 637.4L963.5 637.5L964.0 637.5L964.5 637.3L965.0 637.1L965.5 637.2L966.0 637.5L966.5 637.5L967.0 637.5L967.5 637.9L968.0 638.3L968.5 638.0L969.0 637.4L969.5 637.2L970.0 637.3L970.5 637.4L971.0 637.4L971.5 637.5L972.0 637.6L972.5 637.4L973.0 637.1L973.5 637.1L974.0 637.5L974.5 637.8L975.0 637.8L975.5 637.8L976.0 637.9L976.5 637.7L977.0 637.4L977.5 637.1L978.0 637.2L978.5 637.5L979.0 637.8L979.5 637.7L980.0 637.5L980.5 637.2L981.0 637.1L981.5 637.3L982.0 637.5L982.5 637.6L983.0 637.5L983.5 637.4L984.0 637.5L984.5 637.4L985.0 637.3L985.5 637.4L986.0 637.6L986.5 637.9L987.0 638.0L987.5 637.9L988.0 637.7L988.5 637.4L989.0 637.0L989.5 636.9L990.0 636.8L990.5 636.9L991.0 637.1L991.5 637.3L992.0 637.6L992.5 637.9L993.0 638.2L993.5 638.1L994.0 637.7L994.5 637.4L995.0 637.3L995.5 637.4L996.0 637.6L996.5 637.6L997.0 637.6L997.5 637.5L998.0 637.5L998.5 637.3L999.0 636.9L999.5 637.0L1000.0 637.5L1000.5 637.9L1001.0 637.9L1001.5 637.8L1002.0 637.8L1002.5 637.7L1003.0 637.5L1003.5 637.3L1004.0 637.4L1004.5 637.4L1005.0 637.3L1005.5 637.4L1006.0 637.5L1006.5 637.6L1007.0 637.6L1007.5 637.6L1008.0 637.7L1008.5 637.7L1009.0 637.7L1009.5 637.7L1010.0 637.6L1010.5 637.4L1011.0 637.5L1011.5 637.6L1012.0 637.5L1012.5 637.2L1013.0 637.0L1013.5 637.2L1014.0 637.4L1014.5 637.3L1015.0 637.4L1015.5 637.8L1016.0 638.0L1016.5 637.9L1017.0 637.6L1017.5 637.3L1018.0 637.3L1018.5 637.5L1019.0 637.7L1019.5 637.8L1020.0 637.8L1020.5 637.9L1021.0 637.8L1021.5 637.5L1022.0 637.2L1022.5 637.0L1023.0 637.0L1023.5 637.3L1024.0 637.5L1024.5 637.5L1025.0 637.6L1025.5 637.8L1026.0 637.8L1026.5 637.6L1027.0 637.5L1027.5 637.5L1028.0 637.4L1028.5 637.3L1029.0 637.3L1029.5 637.5L1030.0 637.7L1030.5 637.8L1031.0 637.7L1031.5 637.7L1032.0 637.6L1032.5 637.5L1033.0 637.4L1033.5 637.3L1034.0 637.2L1034.5 637.1L1035.0 637.2L1035.5 637.5L1036.0 637.8L1036.5 637.7L1037.0 637.5L1037.5 637.4L1038.0 637.7L1038.5 638.1L1039.0 638.2L1039.5 637.8L1040.0 637.4L1040.5 637.2L1041.0 637.1L1041.5 636.9L1042.0 636.9L1042.5 637.3L1043.0 637.7L1043.5 638.0L1044.0 638.1L1044.5 637.9L1045.0 637.5L1045.5 637.3L1046.0 637.2L1046.5 637.1L1047.0 637.2L1047.5 637.5L1048.0 637.9L1048.5 638.1L1049.0 637.9L1049.5 637.5L1050.0 637.1L1050.5 636.9L1051.0 636.9L1051.5 637.1L1052.0 637.6L1052.5 638.0L1053.0 638.0L1053.5 637.8L1054.0 637.6L1054.5 637.3L1055.0 637.2L1055.5 637.4L1056.0 637.6L1056.5 637.8L1057.0 637.8L1057.5 637.7L1058.0 637.5L1058.5 637.4L1059.0 637.4L1059.5 637.6L1060.0 637.6L1060.5 637.6L1061.0 637.5L1061.5 637.3L1062.0 637.2L1062.5 637.1L1063.0 637.2L1063.5 637.5L1064.0 637.8L1064.5 638.0L1065.0 638.1L1065.5 637.9L1066.0 637.6L1066.5 637.4L1067.0 637.3L1067.5 637.4L1068.0 637.3L1068.5 637.2L1069.0 637.2L1069.5 637.1L1070.0 637.2L1070.5 637.4L1071.0 637.7L1071.5 638.0L1072.0 638.1L1072.5 637.9L1073.0 637.6L1073.5 637.6L1074.0 637.6L1074.5 637.4L1075.0 637.2L1075.5 637.3L1076.0 637.5L1076.5 637.6L1077.0 637.6L1077.5 637.5L1078.0 637.3L1078.5 637.3L1079.0 637.5L1079.5 637.7L1080.0 637.7L1080.5 637.6L1081.0 637.6L1081.5 637.7L1082.0 637.6L1082.5 637.5L1083.0 637.3L1083.5 637.3L1084.0 637.4L1084.5 637.5L1085.0 637.4L1085.5 637.4L1086.0 637.4L1086.5 637.5L1087.0 637.7L1087.5 637.9L1088.0 637.9L1088.5 637.6L1089.0 637.2L1089.5 636.9L1090.0 637.1L1090.5 637.3L1091.0 637.5L1091.5 637.6L1092.0 637.6L1092.5 637.6L1093.0 637.4L1093.5 637.3L1094.0 637.3L1094.5 637.5L1095.0 637.4L1095.5 637.3L1096.0 637.5L1096.5 637.6L1097.0 637.5L1097.5 637.4L1098.0 637.5L1098.5 637.7L1099.0 637.7L1099.5 637.5L1100.0 637.3L1100.5 637.3L1101.0 637.5L1101.5 637.6L1102.0 637.6L1102.5 637.6L1103.0 637.5L1103.5 637.5L1104.0 637.5L1104.5 637.6L1105.0 637.7L1105.5 637.7L1106.0 637.5L1106.5 637.2L1107.0 637.2L1107.5 637.5L1108.0 637.7L1108.5 637.7L1109.0 637.5L1109.5 637.2L1110.0 637.1L1110.5 637.2L1111.0 637.3L1111.5 637.4L1112.0 637.5" stroke="#7a7a7a" stroke-width="1" fill="none" stroke-linejoin="round"/><g shape-rendering="crispEdges"><rect x="154" y="623" width="37" height="37" fill="#000" fill-opacity=".373"/><rect x="191" y="623" width="229" height="37" fill="#000" fill-opacity=".25"/><rect x="1106" y="623" width="297" height="37" fill="#000" fill-opacity=".373"/><path d="M1112 638.5H1403" stroke="#8c8cb4" stroke-opacity=".55"/><path d="M466.5 623V660" stroke="#0000c0" stroke-width="1"/><path d="M470.5 623V660" stroke="#000" stroke-width="1"/><path d="M471.5 623V660" stroke="#00a000" stroke-width="1"/><path d="M647.5 623V660" stroke="#0000c0" stroke-width="1"/></g><text transform="translate(468.2 657.8) scale(.84 1)" style="font-size:15.200px" fill="#0000c0">P</text><text transform="translate(649.2 657.8) scale(.84 1)" style="font-size:15.200px" fill="#0000c0">S</text><g shape-rendering="crispEdges"><rect x="420" y="650" width="686" height="10" fill="rgb(0,100,0)" fill-opacity="0.44"/><rect x="1106" y="650" width="14" height="10" fill="#000" fill-opacity=".22"/></g><text x="158" y="640.1" text-anchor="start" fill="#232323" >amax: 6.8 M</text><text x="158" y="655.4" text-anchor="start" fill="#232323" >mean: -5.4 k</text><text x="472.5" y="638.8" text-anchor="start" fill="#111" style="letter-spacing:-.25px">MLv: 4.43</text><text x="473.5" y="638.8" text-anchor="start" fill="#14a014" style="letter-spacing:-.25px">MLv: 4.25</text><g shape-rendering="crispEdges"><rect x="154" y="662" width="1249" height="37" fill="#f6f6f6"/><path d="M190.5 662V699" stroke="#000" stroke-opacity=".15" stroke-dasharray="4 3"/><path d="M328.5 662V699" stroke="#000" stroke-opacity=".15" stroke-dasharray="4 3"/><path d="M466.5 662V699" stroke="#000" stroke-opacity=".15" stroke-dasharray="4 3"/><path d="M604.5 662V699" stroke="#000" stroke-opacity=".15" stroke-dasharray="4 3"/><path d="M742.5 662V699" stroke="#000" stroke-opacity=".15" stroke-dasharray="4 3"/><path d="M880.5 662V699" stroke="#000" stroke-opacity=".15" stroke-dasharray="4 3"/><path d="M1018.5 662V699" stroke="#000" stroke-opacity=".15" stroke-dasharray="4 3"/><path d="M1156.5 662V699" stroke="#000" stroke-opacity=".15" stroke-dasharray="4 3"/><path d="M1294.5 662V699" stroke="#000" stroke-opacity=".15" stroke-dasharray="4 3"/><path d="M154 697.5H1403" stroke="#aaaacc" stroke-opacity=".3"/></g><path d="M154.0 697.0L154.5 696.9L155.0 696.8L155.5 696.9L156.0 697.0L156.5 697.2L157.0 697.2L157.5 697.0L158.0 696.8L158.5 696.8L159.0 697.0L159.5 697.2L160.0 697.2L160.5 697.0L161.0 696.9L161.5 697.0L162.0 697.0L162.5 697.0L163.0 697.0L163.5 697.0L164.0 697.0L164.5 697.0L165.0 697.0L165.5 697.0L166.0 697.0L166.5 697.1L167.0 697.1L167.5 696.9L168.0 696.9L168.5 697.0L169.0 697.0L169.5 696.9L170.0 696.8L170.5 697.0L171.0 697.2L171.5 697.2L172.0 697.0L172.5 696.9L173.0 697.0L173.5 697.0L174.0 697.0L174.5 697.1L175.0 697.0L175.5 696.8L176.0 696.8L176.5 697.0L177.0 697.2L177.5 697.1L178.0 696.9L178.5 696.8L179.0 697.0L179.5 697.0L180.0 697.0L180.5 697.0L181.0 697.0L181.5 697.0L182.0 697.0L182.5 697.0L183.0 697.0L183.5 697.0L184.0 696.9L184.5 697.0L185.0 697.1L185.5 697.1L186.0 697.0L186.5 697.0L187.0 697.0L187.5 696.9L188.0 696.9L188.5 697.0L189.0 697.2L189.5 697.1L190.0 696.9L190.5 696.9L191.0 697.0L191.5 697.0L192.0 697.0L192.5 697.0L193.0 697.0L193.5 697.1L194.0 697.0L194.5 696.9L195.0 696.9L195.5 697.0L196.0 697.1L196.5 696.9L197.0 696.9L197.5 697.0L198.0 697.0L198.5 697.0L199.0 697.0L199.5 697.1L200.0 697.1L200.5 696.9L201.0 696.9L201.5 697.0L202.0 697.0L202.5 696.9L203.0 697.0L203.5 697.0L204.0 697.0L204.5 697.1L205.0 697.1L205.5 697.0L206.0 696.9L206.5 697.0L207.0 697.0L207.5 697.0L208.0 697.1L208.5 697.1L209.0 697.0L209.5 696.9L210.0 697.1L210.5 697.1L211.0 696.9L211.5 696.9L212.0 697.0L212.5 697.0L213.0 697.0L213.5 697.0L214.0 697.1L214.5 697.1L215.0 697.0L215.5 696.9L216.0 697.0L216.5 697.0L217.0 697.1L217.5 697.1L218.0 697.1L218.5 697.0L219.0 696.8L219.5 696.8L220.0 697.1L220.5 697.2L221.0 697.2L221.5 697.0L222.0 696.9L222.5 696.9L223.0 696.8L223.5 696.9L224.0 697.1L224.5 697.2L225.0 697.1L225.5 697.0L226.0 696.9L226.5 696.9L227.0 696.9L227.5 697.1L228.0 697.1L228.5 697.1L229.0 697.0L229.5 697.0L230.0 697.0L230.5 697.0L231.0 697.0L231.5 697.0L232.0 696.9L232.5 697.0L233.0 697.0L233.5 697.0L234.0 697.0L234.5 697.0L235.0 696.9L235.5 697.0L236.0 697.1L236.5 697.1L237.0 697.1L237.5 697.1L238.0 697.0L238.5 696.8L239.0 696.8L239.5 697.0L240.0 697.1L240.5 697.1L241.0 696.9L241.5 696.9L242.0 697.1L242.5 697.1L243.0 697.0L243.5 696.9L244.0 696.9L244.5 697.0L245.0 697.1L245.5 697.1L246.0 697.0L246.5 696.9L247.0 696.9L247.5 696.9L248.0 697.1L248.5 697.1L249.0 697.0L249.5 696.9L250.0 697.0L250.5 697.1L251.0 696.9L251.5 696.9L252.0 697.1L252.5 697.1L253.0 697.1L253.5 697.0L254.0 696.9L254.5 696.9L255.0 696.9L255.5 696.9L256.0 697.0L256.5 697.1L257.0 697.1L257.5 696.9L258.0 696.9L258.5 696.9L259.0 697.0L259.5 697.1L260.0 697.1L260.5 697.1L261.0 696.9L261.5 696.9L262.0 697.0L262.5 697.0L263.0 697.1L263.5 697.1L264.0 697.0L264.5 696.8L265.0 696.9L265.5 697.1L266.0 697.2L266.5 697.0L267.0 696.9L267.5 697.0L268.0 697.1L268.5 697.1L269.0 697.0L269.5 696.9L270.0 696.9L270.5 697.0L271.0 697.0L271.5 697.0L272.0 697.1L272.5 697.2L273.0 697.0L273.5 696.8L274.0 696.8L274.5 697.0L275.0 697.2L275.5 697.1L276.0 697.0L276.5 697.0L277.0 697.0L277.5 697.0L278.0 697.0L278.5 697.0L279.0 697.0L279.5 697.1L280.0 697.0L280.5 696.9L281.0 696.8L281.5 696.8L282.0 697.0L282.5 697.3L283.0 697.2L283.5 697.0L284.0 696.8L284.5 696.8L285.0 697.0L285.5 697.2L286.0 697.1L286.5 697.0L287.0 696.8L287.5 696.8L288.0 697.0L288.5 697.1L289.0 697.3L289.5 697.3L290.0 697.0L290.5 696.7L291.0 696.8L291.5 696.9L292.0 697.0L292.5 697.1L293.0 697.0L293.5 697.0L294.0 697.1L294.5 697.0L295.0 696.9L295.5 697.0L296.0 697.0L296.5 697.0L297.0 696.9L297.5 697.0L298.0 697.1L298.5 697.0L299.0 696.9L299.5 697.0L300.0 697.0L300.5 697.1L301.0 697.1L301.5 697.0L302.0 696.9L302.5 697.0L303.0 697.0L303.5 697.0L304.0 696.9L304.5 696.9L305.0 697.1L305.5 697.1L306.0 697.1L306.5 697.0L307.0 696.9L307.5 696.9L308.0 697.0L308.5 697.1L309.0 697.1L309.5 697.0L310.0 696.9L310.5 696.9L311.0 697.0L311.5 697.1L312.0 697.0L312.5 697.0L313.0 697.1L313.5 697.1L314.0 697.0L314.5 696.8L315.0 696.7L315.5 697.0L316.0 697.3L316.5 697.2L317.0 697.0L317.5 697.0L318.0 697.0L318.5 696.9L319.0 697.1L319.5 697.2L320.0 697.0L320.5 696.8L321.0 696.9L321.5 697.1L322.0 697.0L322.5 696.9L323.0 697.1L323.5 697.3L324.0 697.1L324.5 696.8L325.0 696.8L325.5 697.1L326.0 697.3L326.5 697.1L327.0 696.7L327.5 696.8L328.0 697.0L328.5 697.1L329.0 697.0L329.5 697.0L330.0 697.0L330.5 697.0L331.0 696.9L331.5 697.0L332.0 697.0L332.5 697.1L333.0 697.1L333.5 697.0L334.0 696.9L334.5 696.9L335.0 696.9L335.5 697.1L336.0 697.3L336.5 697.2L337.0 696.9L337.5 696.7L338.0 696.9L338.5 697.1L339.0 697.2L339.5 697.0L340.0 696.8L340.5 697.0L341.0 697.2L341.5 697.2L342.0 697.0L342.5 696.9L343.0 696.9L343.5 697.0L344.0 697.0L344.5 696.9L345.0 697.0L345.5 697.2L346.0 697.2L346.5 697.0L347.0 696.8L347.5 696.8L348.0 697.0L348.5 697.2L349.0 697.1L349.5 696.9L350.0 696.9L350.5 696.9L351.0 697.0L351.5 697.1L352.0 697.1L352.5 697.1L353.0 697.0L353.5 696.9L354.0 696.9L354.5 697.0L355.0 697.0L355.5 696.9L356.0 697.0L356.5 697.2L357.0 697.1L357.5 696.9L358.0 696.8L358.5 696.9L359.0 697.0L359.5 697.1L360.0 697.1L360.5 697.0L361.0 696.9L361.5 697.0L362.0 697.1L362.5 697.1L363.0 697.1L363.5 696.9L364.0 696.8L364.5 696.9L365.0 697.1L365.5 697.1L366.0 697.2L366.5 697.1L367.0 696.9L367.5 696.8L368.0 696.9L368.5 697.1L369.0 697.1L369.5 697.0L370.0 696.9L370.5 697.0L371.0 697.1L371.5 697.0L372.0 696.9L372.5 697.0L373.0 697.0L373.5 696.9L374.0 697.0L374.5 697.1L375.0 697.1L375.5 697.0L376.0 696.9L376.5 697.0L377.0 697.1L377.5 697.0L378.0 696.9L378.5 696.9L379.0 697.0L379.5 697.1L380.0 697.1L380.5 696.9L381.0 696.8L381.5 697.0L382.0 697.1L382.5 697.0L383.0 697.1L383.5 697.2L384.0 697.2L384.5 696.9L385.0 696.7L385.5 696.9L386.0 697.1L386.5 697.1L387.0 697.1L387.5 697.1L388.0 697.0L388.5 696.9L389.0 696.9L389.5 696.9L390.0 697.0L390.5 697.1L391.0 697.2L391.5 697.1L392.0 696.9L392.5 696.8L393.0 696.9L393.5 697.0L394.0 697.1L394.5 697.1L395.0 697.0L395.5 696.9L396.0 696.8L396.5 697.0L397.0 697.3L397.5 697.2L398.0 696.9L398.5 696.9L399.0 697.0L399.5 697.0L400.0 697.0L400.5 697.1L401.0 697.1L401.5 696.9L402.0 696.8L402.5 696.9L403.0 697.1L403.5 697.2L404.0 697.0L404.5 696.8L405.0 697.0L405.5 697.1L406.0 697.1L406.5 696.9L407.0 696.9L407.5 697.0L408.0 696.9L408.5 696.8L409.0 696.9L409.5 697.1L410.0 697.2L410.5 697.1L411.0 696.8L411.5 696.8L412.0 697.0L412.5 697.1L413.0 697.1L413.5 697.2L414.0 697.1L414.5 697.0L415.0 696.8L415.5 696.8L416.0 697.0L416.5 697.2L417.0 697.1L417.5 696.9L418.0 696.8L418.5 697.0L419.0 697.3L419.5 697.1L420.0 696.7L420.5 696.7L421.0 697.2L421.5 697.4L422.0 697.1L422.5 696.9L423.0 696.9L423.5 697.0L424.0 697.0L424.5 697.0L425.0 697.0L425.5 697.0L426.0 696.9L426.5 697.0L427.0 697.1L427.5 697.1L428.0 697.0L428.5 697.0L429.0 697.0L429.5 696.9L430.0 696.9L430.5 697.2L431.0 697.3L431.5 697.1L432.0 696.8L432.5 696.8L433.0 697.0L433.5 697.2L434.0 697.1L434.5 697.0L435.0 697.0L435.5 696.9L436.0 696.9L436.5 696.9L437.0 697.0L437.5 697.0L438.0 697.1L438.5 697.1L439.0 697.1L439.5 697.0L440.0 696.9L440.5 696.8L441.0 696.9L441.5 697.1L442.0 697.1L442.5 696.9L443.0 697.0L443.5 697.2L444.0 697.1L444.5 696.8L445.0 696.8L445.5 697.1L446.0 697.2L446.5 697.1L447.0 696.9L447.5 696.7L448.0 696.9L448.5 697.2L449.0 697.2L449.5 697.1L450.0 696.9L450.5 696.9L451.0 697.0L451.5 697.1L452.0 697.0L452.5 696.8L453.0 697.0L453.5 697.2L454.0 697.1L454.5 697.0L455.0 697.0L455.5 696.9L456.0 696.8L456.5 697.0L457.0 697.2L457.5 697.1L458.0 697.0L458.5 697.0L459.0 697.0L459.5 697.0L460.0 696.9L460.5 696.9L461.0 697.1L461.5 697.1L462.0 697.1L462.5 697.0L463.0 697.0L463.5 696.9L464.0 696.9L464.5 696.9L465.0 697.0L465.5 697.1L466.0 697.1L466.5 696.9L467.0 696.9L467.5 697.0L468.0 697.1L468.5 697.0L469.0 696.9L469.5 696.9L470.0 697.1L470.5 697.2L471.0 697.0L471.5 696.9L472.0 696.9L472.5 696.9L473.0 697.0L473.5 697.1L474.0 697.3L474.5 697.1L475.0 696.8L475.5 696.7L476.0 697.0L476.5 697.2L477.0 697.1L477.5 697.0L478.0 697.0L478.5 697.0L479.0 696.9L479.5 696.9L480.0 697.1L480.5 697.1L481.0 697.0L481.5 697.0L482.0 697.1L482.5 697.0L483.0 696.8L483.5 696.8L484.0 697.0L484.5 697.2L485.0 697.1L485.5 697.0L486.0 696.9L486.5 697.0L487.0 697.0L487.5 697.0L488.0 696.9L488.5 697.0L489.0 697.1L489.5 697.1L490.0 696.9L490.5 696.9L491.0 697.0L491.5 697.1L492.0 697.1L492.5 697.0L493.0 697.0L493.5 696.9L494.0 697.0L494.5 697.1L495.0 697.1L495.5 697.0L496.0 697.0L496.5 696.9L497.0 697.0L497.5 697.0L498.0 696.8L498.5 696.9L499.0 697.2L499.5 697.3L500.0 697.1L500.5 696.8L501.0 696.7L501.5 697.0L502.0 697.2L502.5 697.2L503.0 696.9L503.5 696.9L504.0 696.9L504.5 697.0L505.0 697.0L505.5 697.1L506.0 697.1L506.5 697.1L507.0 696.9L507.5 696.9L508.0 696.9L508.5 697.0L509.0 697.2L509.5 697.3L510.0 697.1L510.5 696.8L511.0 696.7L511.5 697.0L512.0 697.3L512.5 697.2L513.0 696.9L513.5 696.8L514.0 696.9L514.5 697.0L515.0 697.1L515.5 697.0L516.0 697.0L516.5 697.1L517.0 697.2L517.5 697.0L518.0 696.7L518.5 696.8L519.0 697.0L519.5 697.2L520.0 697.2L520.5 697.0L521.0 696.9L521.5 697.0L522.0 696.9L522.5 696.8L523.0 697.0L523.5 697.3L524.0 697.2L524.5 696.9L525.0 696.7L525.5 696.9L526.0 697.0L526.5 697.0L527.0 697.0L527.5 697.1L528.0 697.0L528.5 696.9L529.0 696.9L529.5 697.1L530.0 697.2L530.5 697.0L531.0 696.9L531.5 697.0L532.0 697.0L532.5 696.9L533.0 696.9L533.5 697.0L534.0 697.2L534.5 697.1L535.0 696.9L535.5 696.9L536.0 697.0L536.5 697.1L537.0 696.9L537.5 696.9L538.0 697.1L538.5 697.1L539.0 697.0L539.5 696.8L540.0 696.9L540.5 697.1L541.0 697.1L541.5 697.0L542.0 697.0L542.5 696.9L543.0 696.8L543.5 696.8L544.0 697.0L544.5 697.1L545.0 697.2L545.5 697.1L546.0 696.9L546.5 696.9L547.0 697.0L547.5 697.1L548.0 697.1L548.5 697.1L549.0 697.0L549.5 697.0L550.0 697.0L550.5 697.0L551.0 697.1L551.5 697.0L552.0 696.9L552.5 696.9L553.0 696.9L553.5 696.9L554.0 696.9L554.5 697.1L555.0 697.1L555.5 697.0L556.0 697.1L556.5 697.2L557.0 697.0L557.5 696.9L558.0 696.9L558.5 696.9L559.0 696.9L559.5 697.0L560.0 697.2L560.5 697.2L561.0 697.0L561.5 696.8L562.0 696.9L562.5 697.1L563.0 697.1L563.5 697.1L564.0 697.1L564.5 697.0L565.0 696.8L565.5 697.0L566.0 697.2L566.5 697.1L567.0 696.8L567.5 696.9L568.0 697.2L568.5 697.1L569.0 696.9L569.5 697.0L570.0 697.3L570.5 697.0L571.0 696.8L571.5 696.8L572.0 697.0L572.5 697.1L573.0 697.1L573.5 697.2L574.0 697.0L574.5 696.7L575.0 696.8L575.5 697.1L576.0 697.1L576.5 696.9L577.0 697.0L577.5 697.2L578.0 697.1L578.5 696.9L579.0 696.7L579.5 697.0L580.0 697.2L580.5 697.1L581.0 697.0L581.5 697.1L582.0 697.1L582.5 697.0L583.0 696.9L583.5 696.9L584.0 697.0L584.5 697.0L585.0 697.0L585.5 697.1L586.0 697.1L586.5 696.9L587.0 696.9L587.5 697.0L588.0 697.0L588.5 696.9L589.0 696.9L589.5 697.0L590.0 697.0L590.5 697.2L591.0 697.3L591.5 697.0L592.0 696.7L592.5 696.9L593.0 697.1L593.5 696.9L594.0 696.9L594.5 697.0L595.0 697.1L595.5 697.1L596.0 697.1L596.5 697.1L597.0 697.1L597.5 697.0L598.0 696.9L598.5 697.0L599.0 696.8L599.5 696.7L600.0 696.9L600.5 697.3L601.0 697.3L601.5 697.0L602.0 696.8L602.5 696.9L603.0 696.9L603.5 696.9L604.0 697.0L604.5 697.1L605.0 697.0L605.5 696.9L606.0 696.9L606.5 697.2L607.0 697.2L607.5 697.0L608.0 696.9L608.5 696.9L609.0 697.0L609.5 697.0L610.0 697.0L610.5 697.1L611.0 697.0L611.5 696.9L612.0 697.0L612.5 697.2L613.0 697.1L613.5 696.9L614.0 696.8L614.5 696.8L615.0 697.0L615.5 697.2L616.0 697.1L616.5 696.9L617.0 696.9L617.5 697.1L618.0 697.0L618.5 697.0L619.0 697.1L619.5 697.0L620.0 696.8L620.5 696.9L621.0 697.1L621.5 697.2L622.0 697.0L622.5 696.9L623.0 696.9L623.5 696.9L624.0 697.0L624.5 697.2L625.0 697.1L625.5 697.0L626.0 696.9L626.5 697.0L627.0 697.0L627.5 697.1L628.0 697.1L628.5 696.9L629.0 696.8L629.5 696.9L630.0 697.0L630.5 697.0L631.0 697.0L631.5 697.1L632.0 697.2L632.5 697.2L633.0 697.0L633.5 696.9L634.0 697.0L634.5 697.0L635.0 697.0L635.5 697.0L636.0 697.0L636.5 696.9L637.0 696.9L637.5 697.0L638.0 697.1L638.5 697.0L639.0 697.0L639.5 697.0L640.0 697.0L640.5 697.0L641.0 696.8L641.5 696.8L642.0 696.9L642.5 697.1L643.0 697.2L643.5 697.2L644.0 697.1L644.5 696.9L645.0 696.7L645.5 696.9L646.0 697.2L646.5 697.2L647.0 697.0L647.5 697.0L648.0 697.0L648.5 696.9L649.0 696.9L649.5 697.1L650.0 697.2L650.5 697.0L651.0 696.9L651.5 697.0L652.0 697.1L652.5 697.0L653.0 696.9L653.5 696.9L654.0 696.9L654.5 697.1L655.0 697.2L655.5 697.2L656.0 696.9L656.5 696.8L657.0 696.9L657.5 697.1L658.0 697.2L658.5 697.1L659.0 696.9L659.5 696.9L660.0 696.9L660.5 697.1L661.0 697.2L661.5 697.1L662.0 697.0L662.5 697.2L663.0 697.1L663.5 696.5L664.0 696.4L664.5 697.7L665.0 698.2L665.5 696.5L666.0 695.5L666.5 696.8L667.0 697.8L667.5 697.3L668.0 696.8L668.5 697.1L669.0 697.6L669.5 697.5L670.0 696.6L670.5 696.1L671.0 696.5L671.5 697.5L672.0 698.0L672.5 697.2L673.0 696.2L673.5 696.4L674.0 697.0L674.5 697.4L675.0 698.1L675.5 698.0L676.0 696.4L676.5 695.9L677.0 697.1L677.5 697.9L678.0 697.6L678.5 696.5L679.0 695.4L679.5 695.7L680.0 697.2L680.5 698.3L681.0 697.9L681.5 697.4L682.0 697.5L682.5 697.1L683.0 696.0L683.5 695.8L684.0 697.1L684.5 697.4L685.0 696.0L685.5 696.2L686.0 698.5L686.5 699.0L687.0 696.9L687.5 695.3L688.0 696.3L688.5 697.2L689.0 696.6L689.5 696.7L690.0 697.9L690.5 697.9L691.0 696.6L691.5 696.4L692.0 697.2L692.5 697.1L693.0 696.8L693.5 697.5L694.0 697.6L694.5 696.0L695.0 695.2L695.5 696.3L696.0 697.9L696.5 698.3L697.0 697.5L697.5 696.9L698.0 697.0L698.5 697.1L699.0 696.6L699.5 696.2L700.0 697.1L700.5 698.1L701.0 697.5L701.5 696.3L702.0 696.3L702.5 696.8L703.0 696.9L703.5 697.4L704.0 698.0L704.5 697.1L705.0 696.4L705.5 697.3L706.0 697.6L706.5 696.3L707.0 696.3L707.5 697.3L708.0 697.2L708.5 696.9L709.0 697.6L709.5 697.7L710.0 696.6L710.5 696.4L711.0 697.2L711.5 697.4L712.0 696.5L712.5 696.4L713.0 697.4L713.5 697.8L714.0 697.1L714.5 696.1L715.0 695.9L715.5 697.1L716.0 698.4L716.5 698.6L717.0 697.1L717.5 695.3L718.0 695.3L718.5 696.9L719.0 698.2L719.5 698.4L720.0 697.9L720.5 696.6L721.0 695.8L721.5 696.3L722.0 696.9L722.5 696.9L723.0 696.9L723.5 697.3L724.0 697.3L724.5 696.6L725.0 696.6L725.5 697.7L726.0 697.8L726.5 696.7L727.0 696.3L727.5 697.1L728.0 697.7L728.5 696.9L729.0 695.6L729.5 696.0L730.0 698.1L730.5 699.0L731.0 697.4L731.5 695.9L732.0 696.7L732.5 697.7L733.0 697.4L733.5 697.0L734.0 696.9L734.5 696.3L735.0 696.2L735.5 697.4L736.0 698.3L736.5 697.6L737.0 696.2L737.5 696.1L738.0 697.1L738.5 697.4L739.0 696.5L739.5 696.0L740.0 696.7L740.5 697.5L741.0 697.6L741.5 697.2L742.0 696.4L742.5 696.0L743.0 696.5L743.5 697.5L744.0 698.5L744.5 698.0L745.0 696.2L745.5 695.9L746.0 697.3L746.5 698.2L747.0 697.6L747.5 696.4L748.0 695.8L748.5 696.3L749.0 697.2L749.5 697.4L750.0 697.0L750.5 697.2L751.0 697.9L751.5 697.5L752.0 696.1L752.5 696.0L753.0 697.3L753.5 697.9L754.0 697.6L754.5 697.2L755.0 696.4L755.5 696.0L756.0 696.4L756.5 697.3L757.0 697.7L757.5 697.5L758.0 697.2L758.5 697.1L759.0 696.9L759.5 696.6L760.0 696.6L760.5 696.5L761.0 696.5L761.5 697.0L762.0 697.5L762.5 697.5L763.0 697.2L763.5 697.0L764.0 697.1L764.5 697.0L765.0 697.1L765.5 697.5L766.0 697.3L766.5 696.6L767.0 696.3L767.5 696.9L768.0 697.5L768.5 697.2L769.0 696.9L769.5 696.8L770.0 696.3L770.5 696.6L771.0 697.6L771.5 697.4L772.0 696.2L772.5 696.1L773.0 697.3L773.5 698.6L774.0 698.6L774.5 697.2L775.0 695.8L775.5 695.6L776.0 696.6L776.5 698.0L777.0 698.2L777.5 697.1L778.0 696.4L778.5 696.6L779.0 696.7L779.5 696.7L780.0 696.9L780.5 696.9L781.0 696.8L781.5 697.1L782.0 697.4L782.5 697.0L783.0 696.7L783.5 696.9L784.0 697.1L784.5 697.2L785.0 697.4L785.5 697.3L786.0 696.8L786.5 696.9L787.0 697.3L787.5 697.2L788.0 696.8L788.5 696.8L789.0 697.0L789.5 697.0L790.0 696.7L790.5 696.8L791.0 697.3L791.5 697.5L792.0 696.9L792.5 696.6L793.0 696.7L793.5 696.9L794.0 697.2L794.5 697.7L795.0 697.6L795.5 697.0L796.0 696.3L796.5 696.3L797.0 697.0L797.5 697.8L798.0 697.8L798.5 697.2L799.0 696.8L799.5 696.5L800.0 696.4L800.5 696.7L801.0 697.0L801.5 697.3L802.0 697.2L802.5 696.9L803.0 696.9L803.5 697.3L804.0 697.5L804.5 697.2L805.0 696.7L805.5 696.4L806.0 696.9L806.5 697.7L807.0 697.6L807.5 696.9L808.0 696.5L808.5 696.7L809.0 696.9L809.5 697.2L810.0 697.3L810.5 697.0L811.0 696.7L811.5 696.8L812.0 697.0L812.5 697.1L813.0 697.1L813.5 696.8L814.0 696.5L814.5 696.5L815.0 696.9L815.5 697.3L816.0 697.2L816.5 697.1L817.0 697.5L817.5 697.9L818.0 697.6L818.5 696.8L819.0 696.1L819.5 696.2L820.0 696.9L820.5 697.4L821.0 697.4L821.5 696.9L822.0 696.6L822.5 696.8L823.0 697.0L823.5 697.1L824.0 697.2L824.5 697.2L825.0 697.2L825.5 697.2L826.0 697.4L826.5 697.2L827.0 696.8L827.5 696.9L828.0 697.1L828.5 697.0L829.0 696.8L829.5 696.8L830.0 697.0L830.5 697.1L831.0 697.1L831.5 696.8L832.0 696.8L832.5 697.0L833.0 697.0L833.5 696.8L834.0 696.8L834.5 696.9L835.0 696.9L835.5 696.8L836.0 696.8L836.5 697.0L837.0 697.3L837.5 697.2L838.0 697.0L838.5 697.1L839.0 697.3L839.5 697.0L840.0 696.7L840.5 696.6L841.0 696.7L841.5 696.9L842.0 697.0L842.5 697.1L843.0 697.0L843.5 697.1L844.0 697.2L844.5 697.3L845.0 697.4L845.5 696.9L846.0 696.3L846.5 696.6L847.0 697.2L847.5 697.3L848.0 696.9L848.5 697.0L849.0 697.4L849.5 697.6L850.0 697.3L850.5 696.5L851.0 696.1L851.5 696.7L852.0 697.4L852.5 697.4L853.0 696.9L853.5 696.9L854.0 697.0L854.5 697.1L855.0 697.3L855.5 697.3L856.0 697.2L856.5 697.1L857.0 696.8L857.5 696.4L858.0 696.2L858.5 696.6L859.0 697.1L859.5 697.4L860.0 697.6L860.5 697.6L861.0 697.2L861.5 696.8L862.0 696.9L862.5 697.2L863.0 697.3L863.5 697.3L864.0 697.1L864.5 696.8L865.0 696.6L865.5 696.7L866.0 696.8L866.5 696.8L867.0 696.7L867.5 696.9L868.0 697.3L868.5 697.2L869.0 697.0L869.5 697.1L870.0 697.0L870.5 696.6L871.0 696.3L871.5 696.6L872.0 697.2L872.5 697.7L873.0 697.9L873.5 697.7L874.0 697.3L874.5 696.8L875.0 696.5L875.5 696.7L876.0 696.8L876.5 696.6L877.0 696.7L877.5 697.3L878.0 697.5L878.5 697.0L879.0 696.5L879.5 696.7L880.0 697.1L880.5 697.5L881.0 697.6L881.5 697.5L882.0 697.3L882.5 697.3L883.0 697.1L883.5 696.7L884.0 696.2L884.5 696.3L885.0 696.8L885.5 697.2L886.0 697.1L886.5 696.7L887.0 696.7L887.5 697.0L888.0 697.3L888.5 697.5L889.0 697.6L889.5 697.4L890.0 697.1L890.5 696.7L891.0 696.4L891.5 696.6L892.0 697.3L892.5 697.7L893.0 697.6L893.5 697.1L894.0 696.7L894.5 696.6L895.0 696.7L895.5 697.1L896.0 697.4L896.5 697.2L897.0 696.8L897.5 696.5L898.0 696.4L898.5 696.4L899.0 696.6L899.5 696.9L900.0 697.2L900.5 697.4L901.0 697.6L901.5 697.5L902.0 697.0L902.5 696.6L903.0 696.3L903.5 696.3L904.0 696.7L904.5 697.1L905.0 697.3L905.5 697.3L906.0 697.3L906.5 697.3L907.0 697.3L907.5 697.4L908.0 697.4L908.5 697.2L909.0 696.8L909.5 696.7L910.0 696.8L910.5 696.7L911.0 696.6L911.5 696.8L912.0 696.9L912.5 696.9L913.0 697.1L913.5 697.3L914.0 697.3L914.5 697.1L915.0 697.0L915.5 696.9L916.0 697.0L916.5 697.1L917.0 697.1L917.5 697.3L918.0 697.6L918.5 697.4L919.0 696.8L919.5 696.4L920.0 696.3L920.5 696.3L921.0 696.6L921.5 697.0L922.0 697.3L922.5 697.7L923.0 697.9L923.5 697.8L924.0 697.3L924.5 696.7L925.0 696.3L925.5 696.3L926.0 696.7L926.5 697.1L927.0 697.2L927.5 697.3L928.0 697.6L928.5 697.7L929.0 697.4L929.5 696.8L930.0 696.3L930.5 696.1L931.0 696.5L931.5 697.3L932.0 697.7L932.5 697.7L933.0 697.6L933.5 697.2L934.0 696.8L934.5 696.7L935.0 696.7L935.5 696.7L936.0 696.6L936.5 696.7L937.0 696.9L937.5 697.2L938.0 697.4L938.5 697.2L939.0 697.2L939.5 697.3L940.0 697.0L940.5 696.3L941.0 696.2L941.5 696.8L942.0 697.3L942.5 697.3L943.0 697.1L943.5 697.0L944.0 697.0L944.5 696.9L945.0 696.9L945.5 696.9L946.0 697.0L946.5 697.1L947.0 697.0L947.5 697.1L948.0 697.2L948.5 697.1L949.0 696.8L949.5 696.6L950.0 696.9L950.5 697.4L951.0 697.6L951.5 697.4L952.0 697.2L952.5 697.1L953.0 697.0L953.5 696.8L954.0 696.6L954.5 696.6L955.0 696.6L955.5 696.6L956.0 696.7L956.5 696.9L957.0 697.1L957.5 697.4L958.0 697.5L958.5 697.3L959.0 696.8L959.5 696.5L960.0 696.7L960.5 696.9L961.0 696.9L961.5 696.7L962.0 696.6L962.5 696.8L963.0 697.2L963.5 697.5L964.0 697.6L964.5 697.6L965.0 697.3L965.5 696.9L966.0 696.7L966.5 696.9L967.0 697.0L967.5 696.9L968.0 696.9L968.5 696.8L969.0 696.7L969.5 696.6L970.0 696.6L970.5 696.7L971.0 697.0L971.5 697.3L972.0 697.6L972.5 697.6L973.0 697.4L973.5 697.1L974.0 696.9L974.5 696.9L975.0 696.8L975.5 696.6L976.0 696.5L976.5 696.6L977.0 696.8L977.5 697.0L978.0 697.4L978.5 697.4L979.0 697.2L979.5 696.9L980.0 696.7L980.5 696.7L981.0 696.8L981.5 697.2L982.0 697.6L982.5 697.6L983.0 697.3L983.5 696.9L984.0 696.8L984.5 696.8L985.0 696.8L985.5 697.0L986.0 697.3L986.5 697.2L987.0 696.9L987.5 696.7L988.0 696.6L988.5 696.8L989.0 697.3L989.5 697.5L990.0 697.3L990.5 697.0L991.0 696.9L991.5 697.0L992.0 697.1L992.5 697.3L993.0 697.3L993.5 697.0L994.0 696.6L994.5 696.4L995.0 696.4L995.5 696.6L996.0 697.1L996.5 697.6L997.0 698.0L997.5 697.8L998.0 697.1L998.5 696.6L999.0 696.7L999.5 696.8L1000.0 696.7L1000.5 696.6L1001.0 696.9L1001.5 697.2L1002.0 697.3L1002.5 697.3L1003.0 697.2L1003.5 697.0L1004.0 696.8L1004.5 696.8L1005.0 696.8L1005.5 696.8L1006.0 697.1L1006.5 697.4L1007.0 697.6L1007.5 697.6L1008.0 697.2L1008.5 696.8L1009.0 696.5L1009.5 696.6L1010.0 696.8L1010.5 696.9L1011.0 697.1L1011.5 697.5L1012.0 697.6L1012.5 697.4L1013.0 697.1L1013.5 696.9L1014.0 696.6L1014.5 696.2L1015.0 696.2L1015.5 696.7L1016.0 697.2L1016.5 697.3L1017.0 697.2L1017.5 697.1L1018.0 697.0L1018.5 697.0L1019.0 697.1L1019.5 697.3L1020.0 697.4L1020.5 697.2L1021.0 696.7L1021.5 696.5L1022.0 696.7L1022.5 697.0L1023.0 697.3L1023.5 697.3L1024.0 697.2L1024.5 697.2L1025.0 697.2L1025.5 697.3L1026.0 697.3L1026.5 696.9L1027.0 696.6L1027.5 696.4L1028.0 696.5L1028.5 696.6L1029.0 696.7L1029.5 696.9L1030.0 697.2L1030.5 697.4L1031.0 697.6L1031.5 697.5L1032.0 697.1L1032.5 696.8L1033.0 696.9L1033.5 697.0L1034.0 697.0L1034.5 697.2L1035.0 697.4L1035.5 697.4L1036.0 697.2L1036.5 697.1L1037.0 697.1L1037.5 697.1L1038.0 696.8L1038.5 696.6L1039.0 696.6L1039.5 696.7L1040.0 696.9L1040.5 697.1L1041.0 697.0L1041.5 696.9L1042.0 696.7L1042.5 696.5L1043.0 696.6L1043.5 696.8L1044.0 697.1L1044.5 697.3L1045.0 697.3L1045.5 697.1L1046.0 697.0L1046.5 696.9L1047.0 697.0L1047.5 697.2L1048.0 697.3L1048.5 697.3L1049.0 696.9L1049.5 696.6L1050.0 696.8L1050.5 697.2L1051.0 697.2L1051.5 696.9L1052.0 696.7L1052.5 696.7L1053.0 696.7L1053.5 696.7L1054.0 696.8L1054.5 697.0L1055.0 697.4L1055.5 697.7L1056.0 697.5L1056.5 697.1L1057.0 696.7L1057.5 696.6L1058.0 696.7L1058.5 697.0L1059.0 697.3L1059.5 697.4L1060.0 697.3L1060.5 697.1L1061.0 696.7L1061.5 696.4L1062.0 696.4L1062.5 696.8L1063.0 697.3L1063.5 697.6L1064.0 697.5L1064.5 697.3L1065.0 697.0L1065.5 696.8L1066.0 696.8L1066.5 697.0L1067.0 697.1L1067.5 697.0L1068.0 696.9L1068.5 697.0L1069.0 697.0L1069.5 697.0L1070.0 697.0L1070.5 696.8L1071.0 696.6L1071.5 696.7L1072.0 696.9L1072.5 697.0L1073.0 697.4L1073.5 697.7L1074.0 697.5L1074.5 697.0L1075.0 696.8L1075.5 696.8L1076.0 696.9L1076.5 696.9L1077.0 696.9L1077.5 696.9L1078.0 696.8L1078.5 696.7L1079.0 697.0L1079.5 697.4L1080.0 697.5L1080.5 697.2L1081.0 697.0L1081.5 697.0L1082.0 697.0L1082.5 697.0L1083.0 696.8L1083.5 696.8L1084.0 697.0L1084.5 697.2L1085.0 697.2L1085.5 697.0L1086.0 696.8L1086.5 696.7L1087.0 696.8L1087.5 697.0L1088.0 697.2L1088.5 697.3L1089.0 697.2L1089.5 697.1L1090.0 696.8L1090.5 696.8L1091.0 697.0L1091.5 697.0L1092.0 696.9L1092.5 696.8L1093.0 696.7L1093.5 696.7L1094.0 696.8L1094.5 697.2L1095.0 697.6L1095.5 697.6L1096.0 697.2L1096.5 696.9L1097.0 696.8L1097.5 696.8L1098.0 697.0L1098.5 697.0L1099.0 696.8L1099.5 696.7L1100.0 696.9L1100.5 697.2L1101.0 697.4L1101.5 697.6L1102.0 697.4L1102.5 697.1L1103.0 697.0L1103.5 696.9L1104.0 696.7L1104.5 696.6L1105.0 696.8L1105.5 697.1L1106.0 697.1L1106.5 696.9L1107.0 696.7L1107.5 696.8L1108.0 697.0L1108.5 697.1L1109.0 697.1L1109.5 697.1L1110.0 697.3L1110.5 697.4L1111.0 697.3L1111.5 697.0L1112.0 696.7L1112.5 696.4L1113.0 696.3L1113.5 696.6L1114.0 697.1L1114.5 697.4L1115.0 697.4L1115.5 697.4L1116.0 697.4L1116.5 696.9L1117.0 696.4L1117.5 696.3L1118.0 696.6L1118.5 697.0L1119.0 697.4L1119.5 697.6L1120.0 697.4L1120.5 696.9L1121.0 696.6L1121.5 696.7L1122.0 696.8L1122.5 696.7L1123.0 696.9L1123.5 697.2L1124.0 697.3L1124.5 697.1L1125.0 697.0L1125.5 697.0L1126.0 697.1L1126.5 697.0L1127.0 696.9L1127.5 696.7L1128.0 696.7L1128.5 696.9L1129.0 697.2L1129.5 697.2L1130.0 697.2L1130.5 697.2L1131.0 697.3L1131.5 697.2L1132.0 696.9" stroke="#7a7a7a" stroke-width="1" fill="none" stroke-linejoin="round"/><g shape-rendering="crispEdges"><rect x="154" y="662" width="37" height="37" fill="#000" fill-opacity=".373"/><rect x="191" y="662" width="229" height="37" fill="#000" fill-opacity=".25"/><rect x="1123" y="662" width="280" height="37" fill="#000" fill-opacity=".373"/><path d="M1132 697.5H1403" stroke="#8c8cb4" stroke-opacity=".55"/><path d="M463.5 662V699" stroke="#0000c0" stroke-width="1"/><path d="M466.5 662V699" stroke="#b40000" stroke-width="1"/><path d="M648.5 662V699" stroke="#0000c0" stroke-width="1"/><path d="M707.5 662V699" stroke="#b40000" stroke-width="1"/></g><text transform="translate(465.2 696.8) scale(.84 1)" style="font-size:15.200px" fill="#0000c0">P</text><text transform="translate(650.2 696.8) scale(.84 1)" style="font-size:15.200px" fill="#0000c0">S</text><g shape-rendering="crispEdges"><rect x="420" y="689" width="720" height="10" fill="rgb(160,0,0)" fill-opacity="0.28"/></g><text x="158" y="679.1" text-anchor="start" fill="#232323" >amax: 114.0 M</text><text x="158" y="694.4" text-anchor="start" fill="#232323" >mean: 193.8 k</text><text x="709.5" y="677.8" text-anchor="start" fill="#a41414" style="letter-spacing:-.25px">MLv: 4.54</text><g shape-rendering="crispEdges"><rect x="154" y="700" width="1249" height="37" fill="#fff"/><path d="M190.5 700V737" stroke="#000" stroke-opacity=".15" stroke-dasharray="4 3"/><path d="M328.5 700V737" stroke="#000" stroke-opacity=".15" stroke-dasharray="4 3"/><path d="M466.5 700V737" stroke="#000" stroke-opacity=".15" stroke-dasharray="4 3"/><path d="M604.5 700V737" stroke="#000" stroke-opacity=".15" stroke-dasharray="4 3"/><path d="M742.5 700V737" stroke="#000" stroke-opacity=".15" stroke-dasharray="4 3"/><path d="M880.5 700V737" stroke="#000" stroke-opacity=".15" stroke-dasharray="4 3"/><path d="M1018.5 700V737" stroke="#000" stroke-opacity=".15" stroke-dasharray="4 3"/><path d="M1156.5 700V737" stroke="#000" stroke-opacity=".15" stroke-dasharray="4 3"/><path d="M1294.5 700V737" stroke="#000" stroke-opacity=".15" stroke-dasharray="4 3"/><path d="M154 721.5H1403" stroke="#aaaacc" stroke-opacity=".3"/></g><path d="M154.0 720.8L154.5 720.7L155.0 720.6L155.5 720.6L156.0 720.5L156.5 720.6L157.0 720.7L157.5 720.8L158.0 720.8L158.5 720.7L159.0 720.7L159.5 720.7L160.0 720.7L160.5 720.6L161.0 720.7L161.5 720.8L162.0 720.7L162.5 720.5L163.0 720.6L163.5 721.0L164.0 721.0L164.5 720.6L165.0 720.4L165.5 720.6L166.0 720.9L166.5 720.9L167.0 720.7L167.5 720.6L168.0 720.6L168.5 720.7L169.0 720.6L169.5 720.7L170.0 720.8L170.5 720.8L171.0 720.7L171.5 720.7L172.0 720.7L172.5 720.6L173.0 720.6L173.5 720.6L174.0 720.6L174.5 720.7L175.0 720.8L175.5 720.9L176.0 720.9L176.5 720.7L177.0 720.6L177.5 720.7L178.0 720.7L178.5 720.6L179.0 720.5L179.5 720.7L180.0 720.9L180.5 720.7L181.0 720.5L181.5 720.7L182.0 721.0L182.5 720.9L183.0 720.6L183.5 720.5L184.0 720.6L184.5 720.7L185.0 720.7L185.5 720.7L186.0 720.8L186.5 720.8L187.0 720.7L187.5 720.7L188.0 720.6L188.5 720.7L189.0 720.7L189.5 720.7L190.0 720.6L190.5 720.7L191.0 720.8L191.5 720.8L192.0 720.7L192.5 720.6L193.0 720.6L193.5 720.8L194.0 720.9L194.5 720.7L195.0 720.5L195.5 720.6L196.0 720.8L196.5 720.8L197.0 720.8L197.5 720.8L198.0 720.7L198.5 720.5L199.0 720.6L199.5 720.7L200.0 720.8L200.5 720.7L201.0 720.7L201.5 720.7L202.0 720.8L202.5 720.8L203.0 720.8L203.5 720.7L204.0 720.6L204.5 720.6L205.0 720.5L205.5 720.6L206.0 720.7L206.5 720.8L207.0 720.8L207.5 720.8L208.0 720.8L208.5 720.7L209.0 720.6L209.5 720.7L210.0 720.7L210.5 720.6L211.0 720.6L211.5 720.8L212.0 721.0L212.5 720.7L213.0 720.5L213.5 720.5L214.0 720.7L214.5 720.7L215.0 720.6L215.5 720.7L216.0 720.8L216.5 720.8L217.0 720.8L217.5 720.7L218.0 720.6L218.5 720.7L219.0 720.8L219.5 720.6L220.0 720.5L220.5 720.8L221.0 720.9L221.5 720.8L222.0 720.6L222.5 720.5L223.0 720.6L223.5 720.8L224.0 720.9L224.5 720.8L225.0 720.6L225.5 720.6L226.0 720.8L226.5 720.8L227.0 720.6L227.5 720.5L228.0 720.7L228.5 720.9L229.0 720.8L229.5 720.7L230.0 720.6L230.5 720.5L231.0 720.7L231.5 720.9L232.0 721.0L232.5 720.7L233.0 720.4L233.5 720.5L234.0 720.7L234.5 720.9L235.0 720.8L235.5 720.6L236.0 720.6L236.5 720.7L237.0 720.9L237.5 720.8L238.0 720.5L238.5 720.6L239.0 720.8L239.5 720.8L240.0 720.8L240.5 720.7L241.0 720.6L241.5 720.5L242.0 720.7L242.5 720.9L243.0 720.8L243.5 720.7L244.0 720.6L244.5 720.7L245.0 720.6L245.5 720.7L246.0 720.9L246.5 720.8L247.0 720.7L247.5 720.6L248.0 720.7L248.5 720.7L249.0 720.6L249.5 720.5L250.0 720.6L250.5 720.8L251.0 720.7L251.5 720.6L252.0 720.7L252.5 720.7L253.0 720.6L253.5 720.6L254.0 720.8L254.5 720.8L255.0 720.6L255.5 720.7L256.0 720.9L256.5 720.9L257.0 720.6L257.5 720.5L258.0 720.6L258.5 720.7L259.0 720.8L259.5 720.9L260.0 720.9L260.5 720.8L261.0 720.6L261.5 720.5L262.0 720.6L262.5 720.7L263.0 720.9L263.5 720.9L264.0 720.8L264.5 720.5L265.0 720.4L265.5 720.7L266.0 721.0L266.5 720.9L267.0 720.6L267.5 720.6L268.0 720.7L268.5 720.8L269.0 720.8L269.5 720.7L270.0 720.6L270.5 720.7L271.0 720.6L271.5 720.6L272.0 720.8L272.5 720.8L273.0 720.5L273.5 720.5L274.0 720.8L274.5 720.9L275.0 720.8L275.5 720.7L276.0 720.6L276.5 720.6L277.0 720.8L277.5 720.8L278.0 720.6L278.5 720.6L279.0 720.8L279.5 720.8L280.0 720.7L280.5 720.6L281.0 720.7L281.5 720.7L282.0 720.7L282.5 720.7L283.0 720.7L283.5 720.6L284.0 720.7L284.5 720.8L285.0 720.8L285.5 720.7L286.0 720.6L286.5 720.6L287.0 720.7L287.5 720.7L288.0 720.8L288.5 720.7L289.0 720.6L289.5 720.7L290.0 720.8L290.5 720.7L291.0 720.6L291.5 720.5L292.0 720.6L292.5 720.9L293.0 720.9L293.5 720.7L294.0 720.6L294.5 720.6L295.0 720.7L295.5 720.9L296.0 720.8L296.5 720.6L297.0 720.4L297.5 720.6L298.0 720.9L298.5 721.1L299.0 720.8L299.5 720.5L300.0 720.5L300.5 720.8L301.0 720.8L301.5 720.7L302.0 720.5L302.5 720.5L303.0 720.7L303.5 720.9L304.0 720.8L304.5 720.7L305.0 720.7L305.5 720.7L306.0 720.6L306.5 720.7L307.0 720.8L307.5 720.6L308.0 720.6L308.5 720.7L309.0 721.0L309.5 720.9L310.0 720.5L310.5 720.4L311.0 720.7L311.5 721.0L312.0 720.8L312.5 720.5L313.0 720.6L313.5 720.8L314.0 720.7L314.5 720.6L315.0 720.7L315.5 720.8L316.0 720.7L316.5 720.6L317.0 720.7L317.5 720.7L318.0 720.7L318.5 720.6L319.0 720.6L319.5 720.7L320.0 720.9L320.5 720.8L321.0 720.8L321.5 720.7L322.0 720.6L322.5 720.6L323.0 720.6L323.5 720.8L324.0 720.9L324.5 720.8L325.0 720.6L325.5 720.6L326.0 720.7L326.5 720.6L327.0 720.5L327.5 720.7L328.0 721.0L328.5 720.9L329.0 720.7L329.5 720.5L330.0 720.5L330.5 720.6L331.0 720.8L331.5 720.8L332.0 720.7L332.5 720.7L333.0 720.8L333.5 720.7L334.0 720.5L334.5 720.5L335.0 720.8L335.5 720.9L336.0 720.8L336.5 720.6L337.0 720.6L337.5 720.7L338.0 720.9L338.5 720.8L339.0 720.8L339.5 720.6L340.0 720.5L340.5 720.5L341.0 720.9L341.5 721.1L342.0 720.8L342.5 720.4L343.0 720.5L343.5 720.8L344.0 720.8L344.5 720.8L345.0 720.8L345.5 720.7L346.0 720.6L346.5 720.6L347.0 720.7L347.5 720.7L348.0 720.8L348.5 720.6L349.0 720.5L349.5 720.7L350.0 720.9L350.5 720.7L351.0 720.7L351.5 720.8L352.0 720.6L352.5 720.5L353.0 720.6L353.5 720.8L354.0 720.8L354.5 720.9L355.0 720.9L355.5 720.7L356.0 720.4L356.5 720.6L357.0 720.9L357.5 720.9L358.0 720.6L358.5 720.5L359.0 720.7L359.5 720.8L360.0 720.7L360.5 720.6L361.0 720.7L361.5 720.8L362.0 720.8L362.5 720.7L363.0 720.7L363.5 720.6L364.0 720.6L364.5 720.7L365.0 721.0L365.5 720.9L366.0 720.4L366.5 720.3L367.0 720.7L367.5 721.0L368.0 720.9L368.5 720.5L369.0 720.5L369.5 720.8L370.0 720.8L370.5 720.6L371.0 720.5L371.5 720.6L372.0 720.8L372.5 720.9L373.0 720.8L373.5 720.8L374.0 720.7L374.5 720.5L375.0 720.5L375.5 720.7L376.0 720.7L376.5 720.8L377.0 720.8L377.5 720.7L378.0 720.6L378.5 720.6L379.0 720.7L379.5 720.7L380.0 720.6L380.5 720.8L381.0 720.9L381.5 720.7L382.0 720.6L382.5 720.6L383.0 720.8L383.5 720.8L384.0 720.6L384.5 720.5L385.0 720.6L385.5 720.9L386.0 720.8L386.5 720.6L387.0 720.5L387.5 720.7L388.0 720.7L388.5 720.7L389.0 720.8L389.5 720.9L390.0 720.7L390.5 720.6L391.0 720.7L391.5 720.8L392.0 720.8L392.5 720.7L393.0 720.7L393.5 720.7L394.0 720.7L394.5 720.6L395.0 720.6L395.5 720.7L396.0 720.9L396.5 720.9L397.0 720.7L397.5 720.5L398.0 720.6L398.5 720.7L399.0 720.7L399.5 720.7L400.0 720.7L400.5 720.9L401.0 720.8L401.5 720.6L402.0 720.5L402.5 720.7L403.0 720.8L403.5 720.8L404.0 720.6L404.5 720.7L405.0 720.8L405.5 720.7L406.0 720.5L406.5 720.7L407.0 720.9L407.5 720.9L408.0 720.6L408.5 720.6L409.0 720.7L409.5 720.7L410.0 720.7L410.5 720.7L411.0 720.6L411.5 720.6L412.0 720.6L412.5 720.9L413.0 720.9L413.5 720.7L414.0 720.5L414.5 720.7L415.0 720.8L415.5 720.7L416.0 720.6L416.5 720.6L417.0 720.6L417.5 720.8L418.0 721.0L418.5 720.8L419.0 720.5L419.5 720.4L420.0 720.6L420.5 720.9L421.0 720.9L421.5 720.7L422.0 720.8L422.5 720.9L423.0 720.6L423.5 720.4L424.0 720.5L424.5 720.8L425.0 720.8L425.5 720.7L426.0 720.8L426.5 720.8L427.0 720.7L427.5 720.7L428.0 720.7L428.5 720.7L429.0 720.6L429.5 720.6L430.0 720.8L430.5 720.9L431.0 720.9L431.5 720.5L432.0 720.4L432.5 720.7L433.0 720.8L433.5 720.6L434.0 720.6L434.5 720.9L435.0 720.9L435.5 720.6L436.0 720.5L436.5 720.8L437.0 721.1L437.5 720.8L438.0 720.4L438.5 720.4L439.0 720.6L439.5 720.8L440.0 720.9L440.5 720.9L441.0 720.7L441.5 720.5L442.0 720.5L442.5 720.7L443.0 720.8L443.5 720.8L444.0 720.9L444.5 720.9L445.0 720.8L445.5 720.6L446.0 720.4L446.5 720.5L447.0 720.6L447.5 720.9L448.0 721.0L448.5 720.7L449.0 720.5L449.5 720.5L450.0 720.7L450.5 720.7L451.0 720.6L451.5 720.7L452.0 720.9L452.5 720.8L453.0 720.6L453.5 720.6L454.0 720.6L454.5 720.8L455.0 720.9L455.5 720.7L456.0 720.5L456.5 720.6L457.0 720.9L457.5 721.0L458.0 720.7L458.5 720.5L459.0 720.7L459.5 720.9L460.0 720.8L460.5 720.7L461.0 720.7L461.5 720.6L462.0 720.4L462.5 720.6L463.0 720.8L463.5 720.7L464.0 720.7L464.5 720.8L465.0 720.9L465.5 720.7L466.0 720.6L466.5 719.6L467.0 719.1L467.5 722.6L468.0 727.3L468.5 723.4L469.0 718.1L469.5 717.0L470.0 717.6L470.5 719.4L471.0 722.5L471.5 722.5L472.0 719.9L472.5 720.0L473.0 722.3L473.5 722.6L474.0 721.7L474.5 720.5L475.0 718.3L475.5 717.7L476.0 719.9L476.5 721.3L477.0 720.2L477.5 719.6L478.0 721.0L478.5 722.5L479.0 722.3L479.5 720.5L480.0 719.5L480.5 720.3L481.0 721.8L481.5 722.7L482.0 721.9L482.5 719.4L483.0 717.9L483.5 719.5L484.0 722.5L484.5 723.3L485.0 721.4L485.5 718.9L486.0 717.9L486.5 719.7L487.0 722.7L487.5 722.7L488.0 719.8L488.5 719.3L489.0 721.3L489.5 721.2L490.0 720.3L490.5 722.0L491.0 722.3L491.5 719.1L492.0 718.1L492.5 720.7L493.0 722.3L493.5 721.9L494.0 721.1L494.5 720.2L495.0 719.7L495.5 720.7L496.0 722.0L496.5 721.6L497.0 719.9L497.5 718.8L498.0 719.8L498.5 721.8L499.0 722.4L499.5 721.7L500.0 720.9L500.5 719.3L501.0 718.1L501.5 719.9L502.0 723.3L502.5 723.8L503.0 720.3L503.5 717.7L504.0 719.6L504.5 721.9L505.0 720.9L505.5 719.6L506.0 721.0L506.5 722.6L507.0 721.5L507.5 719.5L508.0 719.9L508.5 720.7L509.0 719.7L509.5 719.6L510.0 721.8L510.5 723.0L511.0 721.3L511.5 719.2L512.0 718.8L512.5 719.8L513.0 721.3L513.5 722.6L514.0 723.3L514.5 722.2L515.0 719.5L515.5 717.8L516.0 718.6L516.5 721.5L517.0 723.3L517.5 721.7L518.0 718.9L518.5 718.4L519.0 720.0L519.5 721.1L520.0 721.0L520.5 721.5L521.0 722.0L521.5 721.1L522.0 720.6L522.5 720.9L523.0 719.9L523.5 719.2L524.0 720.5L524.5 721.7L525.0 721.5L525.5 720.8L526.0 719.8L526.5 719.4L527.0 720.4L527.5 721.6L528.0 721.6L528.5 721.3L529.0 721.2L529.5 720.9L530.0 720.7L530.5 720.3L531.0 719.5L531.5 719.7L532.0 721.0L532.5 721.7L533.0 722.1L533.5 722.1L534.0 720.6L534.5 718.5L535.0 718.8L535.5 721.1L536.0 722.7L536.5 722.2L537.0 719.8L537.5 718.1L538.0 720.0L538.5 722.4L539.0 721.8L539.5 721.1L540.0 721.4L540.5 719.9L541.0 718.0L541.5 719.1L542.0 721.7L542.5 722.3L543.0 721.1L543.5 720.6L544.0 721.0L544.5 721.6L545.0 721.8L545.5 720.3L546.0 718.2L546.5 719.7L547.0 723.8L547.5 723.7L548.0 719.8L548.5 718.6L549.0 720.2L549.5 719.7L550.0 718.1L550.5 719.6L551.0 722.8L551.5 723.8L552.0 722.2L552.5 720.2L553.0 719.7L553.5 720.0L554.0 720.4L554.5 721.3L555.0 721.4L555.5 720.1L556.0 719.6L556.5 720.7L557.0 721.4L557.5 720.5L558.0 719.3L558.5 720.0L559.0 721.5L559.5 721.8L560.0 721.3L560.5 720.5L561.0 720.0L561.5 720.0L562.0 719.9L562.5 720.1L563.0 721.2L563.5 721.8L564.0 721.3L564.5 720.8L565.0 720.8L565.5 720.9L566.0 720.7L566.5 720.4L567.0 720.4L567.5 720.6L568.0 720.5L568.5 720.5L569.0 721.1L569.5 721.2L570.0 720.3L570.5 720.2L571.0 721.7L571.5 721.6L572.0 719.4L572.5 718.6L573.0 720.2L573.5 721.6L574.0 721.7L574.5 721.0L575.0 720.2L575.5 720.0L576.0 720.8L576.5 721.3L577.0 720.8L577.5 720.7L578.0 721.3L578.5 720.7L579.0 719.5L579.5 719.9L580.0 720.9L580.5 720.9L581.0 720.8L581.5 721.2L582.0 721.7L582.5 722.1L583.0 721.6L583.5 719.7L584.0 718.8L584.5 719.6L585.0 720.3L585.5 720.5L586.0 721.4L586.5 722.6L587.0 722.0L587.5 720.3L588.0 719.4L588.5 719.3L589.0 720.1L589.5 721.2L590.0 721.5L590.5 721.6L591.0 722.4L591.5 722.5L592.0 720.5L592.5 718.2L593.0 718.0L593.5 720.7L594.0 723.1L594.5 721.6L595.0 718.9L595.5 719.9L596.0 723.0L596.5 722.2L597.0 718.9L597.5 718.5L598.0 720.8L598.5 722.4L599.0 721.7L599.5 719.7L600.0 718.7L600.5 720.4L601.0 722.6L601.5 721.9L602.0 719.2L602.5 718.6L603.0 721.4L603.5 723.6L604.0 721.2L604.5 717.6L605.0 718.8L605.5 722.8L606.0 723.2L606.5 720.2L607.0 719.1L607.5 720.6L608.0 721.1L608.5 720.0L609.0 720.1L609.5 721.6L610.0 721.8L610.5 720.3L611.0 720.0L611.5 720.9L612.0 721.2L612.5 721.3L613.0 721.3L613.5 719.9L614.0 719.1L614.5 721.1L615.0 722.7L615.5 720.8L616.0 718.9L616.5 720.5L617.0 722.5L617.5 721.9L618.0 720.2L618.5 718.9L619.0 718.2L619.5 719.0L620.0 721.5L620.5 723.8L621.0 723.0L621.5 720.3L622.0 719.1L622.5 720.4L623.0 722.0L623.5 721.7L624.0 720.3L624.5 719.9L625.0 719.9L625.5 719.8L626.0 720.4L626.5 721.4L627.0 721.7L627.5 720.9L628.0 720.2L628.5 720.8L629.0 721.3L629.5 720.3L630.0 720.0L630.5 721.3L631.0 721.2L631.5 719.7L632.0 720.0L632.5 721.9L633.0 722.7L633.5 721.4L634.0 719.6L634.5 719.5L635.0 720.5L635.5 720.9L636.0 721.0L636.5 720.7L637.0 720.2L637.5 719.9L638.0 719.8L638.5 720.8L639.0 722.8L639.5 722.5L640.0 719.5L640.5 718.3L641.0 719.9L641.5 721.6L642.0 722.2L642.5 721.7L643.0 720.5L643.5 719.7L644.0 720.0L644.5 720.6L645.0 720.9L645.5 720.9L646.0 720.6L646.5 720.5L647.0 720.7L647.5 721.1L648.0 721.2L648.5 720.4L649.0 719.5L649.5 719.9L650.0 721.2L650.5 721.6L651.0 721.6L651.5 721.4L652.0 720.2L652.5 719.2L653.0 720.8L653.5 722.6L654.0 721.5L654.5 719.3L655.0 719.0L655.5 719.8L656.0 720.9L656.5 722.1L657.0 723.4L657.5 724.1L658.0 722.6L658.5 718.3L659.0 715.7L659.5 718.0L660.0 722.1L660.5 723.0L661.0 721.1L661.5 720.1L662.0 721.0L662.5 720.7L663.0 718.9L663.5 719.4L664.0 720.7L664.5 721.2L665.0 725.5L665.5 729.2L666.0 723.3L666.5 715.6L667.0 715.6L667.5 713.5L668.0 708.7L668.5 721.1L669.0 737.0L669.5 737.0L670.0 711.3L670.5 700.0L671.0 710.1L671.5 731.1L672.0 734.7L672.5 723.9L673.0 713.4L673.5 715.7L674.0 727.2L674.5 730.7L675.0 718.3L675.5 705.1L676.0 710.1L676.5 726.8L677.0 734.4L677.5 725.3L678.0 714.3L678.5 720.5L679.0 730.7L679.5 720.9L680.0 706.1L680.5 711.3L681.0 725.0L681.5 726.6L682.0 718.7L682.5 716.4L683.0 725.0L683.5 730.5L684.0 720.5L684.5 708.4L685.0 713.7L685.5 728.8L686.0 730.6L686.5 720.0L687.0 716.5L687.5 720.8L688.0 718.6L688.5 712.2L689.0 716.6L689.5 729.0L690.0 732.6L690.5 727.7L691.0 723.8L691.5 720.2L692.0 715.2L692.5 711.4L693.0 713.6L693.5 723.5L694.0 731.0L694.5 725.1L695.0 713.3L695.5 710.3L696.0 716.8L696.5 724.8L697.0 729.8L697.5 730.0L698.0 721.2L698.5 709.4L699.0 711.7L699.5 727.2L700.0 731.6L700.5 716.0L701.0 704.4L701.5 717.6L702.0 737.0L702.5 733.0L703.0 712.2L703.5 708.2L704.0 720.5L704.5 725.7L705.0 722.9L705.5 721.2L706.0 719.3L706.5 719.1L707.0 724.9L707.5 727.0L708.0 720.1L708.5 716.0L709.0 719.3L709.5 721.8L710.0 718.8L710.5 715.9L711.0 716.8L711.5 718.1L712.0 719.7L712.5 723.9L713.0 726.0L713.5 724.0L714.0 724.5L714.5 724.0L715.0 716.8L715.5 714.1L716.0 724.0L716.5 730.0L717.0 718.8L717.5 708.7L718.0 716.8L718.5 726.6L719.0 723.1L719.5 718.2L720.0 720.0L720.5 723.1L721.0 725.9L721.5 725.9L722.0 720.1L722.5 715.6L723.0 715.3L723.5 716.0L724.0 720.9L724.5 727.3L725.0 724.3L725.5 716.6L726.0 717.5L726.5 724.5L727.0 725.6L727.5 718.1L728.0 711.9L728.5 716.5L729.0 726.1L729.5 727.2L730.0 720.9L730.5 717.8L731.0 719.2L731.5 720.1L732.0 720.8L732.5 724.5L733.0 728.0L733.5 725.0L734.0 716.1L734.5 710.8L735.0 716.8L735.5 726.2L736.0 726.7L736.5 721.3L737.0 717.3L737.5 714.9L738.0 717.0L738.5 723.1L739.0 725.3L739.5 723.4L740.0 723.1L740.5 722.2L741.0 716.6L741.5 713.5L742.0 718.5L742.5 722.6L743.0 720.0L743.5 719.7L744.0 725.3L744.5 728.1L745.0 723.1L745.5 716.1L746.0 716.3L746.5 722.7L747.0 724.6L747.5 721.0L748.0 719.9L748.5 719.9L749.0 716.9L749.5 715.9L750.0 720.6L750.5 726.8L751.0 729.6L751.5 725.6L752.0 715.4L752.5 709.8L753.0 715.6L753.5 723.0L754.0 724.2L754.5 724.4L755.0 724.7L755.5 721.1L756.0 717.3L756.5 718.3L757.0 720.5L757.5 720.4L758.0 721.0L758.5 723.0L759.0 720.6L759.5 716.9L760.0 722.0L760.5 730.0L761.0 726.4L761.5 715.4L762.0 712.5L762.5 718.8L763.0 724.0L763.5 722.9L764.0 718.1L764.5 716.4L765.0 721.6L765.5 727.2L766.0 724.2L766.5 716.2L767.0 714.5L767.5 720.0L768.0 724.0L768.5 723.2L769.0 721.4L769.5 719.4L770.0 716.3L770.5 715.3L771.0 720.0L771.5 727.2L772.0 728.9L772.5 722.6L773.0 716.6L773.5 717.3L774.0 719.9L774.5 720.6L775.0 721.4L775.5 719.9L776.0 715.9L776.5 717.5L777.0 724.6L777.5 725.9L778.0 719.2L778.5 715.0L779.0 719.6L779.5 725.4L780.0 724.0L780.5 719.8L781.0 719.8L781.5 720.6L782.0 719.0L782.5 719.5L783.0 724.9L783.5 728.9L784.0 724.8L784.5 715.6L785.0 711.3L785.5 715.9L786.0 722.6L786.5 723.5L787.0 720.7L787.5 720.6L788.0 722.7L788.5 723.0L789.0 720.9L789.5 718.3L790.0 718.9L790.5 722.7L791.0 724.4L791.5 721.8L792.0 718.3L792.5 716.8L793.0 717.7L793.5 720.4L794.0 722.7L794.5 721.9L795.0 719.3L795.5 719.3L796.0 723.0L796.5 726.0L797.0 723.6L797.5 717.7L798.0 714.9L798.5 717.9L799.0 722.0L799.5 722.2L800.0 719.7L800.5 719.5L801.0 722.7L801.5 724.3L802.0 722.1L802.5 720.4L803.0 721.0L803.5 721.4L804.0 721.8L804.5 722.1L805.0 719.9L805.5 716.7L806.0 717.1L806.5 720.8L807.0 721.9L807.5 719.5L808.0 720.5L808.5 725.0L809.0 724.9L809.5 720.0L810.0 718.6L810.5 720.9L811.0 720.0L811.5 717.5L812.0 720.1L812.5 724.2L813.0 721.3L813.5 716.2L814.0 718.4L814.5 724.4L815.0 723.7L815.5 717.9L816.0 718.1L816.5 724.3L817.0 724.9L817.5 719.2L818.0 717.7L818.5 721.7L819.0 722.2L819.5 718.4L820.0 718.4L820.5 722.1L821.0 722.8L821.5 720.5L822.0 719.2L822.5 719.1L823.0 719.5L823.5 720.8L824.0 721.8L824.5 720.5L825.0 719.1L825.5 720.7L826.0 722.0L826.5 720.4L827.0 720.6L827.5 724.0L828.0 724.7L828.5 720.0L829.0 716.9L829.5 719.9L830.0 722.3L830.5 719.3L831.0 715.8L831.5 716.6L832.0 720.4L832.5 724.0L833.0 725.2L833.5 722.7L834.0 719.9L834.5 721.7L835.0 724.3L835.5 722.4L836.0 720.0L836.5 720.0L837.0 719.6L837.5 719.3L838.0 720.5L838.5 720.4L839.0 719.4L839.5 720.2L840.0 721.5L840.5 720.9L841.0 718.9L841.5 718.2L842.0 720.7L842.5 724.4L843.0 724.6L843.5 721.6L844.0 719.5L844.5 718.7L845.0 718.1L845.5 719.0L846.0 721.0L846.5 721.7L847.0 721.4L847.5 721.5L848.0 721.7L848.5 720.6L849.0 719.9L849.5 721.5L850.0 722.5L850.5 720.8L851.0 719.8L851.5 720.7L852.0 720.7L852.5 719.5L853.0 719.5L853.5 720.8L854.0 720.8L854.5 719.1L855.0 718.9L855.5 720.4L856.0 721.6L856.5 722.9L857.0 723.8L857.5 722.8L858.0 720.8L858.5 718.7L859.0 717.1L859.5 718.5L860.0 722.9L860.5 725.3L861.0 723.4L861.5 720.2L862.0 717.7L862.5 716.6L863.0 718.0L863.5 720.6L864.0 721.7L864.5 721.8L865.0 722.1L865.5 721.7L866.0 720.7L866.5 721.3L867.0 722.9L867.5 721.8L868.0 718.2L868.5 716.5L869.0 718.7L869.5 721.6L870.0 722.6L870.5 722.5L871.0 722.0L871.5 720.7L872.0 720.3L872.5 721.4L873.0 721.6L873.5 721.1L874.0 721.9L874.5 722.6L875.0 722.1L875.5 721.5L876.0 721.1L876.5 719.9L877.0 719.6L877.5 720.4L878.0 719.7L878.5 717.7L879.0 718.5L879.5 721.6L880.0 722.6L880.5 721.6L881.0 722.2L881.5 723.4L882.0 723.0L882.5 721.0L883.0 718.3L883.5 716.4L884.0 717.2L884.5 720.3L885.0 722.6L885.5 722.1L886.0 720.9L886.5 721.5L887.0 723.1L887.5 722.6L888.0 720.3L888.5 718.6L889.0 719.5L889.5 722.0L890.0 722.9L890.5 721.2L891.0 719.3L891.5 719.1L892.0 719.8L892.5 720.1L893.0 720.5L893.5 721.6L894.0 722.6L894.5 721.8L895.0 719.8L895.5 718.9L896.0 719.0L896.5 718.4L897.0 718.1L897.5 719.8L898.0 722.2L898.5 723.1L899.0 722.9L899.5 722.6L900.0 722.1L900.5 721.8L901.0 721.6L901.5 720.5L902.0 718.7L902.5 717.9L903.0 718.3L903.5 719.3L904.0 720.7L904.5 722.0L905.0 722.8L905.5 723.1L906.0 722.9L906.5 721.9L907.0 720.3L907.5 718.6L908.0 717.8L908.5 719.0L909.0 720.8L909.5 721.4L910.0 721.5L910.5 722.0L911.0 721.8L911.5 720.6L912.0 719.5L912.5 719.3L913.0 720.3L913.5 722.4L914.0 723.2L914.5 721.4L915.0 718.9L915.5 718.2L916.0 718.5L916.5 719.1L917.0 720.4L917.5 722.0L918.0 723.2L918.5 723.3L919.0 722.5L919.5 721.8L920.0 721.1L920.5 720.0L921.0 719.1L921.5 718.3L922.0 717.7L922.5 719.0L923.0 720.9L923.5 721.3L924.0 721.1L924.5 721.9L925.0 723.0L925.5 723.3L926.0 722.8L926.5 721.6L927.0 719.6L927.5 718.2L928.0 718.6L928.5 720.0L929.0 720.9L929.5 721.6L930.0 722.2L930.5 721.8L931.0 720.2L931.5 718.5L932.0 717.9L932.5 718.8L933.0 720.7L933.5 722.2L934.0 722.8L934.5 722.7L935.0 722.1L935.5 720.5L936.0 718.9L936.5 719.0L937.0 720.6L937.5 722.0L938.0 722.2L938.5 721.3L939.0 719.5L939.5 718.2L940.0 719.3L940.5 721.4L941.0 722.2L941.5 721.9L942.0 721.7L942.5 720.9L943.0 720.2L943.5 720.6L944.0 721.7L944.5 722.3L945.0 721.7L945.5 720.2L946.0 719.0L946.5 718.9L947.0 719.4L947.5 720.3L948.0 721.1L948.5 721.6L949.0 721.4L949.5 720.7L950.0 720.2L950.5 720.1L951.0 720.3L951.5 720.8L952.0 721.3L952.5 721.5L953.0 721.3L953.5 720.3L954.0 719.4L954.5 719.4L955.0 720.4L955.5 721.8L956.0 723.0L956.5 723.1L957.0 721.6L957.5 719.6L958.0 718.7L958.5 718.9L959.0 719.1L959.5 719.1L960.0 719.9L960.5 721.3L961.0 722.1L961.5 721.9L962.0 721.4L962.5 721.4L963.0 721.2L963.5 720.8L964.0 720.3L964.5 720.0L965.0 719.9L965.5 720.1L966.0 721.0L966.5 722.0L967.0 722.0L967.5 721.1L968.0 720.6L968.5 721.5L969.0 722.1L969.5 721.2L970.0 720.3L970.5 720.1L971.0 719.4L971.5 718.5L972.0 719.2L972.5 721.2L973.0 722.3L973.5 721.4L974.0 720.0L974.5 719.5L975.0 720.0L975.5 720.6L976.0 721.0L976.5 721.9L977.0 722.4L977.5 721.4L978.0 719.6L978.5 719.2L979.0 720.0L979.5 720.5L980.0 720.9L980.5 721.3L981.0 721.1L981.5 720.5L982.0 720.8L982.5 721.7L983.0 721.9L983.5 721.1L984.0 720.1L984.5 719.5L985.0 719.6L985.5 720.2L986.0 720.9L986.5 720.9L987.0 720.4L987.5 720.3L988.0 720.2L988.5 719.6L989.0 719.6L989.5 721.3L990.0 723.0L990.5 722.7L991.0 721.3L991.5 721.0L992.0 721.6L992.5 721.3L993.0 720.2L993.5 720.0L994.0 721.1L994.5 721.7L995.0 721.0L995.5 720.1L996.0 719.6L996.5 719.2L997.0 719.4L997.5 720.2L998.0 721.1L998.5 721.5L999.0 721.6L999.5 721.3L1000.0 721.1L1000.5 720.5L1001.0 719.3L1001.5 718.7L1002.0 719.7L1002.5 721.0L1003.0 721.2L1003.5 720.8L1004.0 721.0L1004.5 721.3L1005.0 721.1L1005.5 721.1L1006.0 721.5L1006.5 721.5L1007.0 720.8L1007.5 719.9L1008.0 719.9L1008.5 720.8L1009.0 721.4L1009.5 721.4L1010.0 721.0L1010.5 719.9L1011.0 718.6L1011.5 718.4L1012.0 719.5L1012.5 720.4L1013.0 720.4L1013.5 720.2L1014.0 720.5L1014.5 721.2L1015.0 721.9L1015.5 722.0L1016.0 722.0L1016.5 722.2L1017.0 721.9L1017.5 720.9L1018.0 720.0L1018.5 719.8L1019.0 720.2L1019.5 720.8L1020.0 721.0L1020.5 721.0L1021.0 721.6L1021.5 722.3L1022.0 721.5L1022.5 719.6L1023.0 718.6L1023.5 719.1L1024.0 719.8L1024.5 720.1L1025.0 720.5L1025.5 721.2L1026.0 721.9L1026.5 722.1L1027.0 721.9L1027.5 721.4L1028.0 720.8L1028.5 720.3L1029.0 720.1L1029.5 720.4L1030.0 721.2L1030.5 721.6L1031.0 721.1L1031.5 720.0L1032.0 719.1L1032.5 719.3L1033.0 720.5L1033.5 721.6L1034.0 721.8L1034.5 722.0L1035.0 722.1L1035.5 721.1L1036.0 719.3L1036.5 718.4L1037.0 719.2L1037.5 720.6L1038.0 721.6L1038.5 721.7L1039.0 720.7L1039.5 719.5L1040.0 718.9L1040.5 719.9L1041.0 721.7L1041.5 722.8L1042.0 722.6L1042.5 721.7L1043.0 720.7L1043.5 719.9L1044.0 720.0L1044.5 720.3L1045.0 720.2L1045.5 719.7L1046.0 719.1L1046.5 719.5L1047.0 720.8L1047.5 721.7L1048.0 721.4L1048.5 721.1L1049.0 721.1L1049.5 720.9L1050.0 720.7L1050.5 721.0L1051.0 721.1L1051.5 720.6L1052.0 719.8L1052.5 719.8L1053.0 720.9L1053.5 721.9L1054.0 722.0L1054.5 721.0L1055.0 719.7L1055.5 719.1L1056.0 719.3L1056.5 719.9L1057.0 720.6L1057.5 721.2L1058.0 721.1L1058.5 720.8L1059.0 721.3L1059.5 722.1L1060.0 722.4L1060.5 722.4L1061.0 722.3L1061.5 721.3L1062.0 719.2L1062.5 717.7L1063.0 717.6L1063.5 718.6L1064.0 720.1L1064.5 721.5L1065.0 722.3L1065.5 721.8L1066.0 720.6L1066.5 720.3L1067.0 720.8L1067.5 721.0L1068.0 721.1L1068.5 721.7L1069.0 722.0L1069.5 721.1L1070.0 719.6L1070.5 718.9L1071.0 719.1L1071.5 720.1L1072.0 721.2L1072.5 721.9L1073.0 721.6L1073.5 720.8L1074.0 720.8L1074.5 721.4L1075.0 721.6L1075.5 720.9L1076.0 719.7L1076.5 719.0L1077.0 719.3L1077.5 720.1L1078.0 720.3L1078.5 720.7L1079.0 722.2L1079.5 723.5L1080.0 722.8L1080.5 720.9L1081.0 719.6L1081.5 719.5L1082.0 719.9L1082.5 720.6L1083.0 721.1L1083.5 721.0L1084.0 720.5L1084.5 720.3L1085.0 720.3L1085.5 720.1L1086.0 720.2L1086.5 720.7L1087.0 720.8L1087.5 720.4L1088.0 720.5L1088.5 720.7L1089.0 720.5L1089.5 720.8L1090.0 721.7L1090.5 721.9L1091.0 721.4L1091.5 720.8L1092.0 720.0L1092.5 719.5L1093.0 719.6L1093.5 719.9L1094.0 719.9L1094.5 720.1L1095.0 720.6L1095.5 720.6L1096.0 720.7L1096.5 721.5L1097.0 722.2L1097.5 722.3L1098.0 721.8L1098.5 721.4L1099.0 720.8L1099.5 719.9L1100.0 719.5L1100.5 720.0L1101.0 720.5L1101.5 721.0L1102.0 721.8L1102.5 722.0L1103.0 721.2L1103.5 720.4L1104.0 720.1L1104.5 720.2L1105.0 720.4L1105.5 720.4L1106.0 720.3L1106.5 720.2L1107.0 720.3L1107.5 720.5L1108.0 720.5L1108.5 720.2L1109.0 720.3L1109.5 721.1L1110.0 721.6L1110.5 721.2L1111.0 720.2L1111.5 719.7L1112.0 719.8L1112.5 720.6L1113.0 721.6L1113.5 722.2L1114.0 722.0L1114.5 721.3L1115.0 720.6L1115.5 720.3L1116.0 720.4L1116.5 720.5L1117.0 720.3L1117.5 720.0L1118.0 720.2L1118.5 720.9L1119.0 721.1L1119.5 720.4L1120.0 719.9L1120.5 720.0L1121.0 720.1L1121.5 720.4L1122.0 720.9L1122.5 721.0L1123.0 721.0L1123.5 721.5L1124.0 722.1L1124.5 721.8L1125.0 720.9L1125.5 720.2L1126.0 720.1L1126.5 720.3L1127.0 720.8L1127.5 721.2L1128.0 721.2L1128.5 720.6L1129.0 719.4L1129.5 718.4L1130.0 718.6L1130.5 720.0L1131.0 721.4L1131.5 721.9L1132.0 721.7L1132.5 721.1L1133.0 720.3L1133.5 720.0L1134.0 720.1L1134.5 720.1L1135.0 720.0L1135.5 720.2L1136.0 720.6L1136.5 720.9L1137.0 721.3L1137.5 721.5L1138.0 721.4L1138.5 721.1L1139.0 720.8L1139.5 720.4L1140.0 720.0L1140.5 719.9L1141.0 720.0L1141.5 720.1L1142.0 720.9L1142.5 722.0L1143.0 722.1L1143.5 721.0L1144.0 720.0L1144.5 719.9L1145.0 720.0L1145.5 720.2L1146.0 720.7L1146.5 721.4L1147.0 721.6L1147.5 721.6L1148.0 721.6L1148.5 720.9L1149.0 719.9L1149.5 719.5L1150.0 720.0L1150.5 720.9L1151.0 721.6L1151.5 721.5L1152.0 720.8L1152.5 720.7L1153.0 721.1L1153.5 721.0L1154.0 720.2L1154.5 719.2L1155.0 718.8L1155.5 719.4L1156.0 720.5L1156.5 722.0L1157.0 723.2L1157.5 723.1L1158.0 721.8L1158.5 720.4L1159.0 719.6L1159.5 719.3L1160.0 719.2L1160.5 719.6L1161.0 720.2L1161.5 720.3L1162.0 720.3L1162.5 721.1L1163.0 721.6L1163.5 721.0L1164.0 720.2L1164.5 720.3L1165.0 720.7L1165.5 720.8L1166.0 720.9L1166.5 721.2L1167.0 721.4L1167.5 721.3L1168.0 720.7L1168.5 720.2L1169.0 720.3L1169.5 720.5L1170.0 720.2L1170.5 719.8L1171.0 720.5L1171.5 721.6L1172.0 721.7L1172.5 720.9L1173.0 720.8L1173.5 721.1L1174.0 720.6L1174.5 719.9L1175.0 719.6L1175.5 719.9L1176.0 720.6L1176.5 721.3L1177.0 721.6L1177.5 721.4L1178.0 720.7L1178.5 720.2L1179.0 720.4L1179.5 720.9L1180.0 721.3L1180.5 721.5L1181.0 721.5L1181.5 721.2L1182.0 720.7L1182.5 720.4L1183.0 720.7L1183.5 721.0L1184.0 720.8L1184.5 720.4L1185.0 720.4L1185.5 720.3L1186.0 719.7L1186.5 719.3L1187.0 720.3L1187.5 721.8L1188.0 722.5L1188.5 722.0L1189.0 721.5L1189.5 721.5L1190.0 721.3L1190.5 720.5L1191.0 720.1L1191.5 720.4L1192.0 720.4L1192.5 720.0L1193.0 719.7L1193.5 720.0L1194.0 720.7L1194.5 721.3L1195.0 721.5L1195.5 721.1L1196.0 720.5L1196.5 719.9L1197.0 719.5L1197.5 719.6L1198.0 720.7L1198.5 721.8L1199.0 722.1L1199.5 721.5L1200.0 720.3L1200.5 719.6L1201.0 720.0L1201.5 721.1L1202.0 721.8L1202.5 721.5L1203.0 720.7L1203.5 719.8L1204.0 719.3L1204.5 719.8L1205.0 720.5L1205.5 720.6L1206.0 720.5L1206.5 720.6L1207.0 720.8L1207.5 720.8L1208.0 720.6L1208.5 720.4L1209.0 720.6L1209.5 720.8L1210.0 720.5L1210.5 720.5L1211.0 721.1" stroke="#7a7a7a" stroke-width="1" fill="none" stroke-linejoin="round"/><g shape-rendering="crispEdges"><rect x="154" y="700" width="37" height="37" fill="#000" fill-opacity=".373"/><rect x="191" y="700" width="229" height="37" fill="#000" fill-opacity=".25"/><rect x="1195" y="700" width="208" height="37" fill="#000" fill-opacity=".373"/><path d="M1211 721.5H1403" stroke="#8c8cb4" stroke-opacity=".55"/><path d="M465.5 700V737" stroke="#0000c0" stroke-width="1"/><path d="M466.5 700V737" stroke="#b40000" stroke-width="1"/><path d="M665.5 700V737" stroke="#0000c0" stroke-width="1"/><path d="M672.5 700V737" stroke="#b40000" stroke-width="1"/></g><text transform="translate(467.2 734.8) scale(.84 1)" style="font-size:15.200px" fill="#0000c0">P</text><text transform="translate(667.2 734.8) scale(.84 1)" style="font-size:15.200px" fill="#0000c0">S</text><g shape-rendering="crispEdges"><rect x="420" y="727" width="784" height="10" fill="rgb(160,0,0)" fill-opacity="0.28"/></g><text x="158" y="717.1" text-anchor="start" fill="#232323" >amax: 4.4 M</text><text x="158" y="732.4" text-anchor="start" fill="#232323" >mean: 235.6</text><text x="674.5" y="715.8" text-anchor="start" fill="#a41414" style="letter-spacing:-.25px">MLv: 4.38</text><g shape-rendering="crispEdges"><rect x="154" y="739" width="1249" height="36" fill="#c8c8fa"/><path d="M190.5 739V775" stroke="#000" stroke-opacity=".15" stroke-dasharray="4 3"/><path d="M328.5 739V775" stroke="#000" stroke-opacity=".15" stroke-dasharray="4 3"/><path d="M466.5 739V775" stroke="#000" stroke-opacity=".15" stroke-dasharray="4 3"/><path d="M604.5 739V775" stroke="#000" stroke-opacity=".15" stroke-dasharray="4 3"/><path d="M742.5 739V775" stroke="#000" stroke-opacity=".15" stroke-dasharray="4 3"/><path d="M880.5 739V775" stroke="#000" stroke-opacity=".15" stroke-dasharray="4 3"/><path d="M1018.5 739V775" stroke="#000" stroke-opacity=".15" stroke-dasharray="4 3"/><path d="M1156.5 739V775" stroke="#000" stroke-opacity=".15" stroke-dasharray="4 3"/><path d="M1294.5 739V775" stroke="#000" stroke-opacity=".15" stroke-dasharray="4 3"/><path d="M154 756.5H1403" stroke="#aaaacc" stroke-opacity=".3"/></g><path d="M154.0 756.0L154.5 756.2L155.0 756.4L155.5 756.6L156.0 756.6L156.5 756.3L157.0 756.1L157.5 756.1L158.0 756.2L158.5 756.3L159.0 756.4L159.5 756.5L160.0 756.4L160.5 756.2L161.0 756.3L161.5 756.4L162.0 756.4L162.5 756.1L163.0 756.0L163.5 756.3L164.0 756.5L164.5 756.5L165.0 756.4L165.5 756.4L166.0 756.3L166.5 756.1L167.0 756.1L167.5 756.3L168.0 756.5L168.5 756.4L169.0 756.3L169.5 756.2L170.0 756.2L170.5 756.3L171.0 756.4L171.5 756.4L172.0 756.4L172.5 756.3L173.0 756.1L173.5 756.1L174.0 756.3L174.5 756.5L175.0 756.5L175.5 756.3L176.0 756.2L176.5 756.2L177.0 756.2L177.5 756.4L178.0 756.5L178.5 756.4L179.0 756.2L179.5 756.1L180.0 756.2L180.5 756.5L181.0 756.5L181.5 756.4L182.0 756.2L182.5 756.2L183.0 756.1L183.5 756.2L184.0 756.4L184.5 756.6L185.0 756.4L185.5 756.2L186.0 756.2L186.5 756.3L187.0 756.3L187.5 756.3L188.0 756.4L188.5 756.4L189.0 756.3L189.5 756.2L190.0 756.2L190.5 756.3L191.0 756.2L191.5 756.2L192.0 756.4L192.5 756.6L193.0 756.5L193.5 756.2L194.0 756.2L194.5 756.2L195.0 756.3L195.5 756.3L196.0 756.4L196.5 756.5L197.0 756.4L197.5 756.3L198.0 756.2L198.5 756.1L199.0 756.1L199.5 756.3L200.0 756.4L200.5 756.3L201.0 756.3L201.5 756.4L202.0 756.4L202.5 756.2L203.0 756.2L203.5 756.4L204.0 756.4L204.5 756.3L205.0 756.3L205.5 756.3L206.0 756.3L206.5 756.3L207.0 756.3L207.5 756.2L208.0 756.3L208.5 756.4L209.0 756.4L209.5 756.3L210.0 756.2L210.5 756.1L211.0 756.2L211.5 756.4L212.0 756.6L212.5 756.5L213.0 756.2L213.5 756.2L214.0 756.3L214.5 756.3L215.0 756.2L215.5 756.3L216.0 756.4L216.5 756.3L217.0 756.3L217.5 756.3L218.0 756.4L218.5 756.3L219.0 756.2L219.5 756.2L220.0 756.4L220.5 756.4L221.0 756.2L221.5 756.1L222.0 756.3L222.5 756.4L223.0 756.4L223.5 756.1L224.0 756.1L224.5 756.3L225.0 756.5L225.5 756.5L226.0 756.2L226.5 756.1L227.0 756.3L227.5 756.5L228.0 756.5L228.5 756.3L229.0 756.2L229.5 756.3L230.0 756.3L230.5 756.3L231.0 756.2L231.5 756.3L232.0 756.4L232.5 756.4L233.0 756.3L233.5 756.3L234.0 756.3L234.5 756.2L235.0 756.1L235.5 756.2L236.0 756.5L236.5 756.5L237.0 756.3L237.5 756.1L238.0 756.2L238.5 756.3L239.0 756.3L239.5 756.3L240.0 756.4L240.5 756.4L241.0 756.2L241.5 756.2L242.0 756.2L242.5 756.4L243.0 756.4L243.5 756.3L244.0 756.2L244.5 756.3L245.0 756.4L245.5 756.2L246.0 756.1L246.5 756.4L247.0 756.4L247.5 756.2L248.0 756.1L248.5 756.3L249.0 756.5L249.5 756.4L250.0 756.4L250.5 756.5L251.0 756.3L251.5 756.1L252.0 756.2L252.5 756.3L253.0 756.3L253.5 756.2L254.0 756.2L254.5 756.4L255.0 756.4L255.5 756.2L256.0 756.1L256.5 756.3L257.0 756.3L257.5 756.3L258.0 756.4L258.5 756.5L259.0 756.4L259.5 756.2L260.0 756.2L260.5 756.5L261.0 756.4L261.5 756.1L262.0 756.0L262.5 756.3L263.0 756.5L263.5 756.5L264.0 756.3L264.5 756.1L265.0 756.2L265.5 756.4L266.0 756.5L266.5 756.3L267.0 756.1L267.5 756.2L268.0 756.4L268.5 756.4L269.0 756.2L269.5 756.1L270.0 756.3L270.5 756.5L271.0 756.4L271.5 756.2L272.0 756.2L272.5 756.3L273.0 756.3L273.5 756.3L274.0 756.4L274.5 756.4L275.0 756.3L275.5 756.2L276.0 756.3L276.5 756.4L277.0 756.3L277.5 756.2L278.0 756.3L278.5 756.3L279.0 756.2L279.5 756.2L280.0 756.4L280.5 756.5L281.0 756.4L281.5 756.2L282.0 756.2L282.5 756.3L283.0 756.2L283.5 756.2L284.0 756.4L284.5 756.4L285.0 756.3L285.5 756.2L286.0 756.3L286.5 756.3L287.0 756.2L287.5 756.2L288.0 756.4L288.5 756.5L289.0 756.3L289.5 756.1L290.0 756.1L290.5 756.3L291.0 756.5L291.5 756.5L292.0 756.4L292.5 756.2L293.0 756.2L293.5 756.2L294.0 756.2L294.5 756.2L295.0 756.3L295.5 756.4L296.0 756.3L296.5 756.3L297.0 756.5L297.5 756.4L298.0 756.1L298.5 756.0L299.0 756.2L299.5 756.5L300.0 756.7L300.5 756.4L301.0 756.0L301.5 756.0L302.0 756.3L302.5 756.4L303.0 756.2L303.5 756.2L304.0 756.5L304.5 756.6L305.0 756.4L305.5 756.2L306.0 756.2L306.5 756.2L307.0 756.3L307.5 756.4L308.0 756.5L308.5 756.4L309.0 756.2L309.5 756.1L310.0 756.2L310.5 756.4L311.0 756.4L311.5 756.3L312.0 756.2L312.5 756.2L313.0 756.2L313.5 756.4L314.0 756.5L314.5 756.3L315.0 756.1L315.5 756.2L316.0 756.5L316.5 756.3L317.0 756.3L317.5 756.4L318.0 756.4L318.5 756.1L319.0 756.1L319.5 756.4L320.0 756.5L320.5 756.3L321.0 756.1L321.5 756.2L322.0 756.4L322.5 756.5L323.0 756.4L323.5 756.3L324.0 756.4L324.5 756.3L325.0 756.1L325.5 756.2L326.0 756.4L326.5 756.4L327.0 756.4L327.5 756.3L328.0 756.3L328.5 756.2L329.0 756.3L329.5 756.5L330.0 756.4L330.5 756.2L331.0 756.1L331.5 756.2L332.0 756.3L332.5 756.4L333.0 756.4L333.5 756.3L334.0 756.2L334.5 756.2L335.0 756.3L335.5 756.4L336.0 756.4L336.5 756.3L337.0 756.3L337.5 756.3L338.0 756.2L338.5 756.2L339.0 756.4L339.5 756.4L340.0 756.1L340.5 756.2L341.0 756.4L341.5 756.6L342.0 756.5L342.5 756.3L343.0 756.1L343.5 756.0L344.0 756.3L344.5 756.5L345.0 756.4L345.5 756.1L346.0 756.2L346.5 756.3L347.0 756.4L347.5 756.5L348.0 756.4L348.5 756.2L349.0 756.2L349.5 756.3L350.0 756.5L350.5 756.4L351.0 756.1L351.5 756.1L352.0 756.3L352.5 756.3L353.0 756.3L353.5 756.4L354.0 756.2L354.5 756.1L355.0 756.3L355.5 756.6L356.0 756.5L356.5 756.2L357.0 756.2L357.5 756.3L358.0 756.4L358.5 756.4L359.0 756.3L359.5 756.1L360.0 756.1L360.5 756.3L361.0 756.5L361.5 756.4L362.0 756.1L362.5 756.1L363.0 756.4L363.5 756.5L364.0 756.4L364.5 756.2L365.0 756.1L365.5 756.3L366.0 756.6L366.5 756.4L367.0 756.1L367.5 756.2L368.0 756.5L368.5 756.5L369.0 756.3L369.5 756.1L370.0 756.2L370.5 756.3L371.0 756.4L371.5 756.4L372.0 756.3L372.5 756.3L373.0 756.3L373.5 756.3L374.0 756.3L374.5 756.3L375.0 756.4L375.5 756.3L376.0 756.2L376.5 756.2L377.0 756.2L377.5 756.2L378.0 756.4L378.5 756.6L379.0 756.4L379.5 756.1L380.0 756.1L380.5 756.3L381.0 756.3L381.5 756.3L382.0 756.3L382.5 756.3L383.0 756.4L383.5 756.4L384.0 756.3L384.5 756.3L385.0 756.3L385.5 756.3L386.0 756.3L386.5 756.3L387.0 756.3L387.5 756.2L388.0 756.1L388.5 756.3L389.0 756.4L389.5 756.4L390.0 756.2L390.5 756.2L391.0 756.4L391.5 756.6L392.0 756.3L392.5 755.9L393.0 756.2L393.5 756.6L394.0 756.5L394.5 756.2L395.0 756.1L395.5 756.4L396.0 756.4L396.5 756.3L397.0 756.1L397.5 756.1L398.0 756.3L398.5 756.5L399.0 756.4L399.5 756.2L400.0 756.2L400.5 756.3L401.0 756.4L401.5 756.3L402.0 756.2L402.5 756.5L403.0 756.5L403.5 756.1L404.0 756.0L404.5 756.4L405.0 756.5L405.5 756.4L406.0 756.3L406.5 756.4L407.0 756.3L407.5 756.2L408.0 756.2L408.5 756.2L409.0 756.3L409.5 756.4L410.0 756.3L410.5 756.2L411.0 756.2L411.5 756.3L412.0 756.4L412.5 756.4L413.0 756.3L413.5 756.3L414.0 756.3L414.5 756.3L415.0 756.3L415.5 756.3L416.0 756.3L416.5 756.3L417.0 756.3L417.5 756.3L418.0 756.3L418.5 756.3L419.0 756.3L419.5 756.4L420.0 756.3L420.5 756.2L421.0 756.3L421.5 756.3L422.0 756.3L422.5 756.4L423.0 756.4L423.5 756.3L424.0 756.3L424.5 756.3L425.0 756.3L425.5 756.2L426.0 756.2L426.5 756.4L427.0 756.5L427.5 756.4L428.0 756.2L428.5 756.1L429.0 756.2L429.5 756.4L430.0 756.4L430.5 756.3L431.0 756.3L431.5 756.3L432.0 756.2L432.5 756.2L433.0 756.3L433.5 756.6L434.0 756.5L434.5 756.1L435.0 755.9L435.5 756.1L436.0 756.4L436.5 756.4L437.0 756.2L437.5 756.2L438.0 756.3L438.5 756.5L439.0 756.4L439.5 756.2L440.0 756.2L440.5 756.4L441.0 756.3L441.5 756.1L442.0 756.2L442.5 756.5L443.0 756.5L443.5 756.4L444.0 756.2L444.5 756.2L445.0 756.2L445.5 756.3L446.0 756.4L446.5 756.4L447.0 756.3L447.5 756.3L448.0 756.3L448.5 756.2L449.0 756.2L449.5 756.2L450.0 756.4L450.5 756.6L451.0 756.6L451.5 756.3L452.0 756.1L452.5 756.1L453.0 756.3L453.5 756.4L454.0 756.3L454.5 756.2L455.0 756.2L455.5 756.3L456.0 756.5L456.5 756.6L457.0 756.4L457.5 756.0L458.0 755.9L458.5 756.2L459.0 756.5L459.5 756.5L460.0 756.3L460.5 756.2L461.0 756.3L461.5 756.3L462.0 756.2L462.5 756.2L463.0 756.4L463.5 756.4L464.0 756.2L464.5 756.2L465.0 756.4L465.5 756.5L466.0 756.4L466.5 755.9L467.0 754.2L467.5 754.4L468.0 758.9L468.5 760.7L469.0 756.1L469.5 751.2L470.0 752.9L470.5 759.1L471.0 762.2L471.5 757.9L472.0 752.2L472.5 753.9L473.0 760.3L473.5 760.6L474.0 752.8L474.5 747.4L475.0 752.9L475.5 761.2L476.0 760.9L476.5 755.9L477.0 754.6L477.5 756.8L478.0 758.0L478.5 757.3L479.0 756.6L479.5 756.7L480.0 756.4L480.5 755.4L481.0 754.5L481.5 755.3L482.0 758.1L482.5 759.3L483.0 756.6L483.5 754.0L484.0 755.0L484.5 756.4L485.0 755.9L485.5 755.7L486.0 756.4L486.5 757.2L487.0 757.6L487.5 756.7L488.0 755.8L488.5 756.9L489.0 757.4L489.5 755.8L490.0 755.4L490.5 757.0L491.0 756.4L491.5 754.9L492.0 756.5L492.5 757.2L493.0 754.3L493.5 753.8L494.0 757.8L494.5 759.4L495.0 756.9L495.5 755.8L496.0 756.8L496.5 756.3L497.0 754.8L497.5 755.0L498.0 756.0L498.5 755.8L499.0 755.4L499.5 756.3L500.0 757.0L500.5 757.2L501.0 758.2L501.5 758.6L502.0 757.0L502.5 754.3L503.0 752.8L503.5 754.8L504.0 758.9L504.5 758.9L505.0 754.8L505.5 753.1L506.0 756.3L506.5 759.3L507.0 758.3L507.5 755.9L508.0 755.1L508.5 755.4L509.0 755.0L509.5 755.3L510.0 757.3L510.5 758.4L511.0 757.5L511.5 756.7L512.0 755.9L512.5 754.9L513.0 756.3L513.5 758.3L514.0 756.5L514.5 753.3L515.0 754.0L515.5 757.2L516.0 757.9L516.5 755.8L517.0 755.3L517.5 757.8L518.0 758.7L518.5 755.7L519.0 753.2L519.5 754.9L520.0 758.8L520.5 760.1L521.0 757.0L521.5 753.1L522.0 752.9L522.5 756.5L523.0 759.6L523.5 758.3L524.0 755.0L524.5 754.6L525.0 757.0L525.5 757.9L526.0 756.3L526.5 755.7L527.0 757.3L527.5 757.9L528.0 755.8L528.5 754.3L529.0 755.2L529.5 756.1L530.0 755.4L530.5 755.3L531.0 757.4L531.5 758.6L532.0 757.1L532.5 755.4L533.0 755.2L533.5 755.6L534.0 756.7L534.5 757.1L535.0 755.9L535.5 755.1L536.0 756.3L536.5 757.8L537.0 757.3L537.5 755.7L538.0 756.0L538.5 757.7L539.0 757.3L539.5 754.9L540.0 754.2L540.5 756.6L541.0 758.1L541.5 756.0L542.0 753.9L542.5 755.9L543.0 759.0L543.5 758.3L544.0 755.1L544.5 753.8L545.0 755.2L545.5 756.8L546.0 757.2L546.5 757.0L547.0 756.7L547.5 755.8L548.0 755.1L548.5 755.4L549.0 756.7L549.5 757.9L550.0 757.6L550.5 756.2L551.0 754.9L551.5 754.2L552.0 755.3L552.5 758.0L553.0 758.4L553.5 756.0L554.0 755.7L554.5 757.0L555.0 755.9L555.5 753.6L556.0 754.7L556.5 758.9L557.0 760.0L557.5 755.9L558.0 752.7L558.5 754.3L559.0 757.8L559.5 758.1L560.0 755.5L560.5 754.4L561.0 756.1L561.5 758.0L562.0 757.7L562.5 756.3L563.0 755.9L563.5 755.8L564.0 755.9L564.5 756.5L565.0 756.4L565.5 755.3L566.0 755.7L566.5 756.8L567.0 756.9L567.5 757.2L568.0 757.9L568.5 756.1L569.0 752.6L569.5 753.3L570.0 758.7L570.5 760.9L571.0 756.9L571.5 753.3L572.0 754.2L572.5 757.0L573.0 758.8L573.5 758.0L574.0 754.6L574.5 752.7L575.0 755.4L575.5 759.5L576.0 759.8L576.5 756.1L577.0 753.0L577.5 753.7L578.0 757.2L578.5 759.6L579.0 757.7L579.5 753.7L580.0 753.3L580.5 756.8L581.0 758.5L581.5 757.1L582.0 756.0L582.5 756.4L583.0 756.1L583.5 755.2L584.0 755.0L584.5 756.5L585.0 758.2L585.5 757.1L586.0 754.5L586.5 754.9L587.0 757.2L587.5 757.9L588.0 756.9L588.5 756.2L589.0 756.1L589.5 756.1L590.0 756.1L590.5 755.8L591.0 755.6L591.5 755.7L592.0 755.6L592.5 755.9L593.0 757.3L593.5 757.1L594.0 755.7L594.5 756.6L595.0 759.0L595.5 758.0L596.0 754.2L596.5 753.2L597.0 756.0L597.5 757.8L598.0 756.5L598.5 755.5L599.0 756.3L599.5 756.4L600.0 755.6L600.5 755.9L601.0 757.2L601.5 757.6L602.0 757.1L602.5 756.2L603.0 755.3L603.5 755.3L604.0 756.5L604.5 757.5L605.0 756.9L605.5 754.9L606.0 754.7L606.5 757.6L607.0 758.7L607.5 755.3L608.0 753.0L608.5 755.8L609.0 759.4L609.5 758.6L610.0 755.9L610.5 755.0L611.0 755.2L611.5 755.8L612.0 756.9L612.5 756.8L613.0 756.1L613.5 756.3L614.0 757.0L614.5 757.1L615.0 756.5L615.5 755.1L616.0 754.8L616.5 756.5L617.0 758.0L617.5 758.0L618.0 757.5L618.5 756.3L619.0 753.9L619.5 752.6L620.0 755.4L620.5 759.6L621.0 758.6L621.5 754.3L622.0 753.9L622.5 757.0L623.0 758.3L623.5 756.4L624.0 754.6L624.5 755.5L625.0 757.4L625.5 757.5L626.0 756.3L626.5 755.3L627.0 755.5L627.5 756.2L628.0 756.3L628.5 756.0L629.0 756.2L629.5 756.6L630.0 756.9L630.5 757.6L631.0 757.6L631.5 755.8L632.0 754.1L632.5 754.9L633.0 757.0L633.5 757.5L634.0 757.3L634.5 756.7L635.0 755.0L635.5 754.3L636.0 755.7L636.5 756.3L637.0 755.8L637.5 757.1L638.0 758.8L638.5 757.2L639.0 755.1L639.5 755.9L640.0 757.0L640.5 755.9L641.0 754.6L641.5 754.9L642.0 756.2L642.5 757.6L643.0 758.1L643.5 757.4L644.0 755.9L644.5 754.3L645.0 754.8L645.5 756.8L646.0 757.2L646.5 756.7L647.0 758.0L647.5 758.1L648.0 755.1L648.5 753.1L649.0 754.6L649.5 756.8L650.0 757.4L650.5 757.3L651.0 756.5L651.5 755.3L652.0 755.7L652.5 757.4L653.0 757.7L653.5 756.3L654.0 755.7L654.5 755.7L655.0 755.3L655.5 756.1L656.0 757.5L656.5 757.2L657.0 756.4L657.5 755.9L658.0 755.5L658.5 755.9L659.0 757.0L659.5 757.1L660.0 756.8L660.5 755.9L661.0 754.5L661.5 755.0L662.0 757.4L662.5 757.3L663.0 754.6L663.5 753.9L664.0 756.3L664.5 759.1L665.0 759.4L665.5 757.4L666.0 755.8L666.5 754.5L667.0 754.5L667.5 758.3L668.0 761.2L668.5 757.4L669.0 752.0L669.5 751.9L670.0 755.5L670.5 758.5L671.0 759.1L671.5 758.6L672.0 757.4L672.5 753.8L673.0 749.3L673.5 750.5L674.0 758.5L674.5 764.7L675.0 762.7L675.5 756.7L676.0 752.7L676.5 752.2L677.0 754.8L677.5 757.2L678.0 758.2L678.5 759.5L679.0 759.0L679.5 755.8L680.0 752.8L680.5 750.0L681.0 749.5L681.5 755.4L682.0 763.2L682.5 763.8L683.0 759.3L683.5 755.9L684.0 754.8L684.5 755.4L685.0 755.3L685.5 750.9L686.0 746.3L686.5 753.5L687.0 767.9L687.5 765.8L688.0 747.8L688.5 747.1L689.0 766.1L689.5 771.6L690.0 758.4L690.5 749.2L691.0 747.9L691.5 750.3L692.0 757.8L692.5 762.0L693.0 755.9L693.5 751.0L694.0 756.2L694.5 761.6L695.0 759.4L695.5 756.7L696.0 756.4L696.5 753.7L697.0 751.7L697.5 753.7L698.0 756.1L698.5 755.8L699.0 757.5L699.5 763.3L700.0 762.3L700.5 751.6L701.0 747.2L701.5 755.3L702.0 764.3L702.5 765.6L703.0 759.0L703.5 750.0L704.0 750.5L704.5 759.3L705.0 760.2L705.5 755.0L706.0 756.5L706.5 758.3L707.0 752.4L707.5 749.2L708.0 754.8L708.5 759.3L709.0 757.6L709.5 756.3L710.0 756.2L710.5 754.8L711.0 755.9L711.5 758.8L712.0 757.0L712.5 752.3L713.0 752.7L713.5 758.5L714.0 760.6L714.5 757.2L715.0 757.2L715.5 760.0L716.0 758.0L716.5 752.7L717.0 749.9L717.5 752.2L718.0 758.2L718.5 761.4L719.0 759.2L719.5 757.0L720.0 757.9L720.5 758.9L721.0 756.6L721.5 751.6L722.0 750.3L722.5 756.9L723.0 764.3L723.5 761.3L724.0 750.5L724.5 747.3L725.0 756.0L725.5 763.5L726.0 760.6L726.5 753.3L727.0 751.9L727.5 758.0L728.0 761.9L728.5 758.2L729.0 753.7L729.5 753.3L730.0 753.7L730.5 754.3L731.0 756.0L731.5 756.2L732.0 755.5L732.5 757.7L733.0 761.1L733.5 760.1L734.0 754.6L734.5 752.3L735.0 755.7L735.5 757.8L736.0 756.0L736.5 756.5L737.0 759.0L737.5 758.1L738.0 754.4L738.5 752.3L739.0 752.7L739.5 757.1L740.0 764.0L740.5 763.3L741.0 753.9L741.5 751.6L742.0 757.1L742.5 755.8L743.0 750.9L743.5 754.3L744.0 759.8L744.5 757.3L745.0 753.0L745.5 756.2L746.0 761.0L746.5 758.9L747.0 755.0L747.5 756.5L748.0 758.8L748.5 755.4L749.0 750.3L749.5 751.3L750.0 757.8L750.5 762.1L751.0 759.6L751.5 753.9L752.0 751.3L752.5 753.6L753.0 758.6L753.5 761.6L754.0 758.6L754.5 753.0L755.0 753.4L755.5 758.3L756.0 758.0L756.5 754.0L757.0 754.6L757.5 756.6L758.0 756.2L758.5 756.6L759.0 757.8L759.5 756.9L760.0 755.2L760.5 755.3L761.0 757.0L761.5 758.2L762.0 757.4L762.5 755.5L763.0 753.8L763.5 754.5L764.0 758.3L764.5 759.8L765.0 756.9L765.5 754.7L766.0 755.3L766.5 756.1L767.0 756.2L767.5 756.0L768.0 756.5L768.5 757.3L769.0 756.8L769.5 755.4L770.0 754.8L770.5 755.9L771.0 756.7L771.5 755.9L772.0 755.5L772.5 757.5L773.0 759.6L773.5 757.5L774.0 752.4L774.5 752.0L775.0 758.3L775.5 762.3L776.0 758.8L776.5 754.2L777.0 753.8L777.5 755.7L778.0 756.7L778.5 755.9L779.0 755.2L779.5 756.1L780.0 757.8L780.5 759.4L781.0 759.3L781.5 756.0L782.0 752.5L782.5 752.9L783.0 755.8L783.5 757.9L784.0 758.9L784.5 758.0L785.0 754.9L785.5 753.0L786.0 755.2L786.5 759.4L787.0 761.1L787.5 757.7L788.0 751.9L788.5 750.5L789.0 754.9L789.5 759.3L790.0 760.6L790.5 759.0L791.0 755.6L791.5 754.1L792.0 755.5L792.5 756.2L793.0 756.0L793.5 757.3L794.0 758.5L794.5 756.9L795.0 753.6L795.5 752.9L796.0 756.9L796.5 760.2L797.0 758.7L797.5 756.0L798.0 755.4L798.5 755.5L799.0 755.5L799.5 755.7L800.0 755.9L800.5 756.5L801.0 756.8L801.5 755.5L802.0 755.1L802.5 757.5L803.0 758.6L803.5 756.3L804.0 754.3L804.5 753.6L805.0 754.3L805.5 757.0L806.0 759.4L806.5 759.4L807.0 758.2L807.5 756.5L808.0 754.3L808.5 753.6L809.0 755.7L809.5 757.5L810.0 756.4L810.5 755.1L811.0 756.1L811.5 757.7L812.0 757.3L812.5 755.5L813.0 755.0L813.5 756.3L814.0 756.7L814.5 755.7L815.0 755.7L815.5 757.0L816.0 757.1L816.5 755.7L817.0 754.9L817.5 756.2L818.0 757.7L818.5 756.0L819.0 753.9L819.5 755.7L820.0 758.9L820.5 759.4L821.0 757.9L821.5 757.4L822.0 757.5L822.5 756.0L823.0 753.4L823.5 753.8L824.0 757.3L824.5 758.4L825.0 755.2L825.5 752.8L826.0 755.5L826.5 759.0L827.0 758.7L827.5 756.7L828.0 756.4L828.5 756.3L829.0 755.5L829.5 755.1L830.0 755.3L830.5 755.8L831.0 757.0L831.5 758.2L832.0 758.1L832.5 756.8L833.0 755.4L833.5 755.5L834.0 757.1L834.5 758.2L835.0 757.4L835.5 755.4L836.0 754.5L836.5 754.8L837.0 754.5L837.5 755.2L838.0 757.7L838.5 759.1L839.0 757.9L839.5 755.7L840.0 754.0L840.5 754.1L841.0 756.0L841.5 757.8L842.0 757.3L842.5 755.7L843.0 755.9L843.5 757.0L844.0 756.3L844.5 755.1L845.0 755.7L845.5 757.5L846.0 758.7L846.5 757.7L847.0 756.3L847.5 755.6L848.0 754.6L848.5 754.5L849.0 756.4L849.5 757.4L850.0 756.7L850.5 756.0L851.0 755.5L851.5 755.3L852.0 755.3L852.5 756.1L853.0 758.5L853.5 759.8L854.0 757.3L854.5 754.0L855.0 753.9L855.5 756.8L856.0 759.2L856.5 758.9L857.0 756.8L857.5 754.7L858.0 754.2L858.5 755.8L859.0 757.8L859.5 757.3L860.0 755.1L860.5 754.6L861.0 755.7L861.5 756.0L862.0 755.0L862.5 754.9L863.0 756.4L863.5 757.4L864.0 756.7L864.5 756.3L865.0 757.4L865.5 758.3L866.0 756.8L866.5 754.9L867.0 754.5L867.5 755.3L868.0 756.4L868.5 757.2L869.0 757.5L869.5 757.9L870.0 758.0L870.5 756.6L871.0 754.5L871.5 754.2L872.0 755.8L872.5 757.7L873.0 758.2L873.5 756.9L874.0 755.8L874.5 755.6L875.0 755.1L875.5 754.6L876.0 755.4L876.5 756.6L877.0 756.4L877.5 756.0L878.0 756.6L878.5 757.3L879.0 756.9L879.5 756.0L880.0 756.2L880.5 756.9L881.0 756.7L881.5 756.4L882.0 756.9L882.5 757.3L883.0 756.7L883.5 755.7L884.0 755.2L884.5 755.3L885.0 755.6L885.5 756.2L886.0 757.7L886.5 758.8L887.0 757.9L887.5 755.7L888.0 754.8L888.5 755.8L889.0 756.9L889.5 756.4L890.0 754.5L890.5 754.7L891.0 757.6L891.5 759.2L892.0 757.0L892.5 754.2L893.0 754.1L893.5 755.4L894.0 756.0L894.5 755.9L895.0 755.8L895.5 755.9L896.0 756.3L896.5 756.9L897.0 757.2L897.5 757.1L898.0 757.6L898.5 758.3L899.0 757.8L899.5 755.6L900.0 753.8L900.5 754.5L901.0 756.9L901.5 757.8L902.0 756.8L902.5 755.7L903.0 755.2L903.5 755.1L904.0 755.5L904.5 756.3L905.0 757.2L905.5 757.6L906.0 757.7L906.5 757.7L907.0 757.5L907.5 756.2L908.0 754.5L908.5 753.8L909.0 754.5L909.5 755.9L910.0 757.3L910.5 757.9L911.0 756.9L911.5 755.4L912.0 754.8L912.5 755.2L913.0 755.7L913.5 756.5L914.0 757.5L914.5 758.3L915.0 758.0L915.5 756.7L916.0 755.2L916.5 754.6L917.0 754.7L917.5 755.2L918.0 756.1L918.5 757.4L919.0 758.4L919.5 757.8L920.0 756.1L920.5 755.5L921.0 755.9L921.5 755.8L922.0 755.4L922.5 755.7L923.0 756.2L923.5 756.2L924.0 756.0L924.5 756.5L925.0 757.1L925.5 757.1L926.0 756.8L926.5 756.9L927.0 756.9L927.5 756.1L928.0 755.3L928.5 755.3L929.0 755.9L929.5 756.3L930.0 756.3L930.5 756.0L931.0 755.8L931.5 755.9L932.0 756.5L932.5 757.2L933.0 757.3L933.5 756.2L934.0 755.4L934.5 756.1L935.0 757.0L935.5 756.4L936.0 755.4L936.5 755.8L937.0 757.2L937.5 757.9L938.0 757.7L938.5 757.3L939.0 756.9L939.5 756.6L940.0 756.3L940.5 755.5L941.0 754.5L941.5 754.2L942.0 755.4L942.5 756.9L943.0 757.1L943.5 756.1L944.0 755.2L944.5 755.2L945.0 755.5L945.5 756.1L946.0 757.2L946.5 758.4L947.0 758.9L947.5 758.5L948.0 757.3L948.5 755.5L949.0 753.9L949.5 752.9L950.0 753.4L950.5 754.9L951.0 756.3L951.5 757.8L952.0 759.6L952.5 760.8L953.0 759.8L953.5 756.6L954.0 753.6L954.5 752.6L955.0 753.6L955.5 755.2L956.0 756.6L956.5 757.6L957.0 758.3L957.5 758.3L958.0 757.4L958.5 756.3L959.0 755.9L959.5 756.0L960.0 756.1L960.5 755.9L961.0 755.9L961.5 756.3L962.0 756.3L962.5 755.6L963.0 754.9L963.5 754.9L964.0 755.7L964.5 756.6L965.0 756.8L965.5 756.6L966.0 756.5L966.5 756.4L967.0 756.3L967.5 756.2L968.0 755.9L968.5 755.9L969.0 756.0L969.5 756.0L970.0 756.3L970.5 756.9L971.0 757.0L971.5 756.7L972.0 756.5L972.5 756.2L973.0 755.7L973.5 755.2L974.0 755.1L974.5 755.6L975.0 756.0L975.5 756.0L976.0 755.9L976.5 756.1L977.0 756.4L977.5 757.3L978.0 758.2L978.5 758.3L979.0 757.5L979.5 756.7L980.0 755.8L980.5 755.0L981.0 754.8L981.5 755.3L982.0 756.1L982.5 756.7L983.0 756.9L983.5 757.1L984.0 757.3L984.5 756.7L985.0 755.3L985.5 754.2L986.0 754.8L986.5 755.9L987.0 756.6L987.5 757.0L988.0 757.7L988.5 758.1L989.0 757.3L989.5 756.1L990.0 755.8L990.5 755.9L991.0 755.6L991.5 755.1L992.0 755.6L992.5 756.6L993.0 757.0L993.5 756.7L994.0 756.3L994.5 756.0L995.0 755.8L995.5 756.2L996.0 756.6L996.5 756.7L997.0 756.6L997.5 756.3L998.0 756.0L998.5 755.8L999.0 755.7L999.5 755.8L1000.0 756.0L1000.5 756.2L1001.0 756.6L1001.5 757.0L1002.0 757.0L1002.5 756.8L1003.0 756.6L1003.5 756.3L1004.0 756.1L1004.5 756.3L1005.0 756.6L1005.5 756.7L1006.0 756.7L1006.5 756.1L1007.0 755.1L1007.5 754.7L1008.0 756.0L1008.5 757.3L1009.0 757.2L1009.5 756.5L1010.0 755.8L1010.5 755.4L1011.0 755.3L1011.5 755.7L1012.0 756.6L1012.5 757.5L1013.0 757.9L1013.5 757.5L1014.0 756.7L1014.5 756.2L1015.0 756.0L1015.5 755.9L1016.0 756.0L1016.5 756.4L1017.0 756.5L1017.5 756.1L1018.0 755.8L1018.5 755.9L1019.0 756.1L1019.5 756.2L1020.0 756.5L1020.5 756.7L1021.0 756.7L1021.5 756.7L1022.0 756.6L1022.5 756.5L1023.0 756.3L1023.5 756.5L1024.0 756.8L1024.5 756.9L1025.0 756.6L1025.5 755.9L1026.0 755.4L1026.5 755.3L1027.0 755.7L1027.5 756.2L1028.0 756.5L1028.5 756.7L1029.0 756.8L1029.5 756.4L1030.0 755.6L1030.5 755.0L1031.0 755.1L1031.5 756.0L1032.0 756.8L1032.5 757.0L1033.0 756.4L1033.5 756.2L1034.0 756.8L1034.5 757.3L1035.0 757.2L1035.5 756.9L1036.0 756.4L1036.5 755.4L1037.0 754.8L1037.5 755.2L1038.0 756.0L1038.5 756.3L1039.0 756.1L1039.5 756.1L1040.0 756.5L1040.5 756.8L1041.0 756.7L1041.5 756.7L1042.0 757.0L1042.5 757.0L1043.0 756.4L1043.5 755.7L1044.0 755.7L1044.5 756.3L1045.0 756.5L1045.5 756.2L1046.0 756.0L1046.5 756.2L1047.0 756.5L1047.5 757.0L1048.0 757.0L1048.5 756.2L1049.0 755.5L1049.5 755.6L1050.0 755.9L1050.5 756.3L1051.0 757.0L1051.5 757.4L1052.0 757.2L1052.5 756.8L1053.0 756.6L1053.5 756.4L1054.0 756.0L1054.5 755.7L1055.0 755.7L1055.5 756.0L1056.0 756.2L1056.5 756.3L1057.0 756.3L1057.5 756.2L1058.0 756.0L1058.5 756.0L1059.0 756.3L1059.5 756.4L1060.0 756.1L1060.5 756.2L1061.0 757.1L1061.5 757.6L1062.0 757.0L1062.5 755.8L1063.0 755.1L1063.5 755.4L1064.0 755.9L1064.5 756.3L1065.0 756.8L1065.5 757.0L1066.0 756.8L1066.5 756.6L1067.0 756.9L1067.5 757.1L1068.0 756.8L1068.5 756.2L1069.0 755.6L1069.5 755.2L1070.0 755.2L1070.5 755.3L1071.0 755.8L1071.5 756.8L1072.0 757.4L1072.5 757.4L1073.0 756.7L1073.5 755.7L1074.0 755.2L1074.5 755.7L1075.0 756.5L1075.5 757.0L1076.0 757.4L1076.5 757.5L1077.0 756.8L1077.5 755.9L1078.0 755.6L1078.5 755.9L1079.0 756.0L1079.5 756.2L1080.0 757.0L1080.5 757.5L1081.0 756.9L1081.5 755.9L1082.0 756.0L1082.5 757.0L1083.0 757.5L1083.5 756.9L1084.0 755.8L1084.5 754.8L1085.0 754.5L1085.5 755.0L1086.0 755.9L1086.5 757.0L1087.0 757.5L1087.5 757.2L1088.0 756.7L1088.5 756.5L1089.0 756.2L1089.5 755.6L1090.0 755.5L1090.5 756.1L1091.0 756.7L1091.5 756.9L1092.0 757.1L1092.5 757.2L1093.0 756.6L1093.5 755.7L1094.0 755.2L1094.5 754.9L1095.0 754.8L1095.5 755.4L1096.0 756.6L1096.5 757.3L1097.0 757.1L1097.5 756.4L1098.0 756.2L1098.5 756.3L1099.0 756.5L1099.5 756.6L1100.0 756.6L1100.5 756.5L1101.0 756.3L1101.5 756.4L1102.0 756.5L1102.5 756.3L1103.0 756.1L1103.5 756.2L1104.0 756.5L1104.5 756.5L1105.0 756.3L1105.5 756.1L1106.0 756.0L1106.5 756.0L1107.0 756.5L1107.5 757.0L1108.0 757.1L1108.5 756.7L1109.0 756.0L1109.5 755.3L1110.0 755.5L1110.5 756.4L1111.0 756.9L1111.5 756.3L1112.0 755.4L1112.5 755.1L1113.0 755.6L1113.5 756.1L1114.0 756.4L1114.5 756.7L1115.0 757.1L1115.5 757.3L1116.0 756.9L1116.5 756.3L1117.0 756.0L1117.5 756.2L1118.0 756.5L1118.5 756.4L1119.0 756.4L1119.5 756.7L1120.0 757.1L1120.5 757.1L1121.0 756.5L1121.5 756.0L1122.0 755.9L1122.5 756.1L1123.0 755.9L1123.5 755.4L1124.0 755.3L1124.5 756.1L1125.0 757.1L1125.5 757.6L1126.0 757.3L1126.5 756.3L1127.0 755.4L1127.5 755.4L1128.0 755.8L1128.5 756.2L1129.0 756.5L1129.5 756.4L1130.0 756.1L1130.5 756.0L1131.0 756.2L1131.5 756.9L1132.0 757.4L1132.5 756.8L1133.0 755.6L1133.5 755.2L1134.0 755.7L1134.5 755.9L1135.0 755.8L1135.5 756.3L1136.0 757.3L1136.5 757.6L1137.0 756.8L1137.5 755.7L1138.0 755.3L1138.5 755.9L1139.0 756.3L1139.5 756.5L1140.0 756.8L1140.5 757.2L1141.0 757.1L1141.5 756.8L1142.0 756.4L1142.5 756.0L1143.0 755.9L1143.5 756.4L1144.0 756.8L1144.5 756.5L1145.0 756.0L1145.5 755.8L1146.0 756.1L1146.5 756.6L1147.0 756.9L1147.5 756.6L1148.0 756.2L1148.5 755.7L1149.0 755.8L1149.5 756.3L1150.0 756.6L1150.5 756.4L1151.0 756.1L1151.5 756.1L1152.0 756.6L1152.5 757.1L1153.0 757.1L1153.5 756.7L1154.0 756.1L1154.5 755.9L1155.0 756.1L1155.5 756.0L1156.0 755.7L1156.5 755.6L1157.0 755.8L1157.5 756.3L1158.0 756.8L1158.5 756.9L1159.0 756.8L1159.5 756.6L1160.0 756.2L1160.5 755.7L1161.0 755.5L1161.5 756.0L1162.0 756.8L1162.5 757.6L1163.0 757.6L1163.5 756.9L1164.0 756.3L1164.5 756.0L1165.0 755.5L1165.5 754.6L1166.0 754.6L1166.5 755.5L1167.0 756.6L1167.5 757.1L1168.0 756.9L1168.5 756.6L1169.0 756.7L1169.5 756.9L1170.0 756.8L1170.5 756.3L1171.0 755.9L1171.5 755.8L1172.0 756.1L1172.5 756.4L1173.0 756.6L1173.5 756.7L1174.0 756.7L1174.5 756.3L1175.0 755.7L1175.5 755.6L1176.0 756.3L1176.5 756.9L1177.0 756.6L1177.5 756.0L1178.0 755.8L1178.5 756.2L1179.0 756.4L1179.5 756.1L1180.0 756.2L1180.5 756.5L1181.0 756.4L1181.5 755.9L1182.0 755.8L1182.5 756.1L1183.0 756.5L1183.5 756.9L1184.0 757.2L1184.5 757.0L1185.0 756.5L1185.5 756.0L1186.0 755.9L1186.5 755.9L1187.0 756.2L1187.5 756.5L1188.0 756.6L1188.5 756.2L1189.0 755.9L1189.5 756.1L1190.0 756.5L1190.5 756.5L1191.0 756.4L1191.5 756.4L1192.0 756.5L1192.5 756.4L1193.0 756.0L1193.5 755.9L1194.0 756.2L1194.5 756.2L1195.0 755.9L1195.5 755.8L1196.0 756.1L1196.5 756.1L1197.0 755.7L1197.5 755.5L1198.0 756.0L1198.5 756.9L1199.0 757.3L1199.5 757.1L1200.0 756.9L1200.5 756.5L1201.0 756.1L1201.5 756.3L1202.0 756.8L1202.5 756.7L1203.0 756.3L1203.5 756.0L1204.0 755.7L1204.5 755.7L1205.0 755.8L1205.5 755.8L1206.0 755.7L1206.5 756.1L1207.0 756.9L1207.5 757.5L1208.0 757.1L1208.5 756.3L1209.0 756.0L1209.5 756.0L1210.0 755.9L1210.5 755.8L1211.0 756.1L1211.5 756.4L1212.0 756.8L1212.5 756.8L1213.0 756.5L1213.5 756.2L1214.0 756.0L1214.5 756.0L1215.0 756.0L1215.5 756.1L1216.0 756.1L1216.5 756.4L1217.0 757.2L1217.5 757.6L1218.0 757.2L1218.5 756.4L1219.0 755.9L1219.5 755.8L1220.0 756.0L1220.5 756.1L1221.0 755.9L1221.5 755.8L1222.0 756.0L1222.5 756.2L1223.0 756.3L1223.5 755.9L1224.0 755.6L1224.5 755.7L1225.0 756.1L1225.5 756.6L1226.0 757.2L1226.5 757.4L1227.0 756.9L1227.5 756.2L1228.0 755.9L1228.5 755.8L1229.0 756.0L1229.5 756.2L1230.0 756.0L1230.5 755.7L1231.0 756.1L1231.5 756.9L1232.0 757.0" stroke="#7a7a7a" stroke-width="1" fill="none" stroke-linejoin="round"/><g shape-rendering="crispEdges"><rect x="154" y="739" width="37" height="36" fill="#9494b6"/><rect x="191" y="739" width="229" height="36" fill="#9c9cc6"/><rect x="1212" y="739" width="191" height="36" fill="#8080a0"/><path d="M154 756.5H420" stroke="#606070" stroke-opacity=".8"/><path d="M190.5 739V775" stroke="#000" stroke-opacity=".2" stroke-dasharray="4 3"/><path d="M328.5 739V775" stroke="#000" stroke-opacity=".2" stroke-dasharray="4 3"/><path d="M1294.5 739V775" stroke="#000" stroke-opacity=".2" stroke-dasharray="4 3"/><path d="M1212 756.5H1232" stroke="#505060" stroke-opacity=".7"/><path d="M462.5 739V775" stroke="#0000c0" stroke-width="1"/><path d="M466.5 739V775" stroke="#b40000" stroke-width="1"/><path d="M665.5 739V775" stroke="#0000c0" stroke-width="1"/><path d="M696.5 739V775" stroke="#f2f2ff" stroke-width="1"/><path d="M688.5 739V775" stroke="#00a000" stroke-width="1"/></g><text transform="translate(464.2 772.8) scale(.84 1)" style="font-size:15.200px" fill="#0000c0">P</text><text transform="translate(667.2 772.8) scale(.84 1)" style="font-size:15.200px" fill="#0000c0">S</text><g shape-rendering="crispEdges"><rect x="420" y="765" width="792" height="10" fill="rgb(105,205,100)" fill-opacity="0.44"/><rect x="1212" y="765" width="22" height="10" fill="#8a8aaa"/></g><text x="158" y="756.1" text-anchor="start" fill="#bcbcc6" >amax: 3.5 M</text><text x="158" y="771.4" text-anchor="start" fill="#bcbcc6" >mean: 37.9</text><text x="698.5" y="754.8" text-anchor="start" fill="#f2f2ff" style="letter-spacing:-.25px">MLv: 4.32</text><text x="690.5" y="754.8" text-anchor="start" fill="#14a014" style="letter-spacing:-.25px">MLv: 4.17</text><g shape-rendering="crispEdges"><rect x="154" y="777" width="1249" height="36" fill="#fff"/><path d="M190.5 777V813" stroke="#000" stroke-opacity=".15" stroke-dasharray="4 3"/><path d="M328.5 777V813" stroke="#000" stroke-opacity=".15" stroke-dasharray="4 3"/><path d="M466.5 777V813" stroke="#000" stroke-opacity=".15" stroke-dasharray="4 3"/><path d="M604.5 777V813" stroke="#000" stroke-opacity=".15" stroke-dasharray="4 3"/><path d="M742.5 777V813" stroke="#000" stroke-opacity=".15" stroke-dasharray="4 3"/><path d="M880.5 777V813" stroke="#000" stroke-opacity=".15" stroke-dasharray="4 3"/><path d="M1018.5 777V813" stroke="#000" stroke-opacity=".15" stroke-dasharray="4 3"/><path d="M1156.5 777V813" stroke="#000" stroke-opacity=".15" stroke-dasharray="4 3"/><path d="M1294.5 777V813" stroke="#000" stroke-opacity=".15" stroke-dasharray="4 3"/><path d="M154 794.5H1403" stroke="#aaaacc" stroke-opacity=".3"/></g><path d="M154.0 793.4L154.5 793.7L155.0 793.8L155.5 793.7L156.0 793.7L156.5 793.7L157.0 793.8L157.5 793.8L158.0 793.7L158.5 793.6L159.0 793.7L159.5 793.8L160.0 793.7L160.5 793.7L161.0 793.7L161.5 793.7L162.0 793.7L162.5 793.7L163.0 793.6L163.5 793.7L164.0 793.8L164.5 793.8L165.0 793.6L165.5 793.6L166.0 793.7L166.5 793.8L167.0 793.8L167.5 793.7L168.0 793.6L168.5 793.7L169.0 793.9L169.5 793.8L170.0 793.5L170.5 793.5L171.0 793.8L171.5 793.8L172.0 793.6L172.5 793.7L173.0 793.9L173.5 793.9L174.0 793.8L174.5 793.6L175.0 793.4L175.5 793.5L176.0 793.8L176.5 793.9L177.0 793.8L177.5 793.7L178.0 793.7L178.5 793.7L179.0 793.7L179.5 793.6L180.0 793.7L180.5 793.7L181.0 793.7L181.5 793.7L182.0 793.7L182.5 793.8L183.0 793.7L183.5 793.5L184.0 793.6L184.5 793.8L185.0 793.8L185.5 793.8L186.0 793.6L186.5 793.5L187.0 793.6L187.5 793.9L188.0 793.8L188.5 793.6L189.0 793.6L189.5 793.8L190.0 793.9L190.5 793.9L191.0 793.7L191.5 793.5L192.0 793.5L192.5 793.7L193.0 793.8L193.5 793.7L194.0 793.7L194.5 793.7L195.0 793.8L195.5 793.6L196.0 793.5L196.5 793.7L197.0 793.9L197.5 793.8L198.0 793.6L198.5 793.6L199.0 793.8L199.5 793.8L200.0 793.7L200.5 793.7L201.0 793.7L201.5 793.8L202.0 793.7L202.5 793.4L203.0 793.5L203.5 793.9L204.0 794.0L204.5 793.8L205.0 793.5L205.5 793.6L206.0 793.7L206.5 793.7L207.0 793.7L207.5 793.6L208.0 793.6L208.5 793.7L209.0 793.8L209.5 793.7L210.0 793.6L210.5 793.7L211.0 793.8L211.5 793.8L212.0 793.7L212.5 793.5L213.0 793.6L213.5 793.8L214.0 793.9L214.5 793.9L215.0 793.7L215.5 793.5L216.0 793.4L216.5 793.6L217.0 793.8L217.5 793.9L218.0 793.7L218.5 793.5L219.0 793.6L219.5 793.9L220.0 793.9L220.5 793.6L221.0 793.5L221.5 793.6L222.0 793.8L222.5 793.9L223.0 793.9L223.5 793.6L224.0 793.5L224.5 793.6L225.0 793.8L225.5 793.9L226.0 793.8L226.5 793.7L227.0 793.7L227.5 793.7L228.0 793.7L228.5 793.8L229.0 793.8L229.5 793.7L230.0 793.5L230.5 793.7L231.0 793.8L231.5 793.8L232.0 793.6L232.5 793.6L233.0 793.8L233.5 794.0L234.0 793.7L234.5 793.2L235.0 793.4L235.5 794.1L236.0 794.1L236.5 793.7L237.0 793.6L237.5 793.7L238.0 793.7L238.5 793.7L239.0 793.7L239.5 793.6L240.0 793.7L240.5 793.9L241.0 793.9L241.5 793.6L242.0 793.5L242.5 793.7L243.0 793.7L243.5 793.8L244.0 793.8L244.5 793.6L245.0 793.6L245.5 793.7L246.0 793.9L246.5 793.9L247.0 793.8L247.5 793.6L248.0 793.5L248.5 793.6L249.0 793.7L249.5 793.7L250.0 793.8L250.5 793.9L251.0 793.8L251.5 793.5L252.0 793.3L252.5 793.5L253.0 793.9L253.5 794.0L254.0 793.8L254.5 793.6L255.0 793.6L255.5 793.6L256.0 793.7L256.5 793.7L257.0 793.7L257.5 793.7L258.0 793.7L258.5 793.7L259.0 793.7L259.5 793.8L260.0 793.8L260.5 793.8L261.0 793.6L261.5 793.5L262.0 793.6L262.5 793.8L263.0 793.8L263.5 793.7L264.0 793.6L264.5 793.7L265.0 793.8L265.5 793.9L266.0 793.9L266.5 793.8L267.0 793.6L267.5 793.5L268.0 793.5L268.5 793.7L269.0 793.8L269.5 793.7L270.0 793.5L270.5 793.6L271.0 793.8L271.5 793.9L272.0 793.8L272.5 793.7L273.0 793.6L273.5 793.6L274.0 793.6L274.5 793.7L275.0 793.7L275.5 793.7L276.0 793.6L276.5 793.7L277.0 793.9L277.5 793.8L278.0 793.6L278.5 793.5L279.0 793.7L279.5 793.9L280.0 793.8L280.5 793.6L281.0 793.4L281.5 793.5L282.0 794.0L282.5 794.1L283.0 793.8L283.5 793.5L284.0 793.4L284.5 793.6L285.0 793.7L285.5 793.8L286.0 793.8L286.5 793.8L287.0 793.6L287.5 793.6L288.0 793.7L288.5 793.8L289.0 793.7L289.5 793.6L290.0 793.7L290.5 793.8L291.0 793.8L291.5 793.7L292.0 793.6L292.5 793.7L293.0 793.8L293.5 793.8L294.0 793.8L294.5 793.6L295.0 793.4L295.5 793.5L296.0 793.9L296.5 794.1L297.0 793.8L297.5 793.5L298.0 793.5L298.5 793.7L299.0 793.9L299.5 793.8L300.0 793.5L300.5 793.5L301.0 793.8L301.5 793.9L302.0 793.7L302.5 793.4L303.0 793.5L303.5 793.8L304.0 793.8L304.5 793.6L305.0 793.6L305.5 793.9L306.0 794.0L306.5 793.7L307.0 793.6L307.5 793.6L308.0 793.6L308.5 793.7L309.0 793.8L309.5 793.9L310.0 793.6L310.5 793.5L311.0 793.7L311.5 794.0L312.0 793.8L312.5 793.5L313.0 793.5L313.5 793.8L314.0 793.9L314.5 793.8L315.0 793.8L315.5 793.7L316.0 793.5L316.5 793.7L317.0 793.8L317.5 793.7L318.0 793.5L318.5 793.6L319.0 793.8L319.5 793.7L320.0 793.7L320.5 793.7L321.0 793.6L321.5 793.6L322.0 793.8L322.5 793.9L323.0 793.7L323.5 793.6L324.0 793.6L324.5 793.7L325.0 793.7L325.5 793.7L326.0 793.9L326.5 793.9L327.0 793.6L327.5 793.4L328.0 793.8L328.5 793.9L329.0 793.6L329.5 793.4L330.0 793.6L330.5 794.0L331.0 793.9L331.5 793.6L332.0 793.6L332.5 793.7L333.0 793.7L333.5 793.6L334.0 793.6L334.5 793.7L335.0 793.7L335.5 793.8L336.0 794.0L336.5 793.9L337.0 793.6L337.5 793.5L338.0 793.7L338.5 793.8L339.0 793.6L339.5 793.6L340.0 793.6L340.5 793.6L341.0 793.7L341.5 793.8L342.0 793.8L342.5 793.7L343.0 793.6L343.5 793.7L344.0 793.8L344.5 793.8L345.0 793.7L345.5 793.7L346.0 793.7L346.5 793.6L347.0 793.6L347.5 793.7L348.0 793.7L348.5 793.7L349.0 793.7L349.5 793.7L350.0 793.7L350.5 793.7L351.0 793.7L351.5 793.7L352.0 793.6L352.5 793.6L353.0 793.7L353.5 793.9L354.0 793.9L354.5 793.7L355.0 793.5L355.5 793.4L356.0 793.6L356.5 793.8L357.0 793.9L357.5 793.9L358.0 793.7L358.5 793.6L359.0 793.6L359.5 793.7L360.0 793.8L360.5 793.8L361.0 793.6L361.5 793.6L362.0 793.6L362.5 793.7L363.0 793.8L363.5 793.9L364.0 793.8L364.5 793.6L365.0 793.6L365.5 793.8L366.0 793.7L366.5 793.5L367.0 793.6L367.5 794.0L368.0 794.0L368.5 793.6L369.0 793.4L369.5 793.5L370.0 793.7L370.5 793.8L371.0 793.8L371.5 793.8L372.0 793.7L372.5 793.6L373.0 793.7L373.5 793.7L374.0 793.8L374.5 793.8L375.0 793.6L375.5 793.4L376.0 793.6L376.5 793.9L377.0 793.9L377.5 793.5L378.0 793.4L378.5 793.7L379.0 794.0L379.5 793.9L380.0 793.7L380.5 793.6L381.0 793.5L381.5 793.6L382.0 793.8L382.5 793.8L383.0 793.6L383.5 793.5L384.0 793.7L384.5 793.9L385.0 794.0L385.5 793.8L386.0 793.5L386.5 793.3L387.0 793.4L387.5 793.6L388.0 793.9L388.5 793.9L389.0 793.7L389.5 793.6L390.0 793.7L390.5 793.9L391.0 793.8L391.5 793.6L392.0 793.7L392.5 793.7L393.0 793.7L393.5 793.7L394.0 793.7L394.5 793.6L395.0 793.6L395.5 793.7L396.0 793.8L396.5 793.8L397.0 793.8L397.5 793.7L398.0 793.7L398.5 793.7L399.0 793.6L399.5 793.6L400.0 793.7L400.5 793.8L401.0 793.8L401.5 793.7L402.0 793.5L402.5 793.5L403.0 793.8L403.5 793.9L404.0 793.8L404.5 793.6L405.0 793.6L405.5 793.7L406.0 793.8L406.5 793.7L407.0 793.7L407.5 793.7L408.0 793.7L408.5 793.5L409.0 793.5L409.5 793.7L410.0 794.0L410.5 793.9L411.0 793.7L411.5 793.5L412.0 793.6L412.5 793.8L413.0 793.8L413.5 793.6L414.0 793.7L414.5 793.8L415.0 793.7L415.5 793.5L416.0 793.5L416.5 793.7L417.0 793.9L417.5 794.0L418.0 793.8L418.5 793.6L419.0 793.6L419.5 793.7L420.0 793.6L420.5 793.6L421.0 793.7L421.5 793.8L422.0 793.7L422.5 793.6L423.0 793.6L423.5 793.7L424.0 793.9L424.5 793.9L425.0 793.8L425.5 793.6L426.0 793.6L426.5 793.7L427.0 793.7L427.5 793.7L428.0 793.6L428.5 793.8L429.0 793.9L429.5 793.7L430.0 793.5L430.5 793.6L431.0 793.9L431.5 793.8L432.0 793.5L432.5 793.5L433.0 793.8L433.5 793.9L434.0 793.7L434.5 793.5L435.0 793.6L435.5 793.8L436.0 793.9L436.5 793.7L437.0 793.5L437.5 793.6L438.0 793.8L438.5 793.8L439.0 793.7L439.5 793.7L440.0 793.8L440.5 793.8L441.0 793.6L441.5 793.6L442.0 793.7L442.5 793.7L443.0 793.7L443.5 793.6L444.0 793.6L444.5 793.6L445.0 793.8L445.5 793.9L446.0 793.9L446.5 793.7L447.0 793.6L447.5 793.6L448.0 793.6L448.5 793.6L449.0 793.7L449.5 793.7L450.0 793.8L450.5 793.9L451.0 793.7L451.5 793.6L452.0 793.6L452.5 793.7L453.0 793.8L453.5 793.7L454.0 793.7L454.5 793.6L455.0 793.7L455.5 793.9L456.0 793.9L456.5 793.6L457.0 793.4L457.5 793.6L458.0 793.8L458.5 793.9L459.0 793.8L459.5 793.6L460.0 793.4L460.5 793.7L461.0 793.9L461.5 793.7L462.0 793.6L462.5 793.7L463.0 793.8L463.5 793.7L464.0 793.6L464.5 793.7L465.0 794.0L465.5 793.9L466.0 793.5L466.5 791.1L467.0 791.7L467.5 794.9L468.0 795.3L468.5 794.6L469.0 795.5L469.5 794.4L470.0 791.7L470.5 792.8L471.0 795.6L471.5 793.8L472.0 790.8L472.5 792.8L473.0 794.7L473.5 792.5L474.0 791.3L474.5 794.5L475.0 799.7L475.5 800.6L476.0 792.6L476.5 786.0L477.0 792.5L477.5 800.5L478.0 796.8L478.5 790.3L479.0 790.4L479.5 793.4L480.0 795.7L480.5 795.6L481.0 792.9L481.5 791.6L482.0 793.9L482.5 796.0L483.0 794.1L483.5 791.1L484.0 792.2L484.5 795.3L485.0 796.0L485.5 794.3L486.0 793.4L486.5 793.5L487.0 793.2L487.5 792.7L488.0 793.7L488.5 795.3L489.0 794.5L489.5 792.1L490.0 791.2L490.5 792.1L491.0 793.9L491.5 795.9L492.0 796.6L492.5 795.0L493.0 792.5L493.5 792.4L494.0 794.3L494.5 794.6L495.0 792.6L495.5 791.8L496.0 793.3L496.5 795.1L497.0 795.1L497.5 793.3L498.0 792.6L498.5 793.5L499.0 793.1L499.5 792.3L500.0 793.6L500.5 795.7L501.0 795.9L501.5 794.7L502.0 793.2L502.5 792.2L503.0 793.1L503.5 794.6L504.0 793.7L504.5 791.5L505.0 791.2L505.5 793.5L506.0 795.7L506.5 796.1L507.0 795.0L507.5 793.4L508.0 792.3L508.5 792.6L509.0 793.0L509.5 793.0L510.0 793.7L510.5 795.3L511.0 795.9L511.5 795.0L512.0 793.4L512.5 792.5L513.0 793.1L513.5 793.0L514.0 791.7L514.5 792.9L515.0 796.5L515.5 797.0L516.0 793.4L516.5 790.5L517.0 791.7L517.5 794.9L518.0 795.6L518.5 793.2L519.0 791.9L519.5 793.3L520.0 794.4L520.5 794.5L521.0 794.6L521.5 793.5L522.0 792.3L522.5 793.8L523.0 795.6L523.5 794.5L524.0 792.2L524.5 792.7L525.0 795.0L525.5 794.7L526.0 792.0L526.5 790.9L527.0 792.9L527.5 795.8L528.0 796.2L528.5 793.4L529.0 791.6L529.5 793.4L530.0 795.1L530.5 793.9L531.0 792.6L531.5 793.7L532.0 794.9L532.5 793.9L533.0 793.0L533.5 793.5L534.0 793.9L534.5 793.2L535.0 793.4L535.5 795.3L536.0 795.8L536.5 793.3L537.0 791.6L537.5 792.8L538.0 794.5L538.5 794.8L539.0 794.4L539.5 793.4L540.0 792.3L540.5 793.2L541.0 794.6L541.5 794.2L542.0 792.7L542.5 792.6L543.0 793.6L543.5 793.8L544.0 793.7L544.5 794.7L545.0 794.8L545.5 792.7L546.0 791.4L546.5 793.7L547.0 796.6L547.5 795.6L548.0 792.9L548.5 792.8L549.0 794.3L549.5 794.2L550.0 792.5L550.5 792.1L551.0 793.8L551.5 795.3L552.0 794.7L552.5 792.7L553.0 791.5L553.5 792.8L554.0 795.0L554.5 795.2L555.0 794.6L555.5 795.1L556.0 794.5L556.5 791.2L557.0 789.5L557.5 792.9L558.0 797.1L558.5 796.7L559.0 793.3L559.5 792.6L560.0 795.2L560.5 795.6L561.0 792.2L561.5 790.0L562.0 791.9L562.5 795.0L563.0 796.1L563.5 795.2L564.0 794.1L564.5 793.5L565.0 793.2L565.5 793.2L566.0 793.0L566.5 792.4L567.0 792.8L567.5 795.0L568.0 796.0L568.5 793.5L569.0 791.0L569.5 792.4L570.0 795.3L570.5 795.6L571.0 794.2L571.5 793.7L572.0 793.6L572.5 792.9L573.0 792.9L573.5 793.7L574.0 793.2L574.5 793.2L575.0 794.8L575.5 794.8L576.0 793.1L576.5 793.3L577.0 795.0L577.5 794.6L578.0 792.0L578.5 791.3L579.0 793.7L579.5 794.9L580.0 793.9L580.5 794.1L581.0 795.5L581.5 795.6L582.0 793.7L582.5 792.0L583.0 791.7L583.5 792.1L584.0 793.2L584.5 795.0L585.0 795.6L585.5 794.4L586.0 792.7L586.5 792.5L587.0 794.0L587.5 795.0L588.0 793.9L588.5 792.5L589.0 792.8L589.5 793.7L590.0 794.1L590.5 794.2L591.0 794.6L591.5 795.0L592.0 794.1L592.5 792.1L593.0 791.5L593.5 793.7L594.0 795.8L594.5 794.8L595.0 792.6L595.5 792.9L596.0 794.2L596.5 793.6L597.0 792.9L597.5 793.7L598.0 794.1L598.5 794.1L599.0 794.3L599.5 793.5L600.0 792.3L600.5 792.6L601.0 793.5L601.5 793.7L602.0 793.9L602.5 794.6L603.0 794.8L603.5 793.9L604.0 793.6L604.5 794.6L605.0 794.8L605.5 793.9L606.0 793.5L606.5 792.7L607.0 790.9L607.5 791.6L608.0 795.2L608.5 796.2L609.0 793.0L609.5 792.4L610.0 796.0L610.5 797.3L611.0 793.9L611.5 791.2L612.0 791.6L612.5 792.6L613.0 793.6L613.5 794.4L614.0 794.2L614.5 793.3L615.0 792.9L615.5 793.0L616.0 794.3L616.5 796.4L617.0 795.6L617.5 791.4L618.0 789.4L618.5 792.6L619.0 796.3L619.5 795.8L620.0 793.5L620.5 793.1L621.0 793.2L621.5 792.6L622.0 793.1L622.5 794.3L623.0 794.2L623.5 793.3L624.0 793.9L624.5 795.7L625.0 795.0L625.5 791.8L626.0 791.0L626.5 793.9L627.0 795.8L627.5 793.8L628.0 791.6L628.5 792.5L629.0 795.2L629.5 796.9L630.0 795.7L630.5 792.1L631.0 789.5L631.5 790.9L632.0 794.5L632.5 796.7L633.0 795.9L633.5 794.3L634.0 794.0L634.5 793.8L635.0 792.3L635.5 791.0L636.0 792.1L636.5 794.1L637.0 794.8L637.5 794.9L638.0 795.3L638.5 794.6L639.0 793.3L639.5 792.6L640.0 792.8L640.5 794.0L641.0 795.5L641.5 794.9L642.0 792.0L642.5 790.4L643.0 792.5L643.5 795.8L644.0 796.9L644.5 795.0L645.0 791.6L645.5 790.2L646.0 792.4L646.5 795.5L647.0 795.4L647.5 793.5L648.0 793.6L648.5 795.0L649.0 794.4L649.5 792.4L650.0 792.3L650.5 794.7L651.0 796.3L651.5 794.2L652.0 790.9L652.5 791.1L653.0 794.2L653.5 796.5L654.0 795.6L654.5 792.6L655.0 791.0L655.5 792.4L656.0 794.5L656.5 794.9L657.0 793.8L657.5 793.5L658.0 795.0L658.5 796.1L659.0 793.9L659.5 790.8L660.0 791.3L660.5 794.0L661.0 794.7L661.5 794.0L662.0 794.2L662.5 794.2L663.0 793.2L663.5 792.6L664.0 793.2L664.5 793.5L665.0 793.4L665.5 793.6L666.0 793.8L666.5 794.0L667.0 795.2L667.5 795.6L668.0 793.5L668.5 791.7L669.0 792.0L669.5 792.7L670.0 792.9L670.5 793.8L671.0 795.3L671.5 795.9L672.0 794.9L672.5 793.4L673.0 793.3L673.5 793.6L674.0 792.6L674.5 792.3L675.0 793.9L675.5 794.7L676.0 793.9L676.5 793.3L677.0 793.0L677.5 792.6L678.0 793.3L678.5 795.0L679.0 795.2L679.5 793.6L680.0 792.9L680.5 794.5L681.0 795.8L681.5 793.9L682.0 790.6L682.5 790.9L683.0 794.8L683.5 795.6L684.0 792.1L684.5 791.0L685.0 794.3L685.5 796.2L686.0 794.5L686.5 793.4L687.0 794.7L687.5 795.5L688.0 793.2L688.5 791.6L689.0 793.5L689.5 794.2L690.0 790.3L690.5 787.8L691.0 795.0L691.5 803.8L692.0 799.5L692.5 790.2L693.0 789.5L693.5 787.2L694.0 784.6L694.5 799.3L695.0 813.0L695.5 807.8L696.0 789.4L696.5 784.5L697.0 778.3L697.5 777.0L698.0 782.8L698.5 812.8L699.0 813.0L699.5 800.2L700.0 785.3L700.5 786.2L701.0 798.8L701.5 809.8L702.0 802.0L702.5 777.0L703.0 777.0L703.5 788.7L704.0 813.0L704.5 813.0L705.0 798.3L705.5 777.7L706.0 777.0L706.5 783.7L707.0 800.1L707.5 809.6L708.0 811.5L708.5 802.8L709.0 786.3L709.5 778.8L710.0 788.3L710.5 799.6L711.0 796.9L711.5 785.0L712.0 785.1L712.5 802.6L713.0 812.6L713.5 800.3L714.0 783.7L714.5 783.7L715.0 797.9L715.5 804.4L716.0 788.7L716.5 777.0L717.0 777.0L717.5 810.4L718.0 813.0L718.5 804.7L719.0 781.1L719.5 784.0L720.0 794.6L720.5 791.2L721.0 781.5L721.5 782.1L722.0 799.7L722.5 813.0L723.0 805.9L723.5 787.8L724.0 784.6L724.5 788.3L725.0 788.5L725.5 789.3L726.0 789.7L726.5 791.9L727.0 799.7L727.5 802.6L728.0 795.4L728.5 791.1L729.0 794.9L729.5 797.4L730.0 793.1L730.5 789.0L731.0 791.0L731.5 789.4L732.0 783.8L732.5 791.1L733.0 806.6L733.5 807.0L734.0 796.2L734.5 793.1L735.0 792.1L735.5 783.0L736.0 782.0L736.5 795.6L737.0 802.4L737.5 795.5L738.0 791.9L738.5 795.3L739.0 795.3L739.5 791.2L740.0 789.7L740.5 794.9L741.0 801.5L741.5 798.1L742.0 788.7L742.5 787.1L743.0 791.4L743.5 793.5L744.0 791.8L744.5 790.3L745.0 795.1L745.5 800.2L746.0 796.1L746.5 792.3L747.0 796.3L747.5 795.9L748.0 788.2L748.5 789.0L749.0 800.1L749.5 802.8L750.0 791.9L750.5 784.6L751.0 789.9L751.5 797.4L752.0 797.0L752.5 791.7L753.0 790.0L753.5 793.5L754.0 796.2L754.5 793.6L755.0 789.6L755.5 790.8L756.0 793.7L756.5 793.3L757.0 793.4L757.5 795.7L758.0 796.5L758.5 795.5L759.0 794.6L759.5 791.5L760.0 787.3L760.5 791.6L761.0 799.7L761.5 795.8L762.0 789.7L762.5 796.0L763.0 799.2L763.5 789.9L764.0 785.1L764.5 791.5L765.0 798.2L765.5 800.2L766.0 797.1L766.5 790.2L767.0 787.4L767.5 792.1L768.0 796.1L768.5 795.7L769.0 794.8L769.5 793.5L770.0 792.5L770.5 794.4L771.0 795.0L771.5 791.5L772.0 789.8L772.5 792.7L773.0 795.9L773.5 796.9L774.0 795.9L774.5 795.1L775.0 794.7L775.5 793.0L776.0 791.3L776.5 791.5L777.0 792.6L777.5 794.9L778.0 797.2L778.5 794.1L779.0 788.2L779.5 791.0L780.0 799.1L780.5 797.8L781.0 790.9L781.5 791.9L782.0 797.0L782.5 796.0L783.0 792.2L783.5 793.2L784.0 795.3L784.5 793.8L785.0 792.2L785.5 793.1L786.0 794.5L786.5 794.2L787.0 793.0L787.5 792.2L788.0 791.9L788.5 793.4L789.0 796.3L789.5 795.7L790.0 793.3L790.5 794.5L791.0 795.2L791.5 792.4L792.0 791.5L792.5 793.4L793.0 794.1L793.5 794.6L794.0 795.2L794.5 794.1L795.0 792.6L795.5 792.6L796.0 793.3L796.5 794.2L797.0 793.9L797.5 791.4L798.0 790.2L798.5 793.5L799.0 796.1L799.5 794.3L800.0 792.7L800.5 793.9L801.0 794.5L801.5 793.2L802.0 792.5L802.5 793.5L803.0 795.3L803.5 795.8L804.0 793.7L804.5 790.7L805.0 791.3L805.5 795.2L806.0 796.4L806.5 793.5L807.0 792.9L807.5 795.9L808.0 796.7L808.5 793.1L809.0 790.0L809.5 792.6L810.0 796.8L810.5 794.9L811.0 789.8L811.5 790.6L812.0 796.7L812.5 799.3L813.0 795.7L813.5 791.3L814.0 789.5L814.5 790.1L815.0 793.2L815.5 796.2L816.0 795.8L816.5 791.8L817.0 789.1L817.5 792.8L818.0 798.3L818.5 797.3L819.0 794.1L819.5 795.0L820.0 795.1L820.5 792.4L821.0 793.1L821.5 795.9L822.0 795.2L822.5 792.8L823.0 791.9L823.5 791.6L824.0 791.2L824.5 791.2L825.0 793.2L825.5 797.4L826.0 798.7L826.5 794.3L827.0 790.2L827.5 791.7L828.0 795.3L828.5 796.7L829.0 796.0L829.5 795.1L830.0 795.0L830.5 794.4L831.0 791.6L831.5 789.4L832.0 791.1L832.5 794.7L833.0 797.0L833.5 796.2L834.0 793.4L834.5 792.3L835.0 793.9L835.5 795.6L836.0 794.8L836.5 792.4L837.0 790.2L837.5 790.0L838.0 793.1L838.5 796.6L839.0 796.3L839.5 794.0L840.0 793.8L840.5 795.3L841.0 795.9L841.5 795.0L842.0 793.9L842.5 793.3L843.0 793.1L843.5 793.0L844.0 792.7L844.5 791.7L845.0 791.2L845.5 793.0L846.0 795.8L846.5 796.0L847.0 794.2L847.5 793.7L848.0 794.6L848.5 794.0L849.0 793.3L849.5 794.4L850.0 794.5L850.5 792.1L851.0 790.6L851.5 791.2L852.0 792.0L852.5 793.7L853.0 796.1L853.5 797.2L854.0 797.1L854.5 795.3L855.0 792.0L855.5 790.4L856.0 791.9L856.5 794.3L857.0 795.1L857.5 793.8L858.0 792.0L858.5 791.8L859.0 792.7L859.5 792.9L860.0 793.1L860.5 794.5L861.0 795.2L861.5 794.4L862.0 793.5L862.5 794.1L863.0 795.1L863.5 794.2L864.0 792.8L864.5 792.9L865.0 793.2L865.5 792.9L866.0 792.8L866.5 793.3L867.0 793.4L867.5 792.4L868.0 792.5L868.5 795.3L869.0 797.0L869.5 795.3L870.0 793.0L870.5 792.9L871.0 793.0L871.5 791.8L872.0 791.8L872.5 794.8L873.0 797.2L873.5 795.2L874.0 792.4L874.5 792.9L875.0 793.0L875.5 791.5L876.0 793.6L876.5 797.2L877.0 796.3L877.5 794.2L878.0 795.1L878.5 795.4L879.0 793.4L879.5 792.2L880.0 792.8L880.5 793.1L881.0 792.6L881.5 791.5L882.0 790.6L882.5 791.7L883.0 795.9L883.5 798.7L884.0 796.0L884.5 792.2L885.0 792.1L885.5 792.7L886.0 792.0L886.5 792.8L887.0 794.2L887.5 792.3L888.0 790.3L888.5 792.3L889.0 795.2L889.5 796.0L890.0 796.0L890.5 795.5L891.0 793.6L891.5 793.0L892.0 795.3L892.5 796.4L893.0 793.8L893.5 791.1L894.0 791.4L894.5 793.3L895.0 794.3L895.5 793.7L896.0 792.4L896.5 792.8L897.0 794.1L897.5 793.0L898.0 791.3L898.5 792.6L899.0 795.5L899.5 796.8L900.0 796.1L900.5 794.3L901.0 792.7L901.5 792.0L902.0 792.4L902.5 794.3L903.0 796.7L903.5 795.9L904.0 791.4L904.5 787.9L905.0 788.1L905.5 790.2L906.0 793.2L906.5 797.0L907.0 798.9L907.5 797.2L908.0 794.1L908.5 792.6L909.0 792.6L909.5 793.1L910.0 794.1L910.5 795.0L911.0 794.7L911.5 793.7L912.0 794.4L912.5 795.7L913.0 795.0L913.5 793.7L914.0 793.0L914.5 792.1L915.0 791.6L915.5 792.8L916.0 794.3L916.5 795.2L917.0 795.4L917.5 794.1L918.0 791.5L918.5 790.9L919.0 793.7L919.5 797.1L920.0 797.4L920.5 794.7L921.0 791.7L921.5 791.0L922.0 791.9L922.5 793.4L923.0 795.5L923.5 796.4L924.0 794.4L924.5 792.3L925.0 792.3L925.5 792.1L926.0 790.5L926.5 790.8L927.0 794.4L927.5 797.6L928.0 797.9L928.5 796.5L929.0 795.4L929.5 794.2L930.0 791.9L930.5 789.7L931.0 790.2L931.5 791.9L932.0 791.9L932.5 791.5L933.0 792.4L933.5 793.8L934.0 794.2L934.5 793.9L935.0 794.0L935.5 794.5L936.0 794.7L936.5 794.2L937.0 793.6L937.5 794.2L938.0 796.0L938.5 796.5L939.0 794.3L939.5 792.0L940.0 791.4L940.5 790.6L941.0 789.5L941.5 790.0L942.0 792.4L942.5 795.0L943.0 796.6L943.5 797.1L944.0 796.6L944.5 795.4L945.0 794.0L945.5 792.1L946.0 790.2L946.5 790.7L947.0 794.5L947.5 797.6L948.0 796.6L948.5 793.0L949.0 791.1L949.5 792.5L950.0 794.6L950.5 795.3L951.0 794.9L951.5 793.6L952.0 791.9L952.5 791.1L953.0 791.7L953.5 792.8L954.0 793.8L954.5 794.7L955.0 795.2L955.5 794.8L956.0 794.0L956.5 793.6L957.0 793.5L957.5 793.4L958.0 793.7L958.5 793.6L959.0 793.1L959.5 793.5L960.0 794.8L960.5 795.3L961.0 794.7L961.5 793.7L962.0 792.8L962.5 792.3L963.0 791.9L963.5 791.6L964.0 792.5L964.5 795.2L965.0 797.6L965.5 797.6L966.0 796.1L966.5 794.7L967.0 792.8L967.5 790.9L968.0 791.0L968.5 793.1L969.0 794.4L969.5 793.9L970.0 793.2L970.5 793.6L971.0 793.9L971.5 793.2L972.0 792.4L972.5 792.1L973.0 792.8L973.5 794.1L974.0 794.7L974.5 794.5L975.0 794.2L975.5 794.3L976.0 794.8L976.5 795.1L977.0 794.0L977.5 792.4L978.0 792.5L978.5 794.1L979.0 794.8L979.5 793.8L980.0 792.0L980.5 790.8L981.0 791.5L981.5 793.6L982.0 794.9L982.5 794.9L983.0 794.6L983.5 794.0L984.0 793.1L984.5 793.0L985.0 794.5L985.5 796.5L986.0 796.8L986.5 794.5L987.0 791.6L987.5 790.7L988.0 792.3L988.5 794.4L989.0 794.9L989.5 794.0L990.0 793.5L990.5 793.7L991.0 794.1L991.5 794.1L992.0 794.1L992.5 794.3L993.0 794.3L993.5 794.5L994.0 794.7L994.5 794.4L995.0 793.8L995.5 793.0L996.0 791.7L996.5 790.5L997.0 790.7L997.5 792.4L998.0 794.1L998.5 794.8L999.0 795.2L999.5 795.7L1000.0 795.8L1000.5 794.9L1001.0 793.0L1001.5 791.5L1002.0 792.2L1002.5 794.1L1003.0 794.8L1003.5 793.9L1004.0 792.1L1004.5 791.2L1005.0 792.3L1005.5 794.9L1006.0 796.9L1006.5 797.2L1007.0 796.1L1007.5 794.3L1008.0 792.5L1008.5 792.0L1009.0 792.8L1009.5 793.9L1010.0 794.7L1010.5 794.4L1011.0 793.1L1011.5 792.1L1012.0 792.7L1012.5 794.0L1013.0 794.6L1013.5 795.1L1014.0 795.4L1014.5 794.6L1015.0 792.8L1015.5 792.2L1016.0 793.3L1016.5 794.4L1017.0 794.4L1017.5 793.6L1018.0 792.4L1018.5 791.8L1019.0 792.9L1019.5 794.2L1020.0 794.4L1020.5 793.9L1021.0 793.4L1021.5 793.8L1022.0 794.6L1022.5 794.8L1023.0 793.9L1023.5 793.1L1024.0 793.4L1024.5 794.9L1025.0 795.7L1025.5 794.7L1026.0 793.1L1026.5 792.5L1027.0 792.9L1027.5 792.9L1028.0 792.9L1028.5 793.7L1029.0 794.7L1029.5 795.1L1030.0 794.6L1030.5 793.2L1031.0 792.3L1031.5 793.0L1032.0 794.1L1032.5 793.9L1033.0 792.9L1033.5 792.5L1034.0 792.5L1034.5 792.7L1035.0 793.7L1035.5 794.6L1036.0 794.1L1036.5 793.3L1037.0 794.0L1037.5 794.8L1038.0 794.2L1038.5 793.5L1039.0 793.4L1039.5 793.4L1040.0 793.4L1040.5 793.8L1041.0 794.1L1041.5 794.1L1042.0 794.1L1042.5 794.4L1043.0 794.5L1043.5 793.8L1044.0 792.8L1044.5 792.7L1045.0 793.4L1045.5 794.4L1046.0 794.7L1046.5 793.8L1047.0 792.5L1047.5 792.5L1048.0 793.4L1048.5 794.1L1049.0 794.5L1049.5 794.6L1050.0 794.7L1050.5 794.5L1051.0 793.6L1051.5 792.6L1052.0 792.3L1052.5 792.6L1053.0 793.2L1053.5 793.4L1054.0 793.0L1054.5 792.6L1055.0 792.7L1055.5 793.3L1056.0 793.9L1056.5 794.3L1057.0 794.0L1057.5 794.0L1058.0 794.6L1058.5 794.7L1059.0 794.2L1059.5 793.9L1060.0 793.5L1060.5 793.2L1061.0 793.4L1061.5 794.2L1062.0 794.5L1062.5 794.5L1063.0 794.5L1063.5 793.9L1064.0 792.7L1064.5 792.0L1065.0 792.0L1065.5 792.8L1066.0 794.2L1066.5 794.9L1067.0 794.6L1067.5 794.6L1068.0 794.2L1068.5 793.0L1069.0 792.5L1069.5 793.9L1070.0 795.4L1070.5 795.4L1071.0 794.6L1071.5 793.8L1072.0 793.5L1072.5 793.3L1073.0 792.7L1073.5 792.0L1074.0 791.7L1074.5 792.5L1075.0 793.9L1075.5 795.2L1076.0 795.5L1076.5 794.9L1077.0 794.5L1077.5 794.5L1078.0 793.6L1078.5 792.4L1079.0 792.5L1079.5 792.9L1080.0 792.3L1080.5 791.9L1081.0 793.0L1081.5 795.0L1082.0 796.2L1082.5 796.4L1083.0 795.8L1083.5 794.4L1084.0 792.6L1084.5 791.1L1085.0 790.2L1085.5 790.6L1086.0 793.0L1086.5 795.5L1087.0 795.8L1087.5 794.5L1088.0 793.6L1088.5 793.3L1089.0 792.9L1089.5 793.5L1090.0 795.1L1090.5 795.8L1091.0 794.7L1091.5 793.1L1092.0 792.5L1092.5 793.3L1093.0 795.0L1093.5 796.3L1094.0 795.1L1094.5 792.5L1095.0 791.0L1095.5 791.5L1096.0 793.0L1096.5 794.4L1097.0 795.1L1097.5 794.6L1098.0 793.5L1098.5 793.0L1099.0 793.7L1099.5 794.1L1100.0 793.3L1100.5 792.3L1101.0 792.5L1101.5 793.4L1102.0 793.9L1102.5 793.6L1103.0 793.7L1103.5 794.4L1104.0 794.7L1104.5 794.0L1105.0 793.2L1105.5 793.1L1106.0 793.5L1106.5 793.7L1107.0 793.6L1107.5 793.4L1108.0 793.2L1108.5 793.1L1109.0 793.7L1109.5 794.8L1110.0 796.1L1110.5 796.4L1111.0 795.1L1111.5 793.0L1112.0 791.8L1112.5 792.1L1113.0 793.0L1113.5 793.9L1114.0 794.3L1114.5 793.9L1115.0 793.4L1115.5 793.8L1116.0 794.4L1116.5 794.3L1117.0 793.9L1117.5 793.5L1118.0 792.7L1118.5 792.4L1119.0 792.9L1119.5 793.9L1120.0 794.8L1120.5 795.2L1121.0 795.2L1121.5 794.9L1122.0 794.0L1122.5 793.0L1123.0 792.8L1123.5 793.0L1124.0 793.4L1124.5 793.9L1125.0 794.1L1125.5 793.8L1126.0 793.5L1126.5 793.4L1127.0 793.5L1127.5 794.1L1128.0 794.6L1128.5 794.0L1129.0 792.3L1129.5 791.9L1130.0 793.4L1130.5 795.0L1131.0 795.0L1131.5 794.4L1132.0 793.7L1132.5 792.9L1133.0 792.3L1133.5 792.3L1134.0 792.9L1134.5 793.8L1135.0 795.0L1135.5 796.0L1136.0 795.8L1136.5 794.7L1137.0 792.8L1137.5 791.3L1138.0 791.5L1138.5 793.2L1139.0 795.1L1139.5 795.8L1140.0 795.0L1140.5 793.7L1141.0 792.7L1141.5 792.3L1142.0 792.5L1142.5 793.2L1143.0 793.5L1143.5 794.0L1144.0 794.8L1144.5 794.6L1145.0 793.6L1145.5 792.8L1146.0 792.4L1146.5 792.2L1147.0 792.0L1147.5 792.2L1148.0 793.2L1148.5 794.9L1149.0 795.4L1149.5 794.6L1150.0 794.2L1150.5 794.7L1151.0 794.6L1151.5 793.8L1152.0 792.9L1152.5 791.9L1153.0 791.5L1153.5 792.7L1154.0 794.3L1154.5 794.1L1155.0 792.9L1155.5 793.0L1156.0 794.3L1156.5 795.1L1157.0 795.2L1157.5 795.2L1158.0 794.8L1158.5 793.9L1159.0 793.4L1159.5 793.6L1160.0 794.3L1160.5 794.9L1161.0 795.0L1161.5 794.0L1162.0 792.7L1162.5 792.1L1163.0 792.2L1163.5 792.9L1164.0 793.9L1164.5 794.9L1165.0 795.2L1165.5 795.1L1166.0 794.8L1166.5 793.8L1167.0 792.3L1167.5 791.3L1168.0 792.1L1168.5 793.8L1169.0 794.9L1169.5 794.9L1170.0 794.2L1170.5 793.4L1171.0 793.7L1171.5 794.9L1172.0 795.6L1172.5 795.3L1173.0 794.2L1173.5 792.4L1174.0 791.0L1174.5 791.3L1175.0 792.4L1175.5 793.0L1176.0 793.0L1176.5 793.6L1177.0 794.8L1177.5 795.1L1178.0 793.9L1178.5 792.4L1179.0 792.0L1179.5 792.3L1180.0 792.9L1180.5 794.0L1181.0 795.3L1181.5 796.0L1182.0 795.5L1182.5 794.3L1183.0 793.2L1183.5 792.8L1184.0 793.5L1184.5 794.0L1185.0 793.1L1185.5 791.9L1186.0 792.2L1186.5 793.5L1187.0 794.8L1187.5 795.4L1188.0 795.4L1188.5 794.8L1189.0 793.6L1189.5 792.8L1190.0 793.0L1190.5 793.5L1191.0 793.7L1191.5 793.4L1192.0 792.8L1192.5 792.2L1193.0 792.0L1193.5 792.5L1194.0 793.1L1194.5 793.8L1195.0 794.5L1195.5 795.2L1196.0 795.7L1196.5 795.5L1197.0 794.4L1197.5 793.1L1198.0 792.8L1198.5 793.3L1199.0 793.6L1199.5 793.4L1200.0 793.5L1200.5 793.9L1201.0 793.5L1201.5 792.6L1202.0 792.6L1202.5 793.6L1203.0 794.4L1203.5 794.7L1204.0 795.2L1204.5 795.9L1205.0 795.8L1205.5 794.6L1206.0 793.1L1206.5 792.4L1207.0 792.5L1207.5 793.0L1208.0 793.5L1208.5 794.0L1209.0 794.4L1209.5 794.4L1210.0 794.2L1210.5 794.0L1211.0 793.3L1211.5 792.6L1212.0 792.6L1212.5 793.2L1213.0 793.6L1213.5 793.7L1214.0 794.0L1214.5 794.4L1215.0 794.1L1215.5 793.1L1216.0 792.7L1216.5 793.4L1217.0 794.5L1217.5 795.0L1218.0 794.7L1218.5 793.8L1219.0 793.1L1219.5 792.7L1220.0 792.4L1220.5 792.3L1221.0 792.8L1221.5 793.6L1222.0 794.1L1222.5 794.4L1223.0 794.5L1223.5 794.1L1224.0 793.4L1224.5 792.9L1225.0 793.1L1225.5 793.9L1226.0 794.6L1226.5 794.3L1227.0 793.2L1227.5 792.6L1228.0 793.3L1228.5 794.5L1229.0 794.9L1229.5 794.6L1230.0 794.2L1230.5 794.0L1231.0 793.6L1231.5 793.5L1232.0 793.7L1232.5 793.6L1233.0 793.0L1233.5 792.5L1234.0 792.5L1234.5 792.8L1235.0 793.2L1235.5 794.0L1236.0 794.8L1236.5 794.6L1237.0 793.5L1237.5 792.4L1238.0 792.5L1238.5 794.0L1239.0 795.5L1239.5 795.8L1240.0 795.2L1240.5 794.1L1241.0 793.1L1241.5 792.2L1242.0 792.2L1242.5 793.1L1243.0 794.4L1243.5 795.0L1244.0 794.7L1244.5 793.8L1245.0 793.4L1245.5 793.4L1246.0 793.4L1246.5 793.4L1247.0 793.5L1247.5 793.6L1248.0 793.4L1248.5 793.3L1249.0 793.7L1249.5 794.4L1250.0 794.4L1250.5 793.8L1251.0 793.7L1251.5 794.4L1252.0 794.8L1252.5 794.3L1253.0 793.4L1253.5 792.6L1254.0 792.5L1254.5 793.2L1255.0 794.2L1255.5 794.4L1256.0 793.8L1256.5 793.4L1257.0 793.5L1257.5 793.3L1258.0 792.3L1258.5 791.8L1259.0 792.5L1259.5 793.9L1260.0 794.8L1260.5 795.0L1261.0 794.9L1261.5 794.8L1262.0 794.7L1262.5 794.4L1263.0 793.7L1263.5 792.9L1264.0 792.5L1264.5 792.6L1265.0 792.8L1265.5 793.4L1266.0 794.3L1266.5 794.8L1267.0 794.5L1267.5 794.0L1268.0 793.6L1268.5 793.6L1269.0 793.6L1269.5 793.8L1270.0 793.8L1270.5 793.1L1271.0 792.0L1271.5 791.9L1272.0 793.4L1272.5 795.0L1273.0 795.3L1273.5 794.7L1274.0 794.0L1274.5 793.7L1275.0 793.6L1275.5 793.8L1276.0 793.7L1276.5 793.4L1277.0 793.6L1277.5 794.2L1278.0 794.2L1278.5 793.5L1279.0 793.0L1279.5 793.2L1280.0 793.8L1280.5 794.1L1281.0 794.0L1281.5 793.5L1282.0 792.9L1282.5 792.8L1283.0 793.6L1283.5 794.3L1284.0 794.0L1284.5 793.5L1285.0 793.6L1285.5 794.0L1286.0 794.0L1286.5 794.2L1287.0 794.4L1287.5 794.1L1288.0 793.3L1288.5 792.5L1289.0 792.3L1289.5 793.4L1290.0 794.8L1290.5 794.9L1291.0 793.8L1291.5 792.9L1292.0 793.0L1292.5 793.0L1293.0 792.6L1293.5 793.1L1294.0 794.8L1294.5 795.9L1295.0 795.5L1295.5 794.6L1296.0 793.7L1296.5 793.0L1297.0 792.8L1297.5 792.9L1298.0 793.0L1298.5 793.6L1299.0 794.5L1299.5 795.0L1300.0 794.7L1300.5 793.7L1301.0 792.7L1301.5 792.5L1302.0 793.4L1302.5 794.5L1303.0 794.7L1303.5 793.8L1304.0 792.8L1304.5 792.8L1305.0 793.7L1305.5 794.7L1306.0 795.0L1306.5 794.4L1307.0 793.4L1307.5 792.6L1308.0 792.6L1308.5 793.3L1309.0 794.0L1309.5 794.0L1310.0 793.5L1310.5 793.2L1311.0 793.2L1311.5 793.1L1312.0 793.3L1312.5 794.0L1313.0 794.9L1313.5 795.0L1314.0 794.0L1314.5 793.2L1315.0 793.1L1315.5 793.3L1316.0 793.8L1316.5 794.6L1317.0 794.8L1317.5 794.3L1318.0 793.7L1318.5 793.6L1319.0 793.6L1319.5 793.4L1320.0 793.1L1320.5 793.0L1321.0 793.1L1321.5 793.0L1322.0 793.1L1322.5 793.6L1323.0 794.4L1323.5 794.6L1324.0 794.0L1324.5 793.2L1325.0 792.9L1325.5 792.9L1326.0 793.0L1326.5 793.2L1327.0 793.8L1327.5 794.5L1328.0 794.9L1328.5 794.5L1329.0 793.8L1329.5 793.5L1330.0 793.8L1330.5 794.6L1331.0 795.3L1331.5 795.1L1332.0 793.7L1332.5 792.1L1333.0 791.5L1333.5 791.8L1334.0 792.9L1334.5 794.3L1335.0 795.2L1335.5 795.1L1336.0 794.2L1336.5 793.5L1337.0 793.2L1337.5 793.5L1338.0 794.1L1338.5 794.4L1339.0 794.4L1339.5 794.2L1340.0 793.9L1340.5 793.8L1341.0 793.7L1341.5 793.7L1342.0 793.7L1342.5 793.5L1343.0 793.4L1343.5 793.1L1344.0 793.0L1344.5 793.1L1345.0 793.2L1345.5 793.3L1346.0 793.4L1346.5 793.5L1347.0 793.8L1347.5 793.9L1348.0 793.9L1348.5 793.9L1349.0 794.0L1349.5 793.8L1350.0 793.2L1350.5 792.9L1351.0 793.2L1351.5 793.7L1352.0 794.2L1352.5 794.3L1353.0 793.9L1353.5 793.8L1354.0 794.3L1354.5 794.6L1355.0 794.1L1355.5 793.3L1356.0 792.8L1356.5 792.7L1357.0 793.2L1357.5 794.0L1358.0 794.3L1358.5 794.4L1359.0 794.4L1359.5 793.9L1360.0 793.3L1360.5 793.2L1361.0 793.9L1361.5 794.1L1362.0 793.0L1362.5 791.7L1363.0 791.6L1363.5 792.8L1364.0 794.1" stroke="#7a7a7a" stroke-width="1" fill="none" stroke-linejoin="round"/><g shape-rendering="crispEdges"><rect x="154" y="777" width="37" height="36" fill="#000" fill-opacity=".373"/><rect x="191" y="777" width="229" height="36" fill="#000" fill-opacity=".25"/><rect x="1341" y="777" width="62" height="36" fill="#000" fill-opacity=".373"/><path d="M1364 794.5H1403" stroke="#8c8cb4" stroke-opacity=".55"/><path d="M466.5 777V813" stroke="#0000c0" stroke-width="1"/><path d="M698.5 777V813" stroke="#0000c0" stroke-width="1"/><path d="M723.5 777V813" stroke="#b40000" stroke-width="1"/></g><text transform="translate(468.2 810.8) scale(.84 1)" style="font-size:15.200px" fill="#0000c0">P</text><text transform="translate(700.2 810.8) scale(.84 1)" style="font-size:15.200px" fill="#0000c0">S</text><g shape-rendering="crispEdges"><rect x="420" y="803" width="927" height="10" fill="rgb(160,0,0)" fill-opacity="0.28"/></g><text x="158" y="794.1" text-anchor="start" fill="#232323" >amax: 2.4 M</text><text x="158" y="809.4" text-anchor="start" fill="#232323" >mean: 200.7</text><text x="725.5" y="792.8" text-anchor="start" fill="#a41414" style="letter-spacing:-.25px">MLv: 4.37</text></g>
<defs><clipPath id="lc"><rect x="8" y="540" width="146" height="270"/></clipPath></defs><g clip-path="url(#lc)"><text x="16" y="558.6" text-anchor="start" fill="#111" style="font-weight:bold;font-size:14.500px">PB01</text><text x="78" y="558.6" text-anchor="start" fill="#232323" style="letter-spacing:-.8px">CX</text><text x="129" y="579.8" text-anchor="end" fill="#c4c4c4" >0.7°</text><text x="16" y="597.6" text-anchor="start" fill="#111" style="font-weight:bold;font-size:14.500px">PB09</text><text x="78" y="597.6" text-anchor="start" fill="#232323" style="letter-spacing:-.8px">CX</text><text x="129" y="618.8" text-anchor="end" fill="#c4c4c4" >0.8°</text><text x="16" y="636.6" text-anchor="start" fill="#111" style="font-weight:bold;font-size:14.500px">PB08</text><text x="78" y="636.6" text-anchor="start" fill="#232323" style="letter-spacing:-.8px">CX</text><text x="129" y="657.8" text-anchor="end" fill="#c4c4c4" >1.1°</text><text x="16" y="675.6" text-anchor="start" fill="#111" style="font-weight:bold;font-size:14.500px">PB02</text><text x="78" y="675.6" text-anchor="start" fill="#232323" style="letter-spacing:-.8px">CX</text><text x="129" y="696.8" text-anchor="end" fill="#c4c4c4" >1.1°</text><text x="16" y="713.6" text-anchor="start" fill="#111" style="font-weight:bold;font-size:14.500px">PB03</text><text x="78" y="713.6" text-anchor="start" fill="#232323" style="letter-spacing:-.8px">CX</text><text x="129" y="734.8" text-anchor="end" fill="#c4c4c4" >1.3°</text><text x="16" y="752.6" text-anchor="start" fill="#111" style="font-weight:bold;font-size:14.500px">PATCX</text><text x="78" y="752.6" text-anchor="start" fill="#232323" style="letter-spacing:-.8px">CX</text><text x="129" y="773.8" text-anchor="end" fill="#c4c4c4" >1.4°</text><text x="16" y="790.6" text-anchor="start" fill="#111" style="font-weight:bold;font-size:14.500px">PB06</text><text x="78" y="790.6" text-anchor="start" fill="#232323" style="letter-spacing:-.8px">CX</text><text x="129" y="811.8" text-anchor="end" fill="#c4c4c4" >1.8°</text></g><g shape-rendering="crispEdges"><path d="M154 812.500H1423" stroke="#000"/><path d="M162.5 813V818" stroke="#000"/><path d="M190.5 813V822" stroke="#000"/><path d="M218.5 813V818" stroke="#000"/><path d="M245.5 813V818" stroke="#000"/><path d="M273.5 813V818" stroke="#000"/><path d="M300.5 813V818" stroke="#000"/><path d="M328.5 813V822" stroke="#000"/><path d="M356.5 813V818" stroke="#000"/><path d="M383.5 813V818" stroke="#000"/><path d="M411.5 813V818" stroke="#000"/><path d="M438.5 813V818" stroke="#000"/><path d="M466.5 813V822" stroke="#000"/><path d="M494.5 813V818" stroke="#000"/><path d="M521.5 813V818" stroke="#000"/><path d="M549.5 813V818" stroke="#000"/><path d="M576.5 813V818" stroke="#000"/><path d="M604.5 813V822" stroke="#000"/><path d="M632.5 813V818" stroke="#000"/><path d="M659.5 813V818" stroke="#000"/><path d="M687.5 813V818" stroke="#000"/><path d="M714.5 813V818" stroke="#000"/><path d="M742.5 813V822" stroke="#000"/><path d="M770.5 813V818" stroke="#000"/><path d="M797.5 813V818" stroke="#000"/><path d="M825.5 813V818" stroke="#000"/><path d="M852.5 813V818" stroke="#000"/><path d="M880.5 813V822" stroke="#000"/><path d="M908.5 813V818" stroke="#000"/><path d="M935.5 813V818" stroke="#000"/><path d="M963.5 813V818" stroke="#000"/><path d="M990.5 813V818" stroke="#000"/><path d="M1018.5 813V822" stroke="#000"/><path d="M1046.5 813V818" stroke="#000"/><path d="M1073.5 813V818" stroke="#000"/><path d="M1101.5 813V818" stroke="#000"/><path d="M1128.5 813V818" stroke="#000"/><path d="M1156.5 813V822" stroke="#000"/><path d="M1184.5 813V818" stroke="#000"/><path d="M1211.5 813V818" stroke="#000"/><path d="M1239.5 813V818" stroke="#000"/><path d="M1266.5 813V818" stroke="#000"/><path d="M1294.5 813V822" stroke="#000"/><path d="M1322.5 813V818" stroke="#000"/><path d="M1349.5 813V818" stroke="#000"/><path d="M1377.5 813V818" stroke="#000"/><path d="M1404.5 813V818" stroke="#000"/></g><text x="190" y="840.8" text-anchor="middle" fill="#232323" >-30</text><text x="328" y="840.8" text-anchor="middle" fill="#232323" >-15</text><text x="466" y="840.8" text-anchor="middle" fill="#232323" >0</text><text x="604" y="840.8" text-anchor="middle" fill="#232323" >15</text><text x="742" y="840.8" text-anchor="middle" fill="#232323" >30</text><text x="880" y="840.8" text-anchor="middle" fill="#232323" >45</text><text x="1018" y="840.8" text-anchor="middle" fill="#232323" >60</text><text x="1156" y="840.8" text-anchor="middle" fill="#232323" >75</text><text x="1294" y="840.8" text-anchor="middle" fill="#232323" >90</text><path d="M189 812.400l7.300 14.400h-14.600z" fill="#000"/><path d="M420 812.400l7.300 14.400h-14.600z" fill="#000"/><path d="M1212 812.400l7.300 14.400h-14.600z" fill="#000"/></svg>
</body></html>
